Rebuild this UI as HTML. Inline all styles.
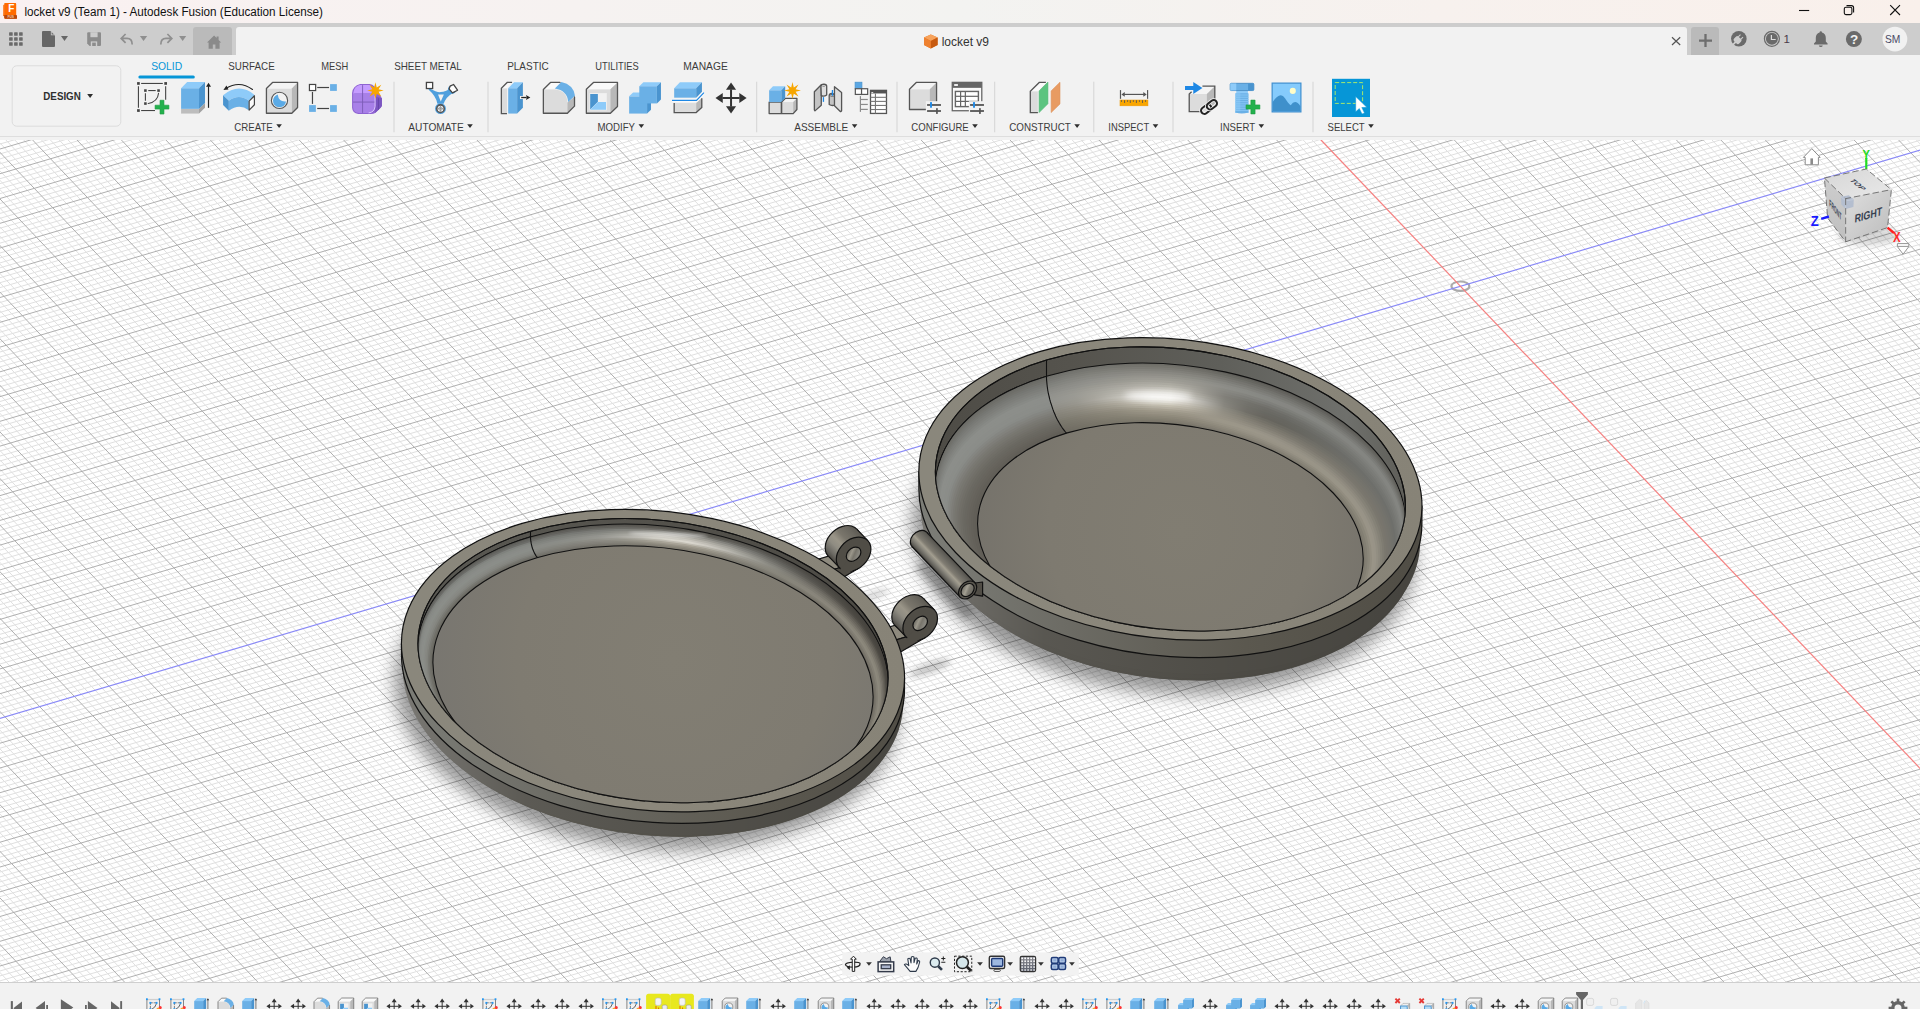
<!DOCTYPE html>
<html lang="en"><head><meta charset="utf-8"><title>locket v9 (Team 1) - Autodesk Fusion (Education License)</title>
<style>html,body{margin:0;padding:0;width:1920px;height:1009px;overflow:hidden;background:#fff}svg{position:absolute;left:0;top:0;display:block}text{font-family:"Liberation Sans",sans-serif}</style></head><body>
<svg width="1920" height="1009" viewBox="0 0 1920 1009">
<defs><linearGradient id="titlegrad" x1="0" x2="1" y1="0" y2="0"><stop offset="0" stop-color="#faf1f1"/><stop offset="0.3" stop-color="#f6f2f1"/><stop offset="0.5" stop-color="#f3f3f1"/><stop offset="0.75" stop-color="#f7f1ee"/><stop offset="1" stop-color="#f9f0eb"/></linearGradient><linearGradient id="navgrid" x1="0" x2="0" y1="0" y2="1"><stop offset="0" stop-color="#8a8a90"/><stop offset="1" stop-color="#5a5f6c"/></linearGradient><linearGradient id="vc-top" x1="0" x2="1" y1="0" y2="1"><stop offset="0" stop-color="#d6d6d6"/><stop offset="1" stop-color="#e9e9e9"/></linearGradient><linearGradient id="vc-left" x1="0" x2="0" y1="0" y2="1"><stop offset="0" stop-color="#cdcdcd"/><stop offset="1" stop-color="#bfbfbf"/></linearGradient><linearGradient id="vc-right" x1="0" x2="1" y1="0" y2="1"><stop offset="0" stop-color="#dedede"/><stop offset="1" stop-color="#bcbcbc"/></linearGradient><filter id="blur4" x="-30%" y="-60%" width="160%" height="220%"><feGaussianBlur stdDeviation="3.5"/></filter></defs>
<g id="viewport"><defs><linearGradient id="L-band" gradientUnits="userSpaceOnUse" x1="401.5" x2="904.5" y1="0" y2="0"><stop offset="0" stop-color="#7b7c76"/><stop offset="0.35" stop-color="#6b6a63"/><stop offset="0.7" stop-color="#5c5950"/><stop offset="1" stop-color="#514e46"/></linearGradient>
<linearGradient id="L-dome" gradientUnits="userSpaceOnUse" x1="401.5" x2="904.5" y1="0" y2="0"><stop offset="0" stop-color="#6f6e68"/><stop offset="0.3" stop-color="#55534c"/><stop offset="0.7" stop-color="#4b4841"/><stop offset="1" stop-color="#45423c"/></linearGradient>
<linearGradient id="L-wall" gradientUnits="userSpaceOnUse" x1="401.5" x2="904.5" y1="0" y2="0"><stop offset="0" stop-color="#5a5953"/><stop offset="0.5" stop-color="#54524c"/><stop offset="1" stop-color="#4b4943"/></linearGradient>
<linearGradient id="L-rim" gradientUnits="userSpaceOnUse" x1="401.5" x2="904.5" y1="0" y2="0"><stop offset="0" stop-color="#8a877c"/><stop offset="0.5" stop-color="#8b877b"/><stop offset="1" stop-color="#878377"/></linearGradient>
<radialGradient id="L-floor" gradientUnits="userSpaceOnUse" cx="673" cy="659.5" r="260"><stop offset="0" stop-color="#827e73"/><stop offset="0.6" stop-color="#7f7b71"/><stop offset="1" stop-color="#777570"/></radialGradient>
<clipPath id="L-domeclip"><path d="M396.5 655.1L909.5 689.2L909.5 1089.2L396.5 1055.1Z"/></clipPath>
<linearGradient id="L-domeov" gradientUnits="userSpaceOnUse" x1="401.5" x2="904.5" y1="0" y2="0"><stop offset="0" stop-color="#fff" stop-opacity="0.22"/><stop offset="0.25" stop-color="#fff" stop-opacity="0.04"/><stop offset="0.6" stop-color="#000" stop-opacity="0.04"/><stop offset="1" stop-color="#000" stop-opacity="0.16"/></linearGradient>
<clipPath id="L-in"><path d="M853.2 601.4A236 140.5 -173.5 0 1 776.1 789.8A236 140.5 -173.5 0 1 452.8 719.9A236 140.5 -173.5 0 1 529.9 531.5A236 140.5 -173.5 0 1 853.2 601.4Z"/></clipPath>
<linearGradient id="L-f0" gradientUnits="userSpaceOnUse" x1="417.9" x2="888.1" y1="0" y2="0"><stop offset="0.00" stop-color="#5b5b56"/><stop offset="0.04" stop-color="#5b5b56"/><stop offset="0.08" stop-color="#5b5b56"/><stop offset="0.12" stop-color="#5a5a55"/><stop offset="0.17" stop-color="#5a5954"/><stop offset="0.21" stop-color="#595853"/><stop offset="0.25" stop-color="#595752"/><stop offset="0.29" stop-color="#585651"/><stop offset="0.33" stop-color="#575651"/><stop offset="0.38" stop-color="#575550"/><stop offset="0.42" stop-color="#56544f"/><stop offset="0.46" stop-color="#56544e"/><stop offset="0.50" stop-color="#55534e"/><stop offset="0.54" stop-color="#55534d"/><stop offset="0.58" stop-color="#55534d"/><stop offset="0.62" stop-color="#55534d"/><stop offset="0.67" stop-color="#55534d"/><stop offset="0.71" stop-color="#53514c"/><stop offset="0.75" stop-color="#504e49"/><stop offset="0.79" stop-color="#4d4a45"/><stop offset="0.83" stop-color="#4a4742"/><stop offset="0.88" stop-color="#47443f"/><stop offset="0.92" stop-color="#45423d"/><stop offset="0.96" stop-color="#44413c"/><stop offset="1.00" stop-color="#44413c"/></linearGradient>
<linearGradient id="L-f1" gradientUnits="userSpaceOnUse" x1="418" x2="888" y1="0" y2="0"><stop offset="0.00" stop-color="#646460"/><stop offset="0.04" stop-color="#646460"/><stop offset="0.08" stop-color="#63645f"/><stop offset="0.12" stop-color="#63635f"/><stop offset="0.17" stop-color="#63635e"/><stop offset="0.21" stop-color="#63625e"/><stop offset="0.25" stop-color="#62625d"/><stop offset="0.29" stop-color="#62615d"/><stop offset="0.33" stop-color="#61605c"/><stop offset="0.38" stop-color="#605f5a"/><stop offset="0.42" stop-color="#5f5e59"/><stop offset="0.46" stop-color="#5e5c57"/><stop offset="0.50" stop-color="#5c5a54"/><stop offset="0.54" stop-color="#5b5953"/><stop offset="0.58" stop-color="#5b5953"/><stop offset="0.62" stop-color="#5c5a54"/><stop offset="0.67" stop-color="#5c5a55"/><stop offset="0.71" stop-color="#5a5954"/><stop offset="0.75" stop-color="#575550"/><stop offset="0.79" stop-color="#52504b"/><stop offset="0.83" stop-color="#4e4c46"/><stop offset="0.88" stop-color="#4a4742"/><stop offset="0.92" stop-color="#47443f"/><stop offset="0.96" stop-color="#46433e"/><stop offset="1.00" stop-color="#46433d"/></linearGradient>
<linearGradient id="L-f2" gradientUnits="userSpaceOnUse" x1="418.3" x2="887.7" y1="0" y2="0"><stop offset="0.00" stop-color="#6c6d69"/><stop offset="0.04" stop-color="#6c6d69"/><stop offset="0.08" stop-color="#6c6d69"/><stop offset="0.12" stop-color="#6c6d69"/><stop offset="0.17" stop-color="#6c6d69"/><stop offset="0.21" stop-color="#6c6d68"/><stop offset="0.25" stop-color="#6c6c68"/><stop offset="0.29" stop-color="#6c6c68"/><stop offset="0.33" stop-color="#6c6c68"/><stop offset="0.38" stop-color="#6c6c67"/><stop offset="0.42" stop-color="#6c6c67"/><stop offset="0.46" stop-color="#6c6b66"/><stop offset="0.50" stop-color="#6d6b66"/><stop offset="0.54" stop-color="#6d6b65"/><stop offset="0.58" stop-color="#6d6b65"/><stop offset="0.62" stop-color="#6c6b65"/><stop offset="0.67" stop-color="#6a6964"/><stop offset="0.71" stop-color="#666560"/><stop offset="0.75" stop-color="#5f5e59"/><stop offset="0.79" stop-color="#595752"/><stop offset="0.83" stop-color="#52504b"/><stop offset="0.88" stop-color="#4d4b45"/><stop offset="0.92" stop-color="#494741"/><stop offset="0.96" stop-color="#47453f"/><stop offset="1.00" stop-color="#47443f"/></linearGradient>
<linearGradient id="L-f3" gradientUnits="userSpaceOnUse" x1="418.8" x2="887.2" y1="0" y2="0"><stop offset="0.00" stop-color="#7f817d"/><stop offset="0.04" stop-color="#7f817d"/><stop offset="0.08" stop-color="#7f817d"/><stop offset="0.12" stop-color="#7e7f7b"/><stop offset="0.17" stop-color="#7c7e7a"/><stop offset="0.21" stop-color="#7b7c78"/><stop offset="0.25" stop-color="#7a7b77"/><stop offset="0.29" stop-color="#787a75"/><stop offset="0.33" stop-color="#787975"/><stop offset="0.38" stop-color="#7a7a76"/><stop offset="0.42" stop-color="#7d7e79"/><stop offset="0.46" stop-color="#83837d"/><stop offset="0.50" stop-color="#898882"/><stop offset="0.54" stop-color="#8c8b85"/><stop offset="0.58" stop-color="#8c8b85"/><stop offset="0.62" stop-color="#888781"/><stop offset="0.67" stop-color="#807f7a"/><stop offset="0.71" stop-color="#757570"/><stop offset="0.75" stop-color="#6a6964"/><stop offset="0.79" stop-color="#5f5e59"/><stop offset="0.83" stop-color="#575550"/><stop offset="0.88" stop-color="#504e48"/><stop offset="0.92" stop-color="#4c4943"/><stop offset="0.96" stop-color="#494640"/><stop offset="1.00" stop-color="#494640"/></linearGradient>
<linearGradient id="L-f4" gradientUnits="userSpaceOnUse" x1="419.4" x2="886.6" y1="0" y2="0"><stop offset="0.00" stop-color="#868984"/><stop offset="0.04" stop-color="#868984"/><stop offset="0.08" stop-color="#868884"/><stop offset="0.12" stop-color="#858783"/><stop offset="0.17" stop-color="#838581"/><stop offset="0.21" stop-color="#82837f"/><stop offset="0.25" stop-color="#80827d"/><stop offset="0.29" stop-color="#7f817c"/><stop offset="0.33" stop-color="#80817c"/><stop offset="0.38" stop-color="#83847f"/><stop offset="0.42" stop-color="#8a8a84"/><stop offset="0.46" stop-color="#94938d"/><stop offset="0.50" stop-color="#9e9d95"/><stop offset="0.54" stop-color="#a5a29b"/><stop offset="0.58" stop-color="#a4a29a"/><stop offset="0.62" stop-color="#9d9b94"/><stop offset="0.67" stop-color="#908f89"/><stop offset="0.71" stop-color="#81807b"/><stop offset="0.75" stop-color="#73726c"/><stop offset="0.79" stop-color="#66655f"/><stop offset="0.83" stop-color="#5d5b55"/><stop offset="0.88" stop-color="#56534d"/><stop offset="0.92" stop-color="#514e48"/><stop offset="0.96" stop-color="#4e4b45"/><stop offset="1.00" stop-color="#4e4b45"/></linearGradient>
<linearGradient id="L-f5" gradientUnits="userSpaceOnUse" x1="420.2" x2="885.8" y1="0" y2="0"><stop offset="0.00" stop-color="#898b87"/><stop offset="0.04" stop-color="#898b87"/><stop offset="0.08" stop-color="#888b86"/><stop offset="0.12" stop-color="#888a85"/><stop offset="0.17" stop-color="#878984"/><stop offset="0.21" stop-color="#868883"/><stop offset="0.25" stop-color="#858782"/><stop offset="0.29" stop-color="#858682"/><stop offset="0.33" stop-color="#878883"/><stop offset="0.38" stop-color="#8c8d87"/><stop offset="0.42" stop-color="#969690"/><stop offset="0.46" stop-color="#a4a39b"/><stop offset="0.50" stop-color="#b2b0a7"/><stop offset="0.54" stop-color="#bbb8af"/><stop offset="0.58" stop-color="#bab7ae"/><stop offset="0.62" stop-color="#b0aea6"/><stop offset="0.67" stop-color="#a09e97"/><stop offset="0.71" stop-color="#8e8d86"/><stop offset="0.75" stop-color="#7d7c76"/><stop offset="0.79" stop-color="#716f69"/><stop offset="0.83" stop-color="#67655e"/><stop offset="0.88" stop-color="#615e57"/><stop offset="0.92" stop-color="#5c5952"/><stop offset="0.96" stop-color="#5a574f"/><stop offset="1.00" stop-color="#5a574f"/></linearGradient>
<linearGradient id="L-f6" gradientUnits="userSpaceOnUse" x1="421.2" x2="884.8" y1="0" y2="0"><stop offset="0.00" stop-color="#8b8d89"/><stop offset="0.04" stop-color="#8b8d89"/><stop offset="0.08" stop-color="#8a8d88"/><stop offset="0.12" stop-color="#8a8d88"/><stop offset="0.17" stop-color="#8a8c87"/><stop offset="0.21" stop-color="#8a8c87"/><stop offset="0.25" stop-color="#8a8b86"/><stop offset="0.29" stop-color="#8a8c87"/><stop offset="0.33" stop-color="#8d8e89"/><stop offset="0.38" stop-color="#94948f"/><stop offset="0.42" stop-color="#a0a099"/><stop offset="0.46" stop-color="#b0afa8"/><stop offset="0.50" stop-color="#c1beb6"/><stop offset="0.54" stop-color="#cbc8bf"/><stop offset="0.58" stop-color="#cac7bf"/><stop offset="0.62" stop-color="#bfbcb4"/><stop offset="0.67" stop-color="#acaba3"/><stop offset="0.71" stop-color="#989790"/><stop offset="0.75" stop-color="#87867f"/><stop offset="0.79" stop-color="#7a7972"/><stop offset="0.83" stop-color="#726f68"/><stop offset="0.88" stop-color="#6c6961"/><stop offset="0.92" stop-color="#68645c"/><stop offset="0.96" stop-color="#66625a"/><stop offset="1.00" stop-color="#666259"/></linearGradient>
<linearGradient id="L-f7" gradientUnits="userSpaceOnUse" x1="422.3" x2="883.7" y1="0" y2="0"><stop offset="0.00" stop-color="#8b8e89"/><stop offset="0.04" stop-color="#8b8e89"/><stop offset="0.08" stop-color="#8b8e89"/><stop offset="0.12" stop-color="#8b8d88"/><stop offset="0.17" stop-color="#8a8c87"/><stop offset="0.21" stop-color="#8a8c87"/><stop offset="0.25" stop-color="#8a8b86"/><stop offset="0.29" stop-color="#8b8c86"/><stop offset="0.33" stop-color="#8e8f89"/><stop offset="0.38" stop-color="#969690"/><stop offset="0.42" stop-color="#a5a49e"/><stop offset="0.46" stop-color="#b9b7b0"/><stop offset="0.50" stop-color="#cdcbc2"/><stop offset="0.54" stop-color="#dad7ce"/><stop offset="0.58" stop-color="#d9d6cd"/><stop offset="0.62" stop-color="#cbc8c0"/><stop offset="0.67" stop-color="#b5b3ac"/><stop offset="0.71" stop-color="#9f9e96"/><stop offset="0.75" stop-color="#8d8c84"/><stop offset="0.79" stop-color="#817f77"/><stop offset="0.83" stop-color="#7a776f"/><stop offset="0.88" stop-color="#757269"/><stop offset="0.92" stop-color="#736f66"/><stop offset="0.96" stop-color="#716d64"/><stop offset="1.00" stop-color="#716d64"/></linearGradient>
<linearGradient id="L-f8" gradientUnits="userSpaceOnUse" x1="423.5" x2="882.5" y1="0" y2="0"><stop offset="0.00" stop-color="#898b86"/><stop offset="0.04" stop-color="#898b86"/><stop offset="0.08" stop-color="#898b86"/><stop offset="0.12" stop-color="#888a85"/><stop offset="0.17" stop-color="#888984"/><stop offset="0.21" stop-color="#878883"/><stop offset="0.25" stop-color="#878882"/><stop offset="0.29" stop-color="#878882"/><stop offset="0.33" stop-color="#8a8a83"/><stop offset="0.38" stop-color="#908f88"/><stop offset="0.42" stop-color="#9a9991"/><stop offset="0.46" stop-color="#a9a79e"/><stop offset="0.50" stop-color="#b8b5ab"/><stop offset="0.54" stop-color="#c1bdb3"/><stop offset="0.58" stop-color="#c1bdb2"/><stop offset="0.62" stop-color="#b6b3a9"/><stop offset="0.67" stop-color="#a7a49b"/><stop offset="0.71" stop-color="#97958d"/><stop offset="0.75" stop-color="#8c8a81"/><stop offset="0.79" stop-color="#848279"/><stop offset="0.83" stop-color="#807d74"/><stop offset="0.88" stop-color="#7e7b71"/><stop offset="0.92" stop-color="#7d796f"/><stop offset="0.96" stop-color="#7d796e"/><stop offset="1.00" stop-color="#7c786e"/></linearGradient>
<linearGradient id="L-f9" gradientUnits="userSpaceOnUse" x1="424.9" x2="881.1" y1="0" y2="0"><stop offset="0.00" stop-color="#878883"/><stop offset="0.04" stop-color="#878883"/><stop offset="0.08" stop-color="#868882"/><stop offset="0.12" stop-color="#868782"/><stop offset="0.17" stop-color="#858681"/><stop offset="0.21" stop-color="#84857f"/><stop offset="0.25" stop-color="#84847e"/><stop offset="0.29" stop-color="#84847d"/><stop offset="0.33" stop-color="#85847e"/><stop offset="0.38" stop-color="#898780"/><stop offset="0.42" stop-color="#908e85"/><stop offset="0.46" stop-color="#99968c"/><stop offset="0.50" stop-color="#a39f93"/><stop offset="0.54" stop-color="#a9a498"/><stop offset="0.58" stop-color="#a9a497"/><stop offset="0.62" stop-color="#a29e92"/><stop offset="0.67" stop-color="#98958b"/><stop offset="0.71" stop-color="#908d84"/><stop offset="0.75" stop-color="#8a887e"/><stop offset="0.79" stop-color="#87857b"/><stop offset="0.83" stop-color="#87847a"/><stop offset="0.88" stop-color="#878379"/><stop offset="0.92" stop-color="#878478"/><stop offset="0.96" stop-color="#888478"/><stop offset="1.00" stop-color="#888478"/></linearGradient>
<linearGradient id="L-f10" gradientUnits="userSpaceOnUse" x1="426.4" x2="879.6" y1="0" y2="0"><stop offset="0.00" stop-color="#82837d"/><stop offset="0.04" stop-color="#82837d"/><stop offset="0.08" stop-color="#82827d"/><stop offset="0.12" stop-color="#81827c"/><stop offset="0.17" stop-color="#81817b"/><stop offset="0.21" stop-color="#80807a"/><stop offset="0.25" stop-color="#807f79"/><stop offset="0.29" stop-color="#807f78"/><stop offset="0.33" stop-color="#817f78"/><stop offset="0.38" stop-color="#83817a"/><stop offset="0.42" stop-color="#88867d"/><stop offset="0.46" stop-color="#8f8c81"/><stop offset="0.50" stop-color="#969286"/><stop offset="0.54" stop-color="#9a9589"/><stop offset="0.58" stop-color="#9a9589"/><stop offset="0.62" stop-color="#959185"/><stop offset="0.67" stop-color="#8f8b81"/><stop offset="0.71" stop-color="#8a877d"/><stop offset="0.75" stop-color="#87857b"/><stop offset="0.79" stop-color="#87847a"/><stop offset="0.83" stop-color="#88857b"/><stop offset="0.88" stop-color="#8a867b"/><stop offset="0.92" stop-color="#8b877c"/><stop offset="0.96" stop-color="#8c887c"/><stop offset="1.00" stop-color="#8c887c"/></linearGradient>
<linearGradient id="L-f11" gradientUnits="userSpaceOnUse" x1="427.9" x2="878.1" y1="0" y2="0"><stop offset="0.00" stop-color="#797973"/><stop offset="0.04" stop-color="#797973"/><stop offset="0.08" stop-color="#797973"/><stop offset="0.12" stop-color="#797972"/><stop offset="0.17" stop-color="#797972"/><stop offset="0.21" stop-color="#797872"/><stop offset="0.25" stop-color="#797872"/><stop offset="0.29" stop-color="#7a7972"/><stop offset="0.33" stop-color="#7b7972"/><stop offset="0.38" stop-color="#7d7b73"/><stop offset="0.42" stop-color="#817e76"/><stop offset="0.46" stop-color="#868379"/><stop offset="0.50" stop-color="#8b877c"/><stop offset="0.54" stop-color="#8e8a7e"/><stop offset="0.58" stop-color="#8e8a7e"/><stop offset="0.62" stop-color="#8b877c"/><stop offset="0.67" stop-color="#868379"/><stop offset="0.71" stop-color="#827f76"/><stop offset="0.75" stop-color="#807d74"/><stop offset="0.79" stop-color="#7f7d73"/><stop offset="0.83" stop-color="#807d73"/><stop offset="0.88" stop-color="#817e73"/><stop offset="0.92" stop-color="#827e74"/><stop offset="0.96" stop-color="#837f74"/><stop offset="1.00" stop-color="#837f74"/></linearGradient>
<linearGradient id="L-f12" gradientUnits="userSpaceOnUse" x1="429.5" x2="876.5" y1="0" y2="0"><stop offset="0.00" stop-color="#717069"/><stop offset="0.04" stop-color="#717069"/><stop offset="0.08" stop-color="#717069"/><stop offset="0.12" stop-color="#727069"/><stop offset="0.17" stop-color="#72716a"/><stop offset="0.21" stop-color="#72716a"/><stop offset="0.25" stop-color="#73726a"/><stop offset="0.29" stop-color="#74726b"/><stop offset="0.33" stop-color="#75736c"/><stop offset="0.38" stop-color="#77756d"/><stop offset="0.42" stop-color="#7a786f"/><stop offset="0.46" stop-color="#7e7b71"/><stop offset="0.50" stop-color="#827e74"/><stop offset="0.54" stop-color="#858175"/><stop offset="0.58" stop-color="#848075"/><stop offset="0.62" stop-color="#827e74"/><stop offset="0.67" stop-color="#7e7b71"/><stop offset="0.71" stop-color="#7a786f"/><stop offset="0.75" stop-color="#78766d"/><stop offset="0.79" stop-color="#78756c"/><stop offset="0.83" stop-color="#78756c"/><stop offset="0.88" stop-color="#79756b"/><stop offset="0.92" stop-color="#79756b"/><stop offset="0.96" stop-color="#79756b"/><stop offset="1.00" stop-color="#79756b"/></linearGradient>
<linearGradient id="L-f13" gradientUnits="userSpaceOnUse" x1="431.2" x2="874.8" y1="0" y2="0"><stop offset="0.00" stop-color="#696861"/><stop offset="0.04" stop-color="#696861"/><stop offset="0.08" stop-color="#6a6861"/><stop offset="0.12" stop-color="#6a6962"/><stop offset="0.17" stop-color="#6b6962"/><stop offset="0.21" stop-color="#6c6a63"/><stop offset="0.25" stop-color="#6d6b64"/><stop offset="0.29" stop-color="#6e6c65"/><stop offset="0.33" stop-color="#6f6d66"/><stop offset="0.38" stop-color="#716f67"/><stop offset="0.42" stop-color="#747169"/><stop offset="0.46" stop-color="#77746b"/><stop offset="0.50" stop-color="#7a766d"/><stop offset="0.54" stop-color="#7c786e"/><stop offset="0.58" stop-color="#7c786e"/><stop offset="0.62" stop-color="#7a766c"/><stop offset="0.67" stop-color="#76736a"/><stop offset="0.71" stop-color="#737168"/><stop offset="0.75" stop-color="#716f66"/><stop offset="0.79" stop-color="#706d65"/><stop offset="0.83" stop-color="#706d64"/><stop offset="0.88" stop-color="#706c63"/><stop offset="0.92" stop-color="#706c63"/><stop offset="0.96" stop-color="#706c63"/><stop offset="1.00" stop-color="#706c63"/></linearGradient>
<linearGradient id="L-f14" gradientUnits="userSpaceOnUse" x1="432.8" x2="873.2" y1="0" y2="0"><stop offset="0.00" stop-color="#63615a"/><stop offset="0.04" stop-color="#63615a"/><stop offset="0.08" stop-color="#63615a"/><stop offset="0.12" stop-color="#64625b"/><stop offset="0.17" stop-color="#65635c"/><stop offset="0.21" stop-color="#66645d"/><stop offset="0.25" stop-color="#67655e"/><stop offset="0.29" stop-color="#68665f"/><stop offset="0.33" stop-color="#6a6861"/><stop offset="0.38" stop-color="#6b6962"/><stop offset="0.42" stop-color="#6d6b64"/><stop offset="0.46" stop-color="#706d66"/><stop offset="0.50" stop-color="#726f68"/><stop offset="0.54" stop-color="#74716a"/><stop offset="0.58" stop-color="#74716a"/><stop offset="0.62" stop-color="#726f68"/><stop offset="0.67" stop-color="#706d66"/><stop offset="0.71" stop-color="#6e6b64"/><stop offset="0.75" stop-color="#6c6962"/><stop offset="0.79" stop-color="#6c6961"/><stop offset="0.83" stop-color="#6c6860"/><stop offset="0.88" stop-color="#6c685f"/><stop offset="0.92" stop-color="#6c685f"/><stop offset="0.96" stop-color="#6c685f"/><stop offset="1.00" stop-color="#6c685f"/></linearGradient>
<clipPath id="L-lf"><path d="M530.5 531.3L530.5 536.8L530.5 538.4L530.7 540L530.9 541.7L531.2 543.4L531.6 545.1L532 546.8L532.5 548.5L533.1 550.1L533.8 551.6L534.4 553.1L535.2 554.4L535.9 555.6L536.7 556.7L537.5 557.6L577.5 677.6L597.5 920.6L333 920.6L333 471.3L530.5 471.3Z"/></clipPath><linearGradient id="R-band" gradientUnits="userSpaceOnUse" x1="918.9" x2="1421.9" y1="0" y2="0"><stop offset="0" stop-color="#7c7d77"/><stop offset="0.3" stop-color="#6c6b64"/><stop offset="0.65" stop-color="#5b584f"/><stop offset="1" stop-color="#504d45"/></linearGradient>
<linearGradient id="R-dome" gradientUnits="userSpaceOnUse" x1="918.9" x2="1421.9" y1="0" y2="0"><stop offset="0" stop-color="#6a6963"/><stop offset="0.25" stop-color="#54524b"/><stop offset="0.7" stop-color="#4a4740"/><stop offset="1" stop-color="#45423c"/></linearGradient>
<linearGradient id="R-wall" gradientUnits="userSpaceOnUse" x1="918.9" x2="1421.9" y1="0" y2="0"><stop offset="0" stop-color="#4d4b45"/><stop offset="0.3" stop-color="#55534d"/><stop offset="0.6" stop-color="#5f5f5a"/><stop offset="0.85" stop-color="#6f706c"/><stop offset="1" stop-color="#5a5953"/></linearGradient>
<linearGradient id="R-rim" gradientUnits="userSpaceOnUse" x1="918.9" x2="1421.9" y1="0" y2="0"><stop offset="0" stop-color="#8a877c"/><stop offset="0.5" stop-color="#8b877b"/><stop offset="1" stop-color="#878377"/></linearGradient>
<radialGradient id="R-floor" gradientUnits="userSpaceOnUse" cx="1180.4" cy="531.2" r="220"><stop offset="0" stop-color="#817d72"/><stop offset="0.6" stop-color="#7e7a70"/><stop offset="1" stop-color="#74716a"/></radialGradient>
<clipPath id="R-domeclip"><path d="M913.9 489.3L1426.9 523.5L1426.9 923.5L913.9 889.3Z"/></clipPath>
<linearGradient id="R-domeov" gradientUnits="userSpaceOnUse" x1="918.9" x2="1421.9" y1="0" y2="0"><stop offset="0" stop-color="#fff" stop-opacity="0.22"/><stop offset="0.25" stop-color="#fff" stop-opacity="0.04"/><stop offset="0.6" stop-color="#000" stop-opacity="0.04"/><stop offset="1" stop-color="#000" stop-opacity="0.16"/></linearGradient>
<clipPath id="R-in"><path d="M1370.6 429.6A236 140.5 -173.5 0 1 1293.5 618A236 140.5 -173.5 0 1 970.2 548.2A236 140.5 -173.5 0 1 1047.3 359.8A236 140.5 -173.5 0 1 1370.6 429.6Z"/></clipPath>
<linearGradient id="R-f0" gradientUnits="userSpaceOnUse" x1="935.3" x2="1405.5" y1="0" y2="0"><stop offset="0.00" stop-color="#6a6a65"/><stop offset="0.04" stop-color="#6a6a65"/><stop offset="0.08" stop-color="#6b6b66"/><stop offset="0.12" stop-color="#6c6c67"/><stop offset="0.17" stop-color="#6d6d68"/><stop offset="0.21" stop-color="#6e6e69"/><stop offset="0.25" stop-color="#70706b"/><stop offset="0.29" stop-color="#71716c"/><stop offset="0.33" stop-color="#71716c"/><stop offset="0.38" stop-color="#71706b"/><stop offset="0.42" stop-color="#6f6e68"/><stop offset="0.46" stop-color="#6e6d67"/><stop offset="0.50" stop-color="#6e6d67"/><stop offset="0.54" stop-color="#6c6b65"/><stop offset="0.58" stop-color="#676660"/><stop offset="0.62" stop-color="#62615c"/><stop offset="0.67" stop-color="#5f5e59"/><stop offset="0.71" stop-color="#5e5d58"/><stop offset="0.75" stop-color="#5d5c57"/><stop offset="0.79" stop-color="#5d5c57"/><stop offset="0.83" stop-color="#5c5b56"/><stop offset="0.88" stop-color="#5c5b56"/><stop offset="0.92" stop-color="#5c5b56"/><stop offset="0.96" stop-color="#5c5b56"/><stop offset="1.00" stop-color="#5c5b56"/></linearGradient>
<linearGradient id="R-f1" gradientUnits="userSpaceOnUse" x1="935.4" x2="1405.4" y1="0" y2="0"><stop offset="0.00" stop-color="#6e6e69"/><stop offset="0.04" stop-color="#6e6e69"/><stop offset="0.08" stop-color="#6e6f6a"/><stop offset="0.12" stop-color="#6f706b"/><stop offset="0.17" stop-color="#71716c"/><stop offset="0.21" stop-color="#72726e"/><stop offset="0.25" stop-color="#74746f"/><stop offset="0.29" stop-color="#757570"/><stop offset="0.33" stop-color="#767671"/><stop offset="0.38" stop-color="#767670"/><stop offset="0.42" stop-color="#75746e"/><stop offset="0.46" stop-color="#75746d"/><stop offset="0.50" stop-color="#75746d"/><stop offset="0.54" stop-color="#72716b"/><stop offset="0.58" stop-color="#6e6d67"/><stop offset="0.62" stop-color="#696963"/><stop offset="0.67" stop-color="#666660"/><stop offset="0.71" stop-color="#65645f"/><stop offset="0.75" stop-color="#64635e"/><stop offset="0.79" stop-color="#63635e"/><stop offset="0.83" stop-color="#63625e"/><stop offset="0.88" stop-color="#63625d"/><stop offset="0.92" stop-color="#63625d"/><stop offset="0.96" stop-color="#63625d"/><stop offset="1.00" stop-color="#63625d"/></linearGradient>
<linearGradient id="R-f2" gradientUnits="userSpaceOnUse" x1="935.6" x2="1405.2" y1="0" y2="0"><stop offset="0.00" stop-color="#72726d"/><stop offset="0.04" stop-color="#72726d"/><stop offset="0.08" stop-color="#72736e"/><stop offset="0.12" stop-color="#73746f"/><stop offset="0.17" stop-color="#757570"/><stop offset="0.21" stop-color="#767772"/><stop offset="0.25" stop-color="#787873"/><stop offset="0.29" stop-color="#7a7a75"/><stop offset="0.33" stop-color="#7b7b75"/><stop offset="0.38" stop-color="#7c7b75"/><stop offset="0.42" stop-color="#7b7a74"/><stop offset="0.46" stop-color="#7b7a74"/><stop offset="0.50" stop-color="#7b7a74"/><stop offset="0.54" stop-color="#797872"/><stop offset="0.58" stop-color="#75746e"/><stop offset="0.62" stop-color="#70706a"/><stop offset="0.67" stop-color="#6d6d68"/><stop offset="0.71" stop-color="#6c6b66"/><stop offset="0.75" stop-color="#6b6a66"/><stop offset="0.79" stop-color="#6a6a65"/><stop offset="0.83" stop-color="#6a6a65"/><stop offset="0.88" stop-color="#6a6965"/><stop offset="0.92" stop-color="#696964"/><stop offset="0.96" stop-color="#696964"/><stop offset="1.00" stop-color="#696964"/></linearGradient>
<linearGradient id="R-f3" gradientUnits="userSpaceOnUse" x1="935.9" x2="1404.9" y1="0" y2="0"><stop offset="0.00" stop-color="#757672"/><stop offset="0.04" stop-color="#757672"/><stop offset="0.08" stop-color="#767772"/><stop offset="0.12" stop-color="#777873"/><stop offset="0.17" stop-color="#797975"/><stop offset="0.21" stop-color="#7a7b76"/><stop offset="0.25" stop-color="#7c7c78"/><stop offset="0.29" stop-color="#7e7e79"/><stop offset="0.33" stop-color="#80807a"/><stop offset="0.38" stop-color="#81817b"/><stop offset="0.42" stop-color="#82817b"/><stop offset="0.46" stop-color="#82817b"/><stop offset="0.50" stop-color="#82817b"/><stop offset="0.54" stop-color="#807f79"/><stop offset="0.58" stop-color="#7c7b75"/><stop offset="0.62" stop-color="#787772"/><stop offset="0.67" stop-color="#75746f"/><stop offset="0.71" stop-color="#73736e"/><stop offset="0.75" stop-color="#72726d"/><stop offset="0.79" stop-color="#71716c"/><stop offset="0.83" stop-color="#71716c"/><stop offset="0.88" stop-color="#70706c"/><stop offset="0.92" stop-color="#70706c"/><stop offset="0.96" stop-color="#70706b"/><stop offset="1.00" stop-color="#70706b"/></linearGradient>
<linearGradient id="R-f4" gradientUnits="userSpaceOnUse" x1="936.3" x2="1404.5" y1="0" y2="0"><stop offset="0.00" stop-color="#797a76"/><stop offset="0.04" stop-color="#797a76"/><stop offset="0.08" stop-color="#7a7b76"/><stop offset="0.12" stop-color="#7b7c77"/><stop offset="0.17" stop-color="#7c7d79"/><stop offset="0.21" stop-color="#7e7f7a"/><stop offset="0.25" stop-color="#80817c"/><stop offset="0.29" stop-color="#83837e"/><stop offset="0.33" stop-color="#85857f"/><stop offset="0.38" stop-color="#878681"/><stop offset="0.42" stop-color="#888781"/><stop offset="0.46" stop-color="#898882"/><stop offset="0.50" stop-color="#898882"/><stop offset="0.54" stop-color="#878680"/><stop offset="0.58" stop-color="#83827c"/><stop offset="0.62" stop-color="#7e7e79"/><stop offset="0.67" stop-color="#7b7b76"/><stop offset="0.71" stop-color="#7a7a75"/><stop offset="0.75" stop-color="#797974"/><stop offset="0.79" stop-color="#787874"/><stop offset="0.83" stop-color="#787873"/><stop offset="0.88" stop-color="#777773"/><stop offset="0.92" stop-color="#777773"/><stop offset="0.96" stop-color="#777773"/><stop offset="1.00" stop-color="#777773"/></linearGradient>
<linearGradient id="R-f5" gradientUnits="userSpaceOnUse" x1="936.8" x2="1404" y1="0" y2="0"><stop offset="0.00" stop-color="#7d7e7a"/><stop offset="0.04" stop-color="#7d7e7a"/><stop offset="0.08" stop-color="#7e7f7b"/><stop offset="0.12" stop-color="#7f807c"/><stop offset="0.17" stop-color="#80817d"/><stop offset="0.21" stop-color="#82837e"/><stop offset="0.25" stop-color="#848580"/><stop offset="0.29" stop-color="#878782"/><stop offset="0.33" stop-color="#898984"/><stop offset="0.38" stop-color="#8c8b86"/><stop offset="0.42" stop-color="#8e8d87"/><stop offset="0.46" stop-color="#908e88"/><stop offset="0.50" stop-color="#908f88"/><stop offset="0.54" stop-color="#8d8d86"/><stop offset="0.58" stop-color="#898983"/><stop offset="0.62" stop-color="#858580"/><stop offset="0.67" stop-color="#82827d"/><stop offset="0.71" stop-color="#80807c"/><stop offset="0.75" stop-color="#7f807b"/><stop offset="0.79" stop-color="#7f7f7b"/><stop offset="0.83" stop-color="#7e7f7a"/><stop offset="0.88" stop-color="#7e7e7a"/><stop offset="0.92" stop-color="#7d7e7a"/><stop offset="0.96" stop-color="#7d7e7a"/><stop offset="1.00" stop-color="#7d7e7a"/></linearGradient>
<linearGradient id="R-f6" gradientUnits="userSpaceOnUse" x1="937.4" x2="1403.4" y1="0" y2="0"><stop offset="0.00" stop-color="#81827e"/><stop offset="0.04" stop-color="#81827e"/><stop offset="0.08" stop-color="#81837f"/><stop offset="0.12" stop-color="#838480"/><stop offset="0.17" stop-color="#848581"/><stop offset="0.21" stop-color="#868783"/><stop offset="0.25" stop-color="#898984"/><stop offset="0.29" stop-color="#8b8b86"/><stop offset="0.33" stop-color="#8e8e89"/><stop offset="0.38" stop-color="#91918b"/><stop offset="0.42" stop-color="#94938c"/><stop offset="0.46" stop-color="#96948e"/><stop offset="0.50" stop-color="#96958e"/><stop offset="0.54" stop-color="#94938c"/><stop offset="0.58" stop-color="#8f8f89"/><stop offset="0.62" stop-color="#8b8b86"/><stop offset="0.67" stop-color="#888984"/><stop offset="0.71" stop-color="#868783"/><stop offset="0.75" stop-color="#868682"/><stop offset="0.79" stop-color="#858682"/><stop offset="0.83" stop-color="#858681"/><stop offset="0.88" stop-color="#848581"/><stop offset="0.92" stop-color="#848581"/><stop offset="0.96" stop-color="#848581"/><stop offset="1.00" stop-color="#848581"/></linearGradient>
<linearGradient id="R-f7" gradientUnits="userSpaceOnUse" x1="938.2" x2="1402.6" y1="0" y2="0"><stop offset="0.00" stop-color="#848682"/><stop offset="0.04" stop-color="#858682"/><stop offset="0.08" stop-color="#858782"/><stop offset="0.12" stop-color="#868783"/><stop offset="0.17" stop-color="#888984"/><stop offset="0.21" stop-color="#898a86"/><stop offset="0.25" stop-color="#8c8c87"/><stop offset="0.29" stop-color="#8e8e89"/><stop offset="0.33" stop-color="#92918c"/><stop offset="0.38" stop-color="#96958e"/><stop offset="0.42" stop-color="#999891"/><stop offset="0.46" stop-color="#9c9a93"/><stop offset="0.50" stop-color="#9c9b93"/><stop offset="0.54" stop-color="#999891"/><stop offset="0.58" stop-color="#93928c"/><stop offset="0.62" stop-color="#8d8d88"/><stop offset="0.67" stop-color="#898a85"/><stop offset="0.71" stop-color="#878883"/><stop offset="0.75" stop-color="#868682"/><stop offset="0.79" stop-color="#858682"/><stop offset="0.83" stop-color="#848581"/><stop offset="0.88" stop-color="#848581"/><stop offset="0.92" stop-color="#848581"/><stop offset="0.96" stop-color="#848581"/><stop offset="1.00" stop-color="#848581"/></linearGradient>
<linearGradient id="R-f8" gradientUnits="userSpaceOnUse" x1="939" x2="1401.8" y1="0" y2="0"><stop offset="0.00" stop-color="#888a86"/><stop offset="0.04" stop-color="#888a86"/><stop offset="0.08" stop-color="#898a86"/><stop offset="0.12" stop-color="#8a8b87"/><stop offset="0.17" stop-color="#8b8c88"/><stop offset="0.21" stop-color="#8d8d89"/><stop offset="0.25" stop-color="#8f8f8a"/><stop offset="0.29" stop-color="#91918c"/><stop offset="0.33" stop-color="#95958f"/><stop offset="0.38" stop-color="#9a9992"/><stop offset="0.42" stop-color="#9e9d95"/><stop offset="0.46" stop-color="#a2a098"/><stop offset="0.50" stop-color="#a3a199"/><stop offset="0.54" stop-color="#9d9b94"/><stop offset="0.58" stop-color="#93928b"/><stop offset="0.62" stop-color="#898983"/><stop offset="0.67" stop-color="#83837e"/><stop offset="0.71" stop-color="#80807c"/><stop offset="0.75" stop-color="#7f807b"/><stop offset="0.79" stop-color="#7f807b"/><stop offset="0.83" stop-color="#7f807c"/><stop offset="0.88" stop-color="#80807c"/><stop offset="0.92" stop-color="#80817d"/><stop offset="0.96" stop-color="#80817d"/><stop offset="1.00" stop-color="#80817d"/></linearGradient>
<linearGradient id="R-f9" gradientUnits="userSpaceOnUse" x1="940" x2="1400.8" y1="0" y2="0"><stop offset="0.00" stop-color="#8c8e8a"/><stop offset="0.04" stop-color="#8c8e8a"/><stop offset="0.08" stop-color="#8c8e8a"/><stop offset="0.12" stop-color="#8d8f8b"/><stop offset="0.17" stop-color="#8e908b"/><stop offset="0.21" stop-color="#90918c"/><stop offset="0.25" stop-color="#92928d"/><stop offset="0.29" stop-color="#95958f"/><stop offset="0.33" stop-color="#9a9992"/><stop offset="0.38" stop-color="#a09e97"/><stop offset="0.42" stop-color="#a6a49c"/><stop offset="0.46" stop-color="#aba9a1"/><stop offset="0.50" stop-color="#acaaa1"/><stop offset="0.54" stop-color="#a4a29a"/><stop offset="0.58" stop-color="#94938c"/><stop offset="0.62" stop-color="#868580"/><stop offset="0.67" stop-color="#7d7d78"/><stop offset="0.71" stop-color="#797975"/><stop offset="0.75" stop-color="#787974"/><stop offset="0.79" stop-color="#797a75"/><stop offset="0.83" stop-color="#7a7b77"/><stop offset="0.88" stop-color="#7b7c78"/><stop offset="0.92" stop-color="#7c7d79"/><stop offset="0.96" stop-color="#7c7d79"/><stop offset="1.00" stop-color="#7c7d79"/></linearGradient>
<linearGradient id="R-f10" gradientUnits="userSpaceOnUse" x1="941" x2="1399.8" y1="0" y2="0"><stop offset="0.00" stop-color="#8c8e8a"/><stop offset="0.04" stop-color="#8c8e8a"/><stop offset="0.08" stop-color="#8c8e8a"/><stop offset="0.12" stop-color="#8d8f8b"/><stop offset="0.17" stop-color="#8f908b"/><stop offset="0.21" stop-color="#91928d"/><stop offset="0.25" stop-color="#94948e"/><stop offset="0.29" stop-color="#989791"/><stop offset="0.33" stop-color="#9e9d96"/><stop offset="0.38" stop-color="#a6a49d"/><stop offset="0.42" stop-color="#adaba3"/><stop offset="0.46" stop-color="#b4b2a9"/><stop offset="0.50" stop-color="#b5b3aa"/><stop offset="0.54" stop-color="#aaa8a0"/><stop offset="0.58" stop-color="#96948d"/><stop offset="0.62" stop-color="#83827c"/><stop offset="0.67" stop-color="#777771"/><stop offset="0.71" stop-color="#73726d"/><stop offset="0.75" stop-color="#72726d"/><stop offset="0.79" stop-color="#73736f"/><stop offset="0.83" stop-color="#757671"/><stop offset="0.88" stop-color="#777873"/><stop offset="0.92" stop-color="#787975"/><stop offset="0.96" stop-color="#797a76"/><stop offset="1.00" stop-color="#797a76"/></linearGradient>
<linearGradient id="R-f11" gradientUnits="userSpaceOnUse" x1="942.2" x2="1398.6" y1="0" y2="0"><stop offset="0.00" stop-color="#8c8e8a"/><stop offset="0.04" stop-color="#8c8e8a"/><stop offset="0.08" stop-color="#8c8e8a"/><stop offset="0.12" stop-color="#8e8f8b"/><stop offset="0.17" stop-color="#90918c"/><stop offset="0.21" stop-color="#92938d"/><stop offset="0.25" stop-color="#959590"/><stop offset="0.29" stop-color="#9a9a93"/><stop offset="0.33" stop-color="#a2a099"/><stop offset="0.38" stop-color="#abaaa2"/><stop offset="0.42" stop-color="#b5b2aa"/><stop offset="0.46" stop-color="#bdbab2"/><stop offset="0.50" stop-color="#bfbcb3"/><stop offset="0.54" stop-color="#b1afa6"/><stop offset="0.58" stop-color="#98968f"/><stop offset="0.62" stop-color="#817f79"/><stop offset="0.67" stop-color="#73726c"/><stop offset="0.71" stop-color="#6d6c67"/><stop offset="0.75" stop-color="#6c6c67"/><stop offset="0.79" stop-color="#6e6e69"/><stop offset="0.83" stop-color="#70716c"/><stop offset="0.88" stop-color="#73736f"/><stop offset="0.92" stop-color="#747571"/><stop offset="0.96" stop-color="#757672"/><stop offset="1.00" stop-color="#757672"/></linearGradient>
<linearGradient id="R-f12" gradientUnits="userSpaceOnUse" x1="943.4" x2="1397.4" y1="0" y2="0"><stop offset="0.00" stop-color="#8b8d89"/><stop offset="0.04" stop-color="#8b8d89"/><stop offset="0.08" stop-color="#8c8e8a"/><stop offset="0.12" stop-color="#8d8f8a"/><stop offset="0.17" stop-color="#8f908b"/><stop offset="0.21" stop-color="#92928d"/><stop offset="0.25" stop-color="#95958f"/><stop offset="0.29" stop-color="#9b9a94"/><stop offset="0.33" stop-color="#a4a39b"/><stop offset="0.38" stop-color="#b1afa7"/><stop offset="0.42" stop-color="#bdbab2"/><stop offset="0.46" stop-color="#c8c5bc"/><stop offset="0.50" stop-color="#c9c7be"/><stop offset="0.54" stop-color="#bab7af"/><stop offset="0.58" stop-color="#9d9b93"/><stop offset="0.62" stop-color="#82817a"/><stop offset="0.67" stop-color="#72716b"/><stop offset="0.71" stop-color="#6b6a64"/><stop offset="0.75" stop-color="#696964"/><stop offset="0.79" stop-color="#6b6b66"/><stop offset="0.83" stop-color="#6d6d69"/><stop offset="0.88" stop-color="#6f706c"/><stop offset="0.92" stop-color="#71726e"/><stop offset="0.96" stop-color="#72736f"/><stop offset="1.00" stop-color="#72736f"/></linearGradient>
<linearGradient id="R-f13" gradientUnits="userSpaceOnUse" x1="944.8" x2="1396" y1="0" y2="0"><stop offset="0.00" stop-color="#8b8d89"/><stop offset="0.04" stop-color="#8b8d89"/><stop offset="0.08" stop-color="#8c8e89"/><stop offset="0.12" stop-color="#8d8e8a"/><stop offset="0.17" stop-color="#8f8f8a"/><stop offset="0.21" stop-color="#91918b"/><stop offset="0.25" stop-color="#95948e"/><stop offset="0.29" stop-color="#9b9a93"/><stop offset="0.33" stop-color="#a6a49c"/><stop offset="0.38" stop-color="#b5b3ab"/><stop offset="0.42" stop-color="#c6c3bb"/><stop offset="0.46" stop-color="#d3d1c9"/><stop offset="0.50" stop-color="#d5d3cb"/><stop offset="0.54" stop-color="#c3c1b9"/><stop offset="0.58" stop-color="#a3a199"/><stop offset="0.62" stop-color="#84837c"/><stop offset="0.67" stop-color="#717069"/><stop offset="0.71" stop-color="#686862"/><stop offset="0.75" stop-color="#676660"/><stop offset="0.79" stop-color="#686862"/><stop offset="0.83" stop-color="#6a6a65"/><stop offset="0.88" stop-color="#6c6c68"/><stop offset="0.92" stop-color="#6d6e6a"/><stop offset="0.96" stop-color="#6e6f6b"/><stop offset="1.00" stop-color="#6e6f6b"/></linearGradient>
<linearGradient id="R-f14" gradientUnits="userSpaceOnUse" x1="946.2" x2="1394.6" y1="0" y2="0"><stop offset="0.00" stop-color="#898b87"/><stop offset="0.04" stop-color="#898b87"/><stop offset="0.08" stop-color="#8a8b87"/><stop offset="0.12" stop-color="#8b8c87"/><stop offset="0.17" stop-color="#8d8d87"/><stop offset="0.21" stop-color="#8f8f88"/><stop offset="0.25" stop-color="#93928b"/><stop offset="0.29" stop-color="#9a9991"/><stop offset="0.33" stop-color="#a7a59d"/><stop offset="0.38" stop-color="#bab8b0"/><stop offset="0.42" stop-color="#ceccc4"/><stop offset="0.46" stop-color="#dfdcd5"/><stop offset="0.50" stop-color="#e1dfd8"/><stop offset="0.54" stop-color="#cdcbc4"/><stop offset="0.58" stop-color="#a8a69f"/><stop offset="0.62" stop-color="#87857e"/><stop offset="0.67" stop-color="#716f69"/><stop offset="0.71" stop-color="#686660"/><stop offset="0.75" stop-color="#66655f"/><stop offset="0.79" stop-color="#676761"/><stop offset="0.83" stop-color="#6a6a64"/><stop offset="0.88" stop-color="#6d6d68"/><stop offset="0.92" stop-color="#6f6f6a"/><stop offset="0.96" stop-color="#70706b"/><stop offset="1.00" stop-color="#70706b"/></linearGradient>
<linearGradient id="R-f15" gradientUnits="userSpaceOnUse" x1="947.7" x2="1393.1" y1="0" y2="0"><stop offset="0.00" stop-color="#858682"/><stop offset="0.04" stop-color="#858682"/><stop offset="0.08" stop-color="#868782"/><stop offset="0.12" stop-color="#878882"/><stop offset="0.17" stop-color="#898983"/><stop offset="0.21" stop-color="#8c8b84"/><stop offset="0.25" stop-color="#918f88"/><stop offset="0.29" stop-color="#99978f"/><stop offset="0.33" stop-color="#a9a69e"/><stop offset="0.38" stop-color="#bfbdb5"/><stop offset="0.42" stop-color="#d7d4cd"/><stop offset="0.46" stop-color="#eae8e2"/><stop offset="0.50" stop-color="#edebe5"/><stop offset="0.54" stop-color="#d7d4ce"/><stop offset="0.58" stop-color="#aeaca5"/><stop offset="0.62" stop-color="#89877f"/><stop offset="0.67" stop-color="#716f68"/><stop offset="0.71" stop-color="#67655e"/><stop offset="0.75" stop-color="#65645d"/><stop offset="0.79" stop-color="#676660"/><stop offset="0.83" stop-color="#6b6a64"/><stop offset="0.88" stop-color="#6e6d67"/><stop offset="0.92" stop-color="#70706a"/><stop offset="0.96" stop-color="#72716c"/><stop offset="1.00" stop-color="#72726c"/></linearGradient>
<linearGradient id="R-f16" gradientUnits="userSpaceOnUse" x1="949.3" x2="1391.5" y1="0" y2="0"><stop offset="0.00" stop-color="#82827d"/><stop offset="0.04" stop-color="#82827d"/><stop offset="0.08" stop-color="#82827d"/><stop offset="0.12" stop-color="#84847e"/><stop offset="0.17" stop-color="#86857e"/><stop offset="0.21" stop-color="#898880"/><stop offset="0.25" stop-color="#8e8c83"/><stop offset="0.29" stop-color="#96948b"/><stop offset="0.33" stop-color="#a5a299"/><stop offset="0.38" stop-color="#bbb8af"/><stop offset="0.42" stop-color="#d2cfc7"/><stop offset="0.46" stop-color="#e4e2da"/><stop offset="0.50" stop-color="#e7e5dd"/><stop offset="0.54" stop-color="#d3d0c8"/><stop offset="0.58" stop-color="#afaca4"/><stop offset="0.62" stop-color="#8d8b82"/><stop offset="0.67" stop-color="#78766d"/><stop offset="0.71" stop-color="#6e6c64"/><stop offset="0.75" stop-color="#6c6a62"/><stop offset="0.79" stop-color="#6d6b64"/><stop offset="0.83" stop-color="#6f6e67"/><stop offset="0.88" stop-color="#717069"/><stop offset="0.92" stop-color="#73726b"/><stop offset="0.96" stop-color="#74736c"/><stop offset="1.00" stop-color="#74736c"/></linearGradient>
<linearGradient id="R-f17" gradientUnits="userSpaceOnUse" x1="951" x2="1389.8" y1="0" y2="0"><stop offset="0.00" stop-color="#7e7d78"/><stop offset="0.04" stop-color="#7e7e78"/><stop offset="0.08" stop-color="#7f7e78"/><stop offset="0.12" stop-color="#807f79"/><stop offset="0.17" stop-color="#83817a"/><stop offset="0.21" stop-color="#86847c"/><stop offset="0.25" stop-color="#8b887f"/><stop offset="0.29" stop-color="#939086"/><stop offset="0.33" stop-color="#a09d93"/><stop offset="0.38" stop-color="#b4b0a5"/><stop offset="0.42" stop-color="#c8c5ba"/><stop offset="0.46" stop-color="#d8d5cb"/><stop offset="0.50" stop-color="#dbd7cd"/><stop offset="0.54" stop-color="#cac6bc"/><stop offset="0.58" stop-color="#aca99f"/><stop offset="0.62" stop-color="#908d83"/><stop offset="0.67" stop-color="#7e7b71"/><stop offset="0.71" stop-color="#757269"/><stop offset="0.75" stop-color="#727067"/><stop offset="0.79" stop-color="#727068"/><stop offset="0.83" stop-color="#737169"/><stop offset="0.88" stop-color="#74736b"/><stop offset="0.92" stop-color="#75746c"/><stop offset="0.96" stop-color="#76746d"/><stop offset="1.00" stop-color="#76746d"/></linearGradient>
<linearGradient id="R-f18" gradientUnits="userSpaceOnUse" x1="952.8" x2="1388" y1="0" y2="0"><stop offset="0.00" stop-color="#7a7973"/><stop offset="0.04" stop-color="#7a7973"/><stop offset="0.08" stop-color="#7b7a74"/><stop offset="0.12" stop-color="#7d7b75"/><stop offset="0.17" stop-color="#7f7e76"/><stop offset="0.21" stop-color="#838078"/><stop offset="0.25" stop-color="#88857b"/><stop offset="0.29" stop-color="#8f8c82"/><stop offset="0.33" stop-color="#9c988c"/><stop offset="0.38" stop-color="#ada89c"/><stop offset="0.42" stop-color="#bfbaae"/><stop offset="0.46" stop-color="#ccc8bb"/><stop offset="0.50" stop-color="#cecabd"/><stop offset="0.54" stop-color="#c1bcb0"/><stop offset="0.58" stop-color="#a9a599"/><stop offset="0.62" stop-color="#938f84"/><stop offset="0.67" stop-color="#848075"/><stop offset="0.71" stop-color="#7c786e"/><stop offset="0.75" stop-color="#79766c"/><stop offset="0.79" stop-color="#78756c"/><stop offset="0.83" stop-color="#78756c"/><stop offset="0.88" stop-color="#78756d"/><stop offset="0.92" stop-color="#78756d"/><stop offset="0.96" stop-color="#78756d"/><stop offset="1.00" stop-color="#78756d"/></linearGradient>
<linearGradient id="R-f19" gradientUnits="userSpaceOnUse" x1="954.6" x2="1386.2" y1="0" y2="0"><stop offset="0.00" stop-color="#77766f"/><stop offset="0.04" stop-color="#77766f"/><stop offset="0.08" stop-color="#787770"/><stop offset="0.12" stop-color="#7a7871"/><stop offset="0.17" stop-color="#7d7b73"/><stop offset="0.21" stop-color="#807e75"/><stop offset="0.25" stop-color="#858278"/><stop offset="0.29" stop-color="#8c887d"/><stop offset="0.33" stop-color="#979387"/><stop offset="0.38" stop-color="#a5a194"/><stop offset="0.42" stop-color="#b5b0a2"/><stop offset="0.46" stop-color="#c0bbad"/><stop offset="0.50" stop-color="#c2bdae"/><stop offset="0.54" stop-color="#b7b2a5"/><stop offset="0.58" stop-color="#a6a194"/><stop offset="0.62" stop-color="#959185"/><stop offset="0.67" stop-color="#89857a"/><stop offset="0.71" stop-color="#827e74"/><stop offset="0.75" stop-color="#7f7b71"/><stop offset="0.79" stop-color="#7d7a70"/><stop offset="0.83" stop-color="#7c786f"/><stop offset="0.88" stop-color="#7b786e"/><stop offset="0.92" stop-color="#7a776e"/><stop offset="0.96" stop-color="#7a776e"/><stop offset="1.00" stop-color="#7a776e"/></linearGradient>
<linearGradient id="R-f20" gradientUnits="userSpaceOnUse" x1="956.5" x2="1384.3" y1="0" y2="0"><stop offset="0.00" stop-color="#74726c"/><stop offset="0.04" stop-color="#74726c"/><stop offset="0.08" stop-color="#75736d"/><stop offset="0.12" stop-color="#77756e"/><stop offset="0.17" stop-color="#7a786f"/><stop offset="0.21" stop-color="#7d7b72"/><stop offset="0.25" stop-color="#827f75"/><stop offset="0.29" stop-color="#88857a"/><stop offset="0.33" stop-color="#928d81"/><stop offset="0.38" stop-color="#9e998c"/><stop offset="0.42" stop-color="#aaa597"/><stop offset="0.46" stop-color="#b3aea0"/><stop offset="0.50" stop-color="#b5afa1"/><stop offset="0.54" stop-color="#aea89a"/><stop offset="0.58" stop-color="#a29d90"/><stop offset="0.62" stop-color="#979286"/><stop offset="0.67" stop-color="#8f8a7e"/><stop offset="0.71" stop-color="#89857a"/><stop offset="0.75" stop-color="#868277"/><stop offset="0.79" stop-color="#848076"/><stop offset="0.83" stop-color="#827e74"/><stop offset="0.88" stop-color="#817d73"/><stop offset="0.92" stop-color="#807c73"/><stop offset="0.96" stop-color="#7f7c72"/><stop offset="1.00" stop-color="#7f7c72"/></linearGradient>
<linearGradient id="R-f21" gradientUnits="userSpaceOnUse" x1="958.4" x2="1382.4" y1="0" y2="0"><stop offset="0.00" stop-color="#716f68"/><stop offset="0.04" stop-color="#716f68"/><stop offset="0.08" stop-color="#727069"/><stop offset="0.12" stop-color="#74726a"/><stop offset="0.17" stop-color="#77756c"/><stop offset="0.21" stop-color="#7a786e"/><stop offset="0.25" stop-color="#7f7c71"/><stop offset="0.29" stop-color="#858176"/><stop offset="0.33" stop-color="#8d887c"/><stop offset="0.38" stop-color="#969184"/><stop offset="0.42" stop-color="#a09b8c"/><stop offset="0.46" stop-color="#a7a192"/><stop offset="0.50" stop-color="#a8a293"/><stop offset="0.54" stop-color="#a49e90"/><stop offset="0.58" stop-color="#9e998c"/><stop offset="0.62" stop-color="#999487"/><stop offset="0.67" stop-color="#948f83"/><stop offset="0.71" stop-color="#908c80"/><stop offset="0.75" stop-color="#8e897e"/><stop offset="0.79" stop-color="#8b877c"/><stop offset="0.83" stop-color="#89857a"/><stop offset="0.88" stop-color="#878479"/><stop offset="0.92" stop-color="#868278"/><stop offset="0.96" stop-color="#858277"/><stop offset="1.00" stop-color="#858277"/></linearGradient>
<linearGradient id="R-f22" gradientUnits="userSpaceOnUse" x1="960.4" x2="1380.4" y1="0" y2="0"><stop offset="0.00" stop-color="#6e6c65"/><stop offset="0.04" stop-color="#6e6c65"/><stop offset="0.08" stop-color="#6f6d66"/><stop offset="0.12" stop-color="#716f67"/><stop offset="0.17" stop-color="#747269"/><stop offset="0.21" stop-color="#78756b"/><stop offset="0.25" stop-color="#7c796e"/><stop offset="0.29" stop-color="#827e72"/><stop offset="0.33" stop-color="#888477"/><stop offset="0.38" stop-color="#908b7d"/><stop offset="0.42" stop-color="#989384"/><stop offset="0.46" stop-color="#9d9788"/><stop offset="0.50" stop-color="#9d9789"/><stop offset="0.54" stop-color="#9c9788"/><stop offset="0.58" stop-color="#9c9789"/><stop offset="0.62" stop-color="#9c9789"/><stop offset="0.67" stop-color="#9a9588"/><stop offset="0.71" stop-color="#989387"/><stop offset="0.75" stop-color="#959185"/><stop offset="0.79" stop-color="#938e82"/><stop offset="0.83" stop-color="#908c80"/><stop offset="0.88" stop-color="#8e8a7f"/><stop offset="0.92" stop-color="#8d887d"/><stop offset="0.96" stop-color="#8c887d"/><stop offset="1.00" stop-color="#8c887d"/></linearGradient>
<linearGradient id="R-f23" gradientUnits="userSpaceOnUse" x1="962.5" x2="1378.3" y1="0" y2="0"><stop offset="0.00" stop-color="#6b6962"/><stop offset="0.04" stop-color="#6b6962"/><stop offset="0.08" stop-color="#6c6a63"/><stop offset="0.12" stop-color="#6f6c64"/><stop offset="0.17" stop-color="#726f66"/><stop offset="0.21" stop-color="#767369"/><stop offset="0.25" stop-color="#7a776c"/><stop offset="0.29" stop-color="#7f7b70"/><stop offset="0.33" stop-color="#858174"/><stop offset="0.38" stop-color="#8c877a"/><stop offset="0.42" stop-color="#938e80"/><stop offset="0.46" stop-color="#979183"/><stop offset="0.50" stop-color="#979283"/><stop offset="0.54" stop-color="#989284"/><stop offset="0.58" stop-color="#9a9487"/><stop offset="0.62" stop-color="#9b9689"/><stop offset="0.67" stop-color="#9c9789"/><stop offset="0.71" stop-color="#9b9689"/><stop offset="0.75" stop-color="#999488"/><stop offset="0.79" stop-color="#979286"/><stop offset="0.83" stop-color="#959185"/><stop offset="0.88" stop-color="#948f83"/><stop offset="0.92" stop-color="#938e82"/><stop offset="0.96" stop-color="#928e82"/><stop offset="1.00" stop-color="#928e82"/></linearGradient>
<linearGradient id="R-f24" gradientUnits="userSpaceOnUse" x1="964.6" x2="1376.2" y1="0" y2="0"><stop offset="0.00" stop-color="#696760"/><stop offset="0.04" stop-color="#696760"/><stop offset="0.08" stop-color="#6b6861"/><stop offset="0.12" stop-color="#6d6a63"/><stop offset="0.17" stop-color="#706d65"/><stop offset="0.21" stop-color="#747167"/><stop offset="0.25" stop-color="#78756a"/><stop offset="0.29" stop-color="#7d796e"/><stop offset="0.33" stop-color="#837e72"/><stop offset="0.38" stop-color="#888476"/><stop offset="0.42" stop-color="#8e897b"/><stop offset="0.46" stop-color="#918b7d"/><stop offset="0.50" stop-color="#918c7d"/><stop offset="0.54" stop-color="#928c7e"/><stop offset="0.58" stop-color="#948f82"/><stop offset="0.62" stop-color="#979284"/><stop offset="0.67" stop-color="#989386"/><stop offset="0.71" stop-color="#999487"/><stop offset="0.75" stop-color="#999487"/><stop offset="0.79" stop-color="#999487"/><stop offset="0.83" stop-color="#999487"/><stop offset="0.88" stop-color="#989487"/><stop offset="0.92" stop-color="#989487"/><stop offset="0.96" stop-color="#989387"/><stop offset="1.00" stop-color="#989387"/></linearGradient>
<linearGradient id="R-f25" gradientUnits="userSpaceOnUse" x1="966.7" x2="1374.1" y1="0" y2="0"><stop offset="0.00" stop-color="#68655e"/><stop offset="0.04" stop-color="#68655e"/><stop offset="0.08" stop-color="#69665f"/><stop offset="0.12" stop-color="#6b6961"/><stop offset="0.17" stop-color="#6e6b63"/><stop offset="0.21" stop-color="#726f65"/><stop offset="0.25" stop-color="#767368"/><stop offset="0.29" stop-color="#7b776c"/><stop offset="0.33" stop-color="#807c6f"/><stop offset="0.38" stop-color="#848073"/><stop offset="0.42" stop-color="#898476"/><stop offset="0.46" stop-color="#8b8678"/><stop offset="0.50" stop-color="#8b8678"/><stop offset="0.54" stop-color="#8c8779"/><stop offset="0.58" stop-color="#8f8a7c"/><stop offset="0.62" stop-color="#928d80"/><stop offset="0.67" stop-color="#948f82"/><stop offset="0.71" stop-color="#969184"/><stop offset="0.75" stop-color="#979285"/><stop offset="0.79" stop-color="#979285"/><stop offset="0.83" stop-color="#989386"/><stop offset="0.88" stop-color="#989487"/><stop offset="0.92" stop-color="#999487"/><stop offset="0.96" stop-color="#999487"/><stop offset="1.00" stop-color="#999487"/></linearGradient>
<linearGradient id="R-f26" gradientUnits="userSpaceOnUse" x1="968.8" x2="1372" y1="0" y2="0"><stop offset="0.00" stop-color="#66635c"/><stop offset="0.04" stop-color="#66635c"/><stop offset="0.08" stop-color="#67645d"/><stop offset="0.12" stop-color="#6a675f"/><stop offset="0.17" stop-color="#6d6a61"/><stop offset="0.21" stop-color="#716d64"/><stop offset="0.25" stop-color="#757167"/><stop offset="0.29" stop-color="#79756a"/><stop offset="0.33" stop-color="#7d796d"/><stop offset="0.38" stop-color="#817d70"/><stop offset="0.42" stop-color="#848072"/><stop offset="0.46" stop-color="#858173"/><stop offset="0.50" stop-color="#868173"/><stop offset="0.54" stop-color="#878275"/><stop offset="0.58" stop-color="#8a8578"/><stop offset="0.62" stop-color="#8d887b"/><stop offset="0.67" stop-color="#8f8a7d"/><stop offset="0.71" stop-color="#908b7f"/><stop offset="0.75" stop-color="#918c7f"/><stop offset="0.79" stop-color="#918c80"/><stop offset="0.83" stop-color="#918d80"/><stop offset="0.88" stop-color="#928d80"/><stop offset="0.92" stop-color="#928d80"/><stop offset="0.96" stop-color="#928d80"/><stop offset="1.00" stop-color="#928d80"/></linearGradient>
<linearGradient id="R-f27" gradientUnits="userSpaceOnUse" x1="971" x2="1369.8" y1="0" y2="0"><stop offset="0.00" stop-color="#64615a"/><stop offset="0.04" stop-color="#64615a"/><stop offset="0.08" stop-color="#65625b"/><stop offset="0.12" stop-color="#68655d"/><stop offset="0.17" stop-color="#6b685f"/><stop offset="0.21" stop-color="#6f6b62"/><stop offset="0.25" stop-color="#736f65"/><stop offset="0.29" stop-color="#777368"/><stop offset="0.33" stop-color="#7b776b"/><stop offset="0.38" stop-color="#7e7a6d"/><stop offset="0.42" stop-color="#807c6f"/><stop offset="0.46" stop-color="#807c6f"/><stop offset="0.50" stop-color="#817c6f"/><stop offset="0.54" stop-color="#827d71"/><stop offset="0.58" stop-color="#858074"/><stop offset="0.62" stop-color="#888377"/><stop offset="0.67" stop-color="#898578"/><stop offset="0.71" stop-color="#8a8679"/><stop offset="0.75" stop-color="#8b867a"/><stop offset="0.79" stop-color="#8b867a"/><stop offset="0.83" stop-color="#8a867a"/><stop offset="0.88" stop-color="#8a8679"/><stop offset="0.92" stop-color="#8a8679"/><stop offset="0.96" stop-color="#8a8679"/><stop offset="1.00" stop-color="#8a8679"/></linearGradient>
<linearGradient id="R-f28" gradientUnits="userSpaceOnUse" x1="973.2" x2="1367.6" y1="0" y2="0"><stop offset="0.00" stop-color="#625f58"/><stop offset="0.04" stop-color="#625f58"/><stop offset="0.08" stop-color="#646159"/><stop offset="0.12" stop-color="#66635b"/><stop offset="0.17" stop-color="#69665e"/><stop offset="0.21" stop-color="#6d6a60"/><stop offset="0.25" stop-color="#716e64"/><stop offset="0.29" stop-color="#757267"/><stop offset="0.33" stop-color="#797569"/><stop offset="0.38" stop-color="#7b776b"/><stop offset="0.42" stop-color="#7c786b"/><stop offset="0.46" stop-color="#7c776b"/><stop offset="0.50" stop-color="#7b776b"/><stop offset="0.54" stop-color="#7d796d"/><stop offset="0.58" stop-color="#7f7b6f"/><stop offset="0.62" stop-color="#817d72"/><stop offset="0.67" stop-color="#837e73"/><stop offset="0.71" stop-color="#847f74"/><stop offset="0.75" stop-color="#847f74"/><stop offset="0.79" stop-color="#837f73"/><stop offset="0.83" stop-color="#837f73"/><stop offset="0.88" stop-color="#837f73"/><stop offset="0.92" stop-color="#837f73"/><stop offset="0.96" stop-color="#837f73"/><stop offset="1.00" stop-color="#837f73"/></linearGradient>
<linearGradient id="R-f29" gradientUnits="userSpaceOnUse" x1="975.4" x2="1365.4" y1="0" y2="0"><stop offset="0.00" stop-color="#615e57"/><stop offset="0.04" stop-color="#615e57"/><stop offset="0.08" stop-color="#625f58"/><stop offset="0.12" stop-color="#65615a"/><stop offset="0.17" stop-color="#68655c"/><stop offset="0.21" stop-color="#6c685f"/><stop offset="0.25" stop-color="#706c62"/><stop offset="0.29" stop-color="#737065"/><stop offset="0.33" stop-color="#767267"/><stop offset="0.38" stop-color="#777368"/><stop offset="0.42" stop-color="#777368"/><stop offset="0.46" stop-color="#767267"/><stop offset="0.50" stop-color="#767267"/><stop offset="0.54" stop-color="#777368"/><stop offset="0.58" stop-color="#79756b"/><stop offset="0.62" stop-color="#7b776d"/><stop offset="0.67" stop-color="#7c786e"/><stop offset="0.71" stop-color="#7d796e"/><stop offset="0.75" stop-color="#7d796e"/><stop offset="0.79" stop-color="#7d796e"/><stop offset="0.83" stop-color="#7c786d"/><stop offset="0.88" stop-color="#7c786d"/><stop offset="0.92" stop-color="#7c786d"/><stop offset="0.96" stop-color="#7c786d"/><stop offset="1.00" stop-color="#7c786c"/></linearGradient>
<linearGradient id="R-f30" gradientUnits="userSpaceOnUse" x1="977.6" x2="1363.2" y1="0" y2="0"><stop offset="0.00" stop-color="#5f5c55"/><stop offset="0.04" stop-color="#5f5c55"/><stop offset="0.08" stop-color="#605d56"/><stop offset="0.12" stop-color="#636058"/><stop offset="0.17" stop-color="#66635a"/><stop offset="0.21" stop-color="#6a675d"/><stop offset="0.25" stop-color="#6e6a60"/><stop offset="0.29" stop-color="#716e63"/><stop offset="0.33" stop-color="#747065"/><stop offset="0.38" stop-color="#747065"/><stop offset="0.42" stop-color="#736f64"/><stop offset="0.46" stop-color="#716d63"/><stop offset="0.50" stop-color="#716d63"/><stop offset="0.54" stop-color="#726e64"/><stop offset="0.58" stop-color="#747066"/><stop offset="0.62" stop-color="#757168"/><stop offset="0.67" stop-color="#767269"/><stop offset="0.71" stop-color="#77736a"/><stop offset="0.75" stop-color="#77736a"/><stop offset="0.79" stop-color="#77736a"/><stop offset="0.83" stop-color="#77736a"/><stop offset="0.88" stop-color="#77736a"/><stop offset="0.92" stop-color="#77736a"/><stop offset="0.96" stop-color="#77736a"/><stop offset="1.00" stop-color="#77736a"/></linearGradient>
<clipPath id="R-lf"><path d="M1046.5 360L1046.5 376.2L1046.5 378.1L1046.6 380.1L1046.8 382.1L1047 384.2L1047.2 386.3L1047.5 388.4L1047.8 390.5L1048.2 392.7L1048.7 394.9L1049.2 397L1049.7 399.2L1050.3 401.4L1051 403.6L1051.7 405.7L1052.4 407.8L1053.1 409.9L1053.9 412L1054.8 414L1055.6 416L1056.5 417.9L1057.4 419.7L1058.4 421.5L1059.4 423.3L1060.4 424.9L1061.4 426.5L1062.4 428L1063.4 429.4L1064.4 430.7L1065.5 432L1066.5 433.1L1106.5 553.1L1126.5 748.9L850.4 748.9L850.4 300L1046.5 300Z"/></clipPath><linearGradient id="k1" gradientUnits="userSpaceOnUse" x1="839.4" y1="567.7" x2="867.8" y2="540.7"><stop offset="0" stop-color="#4a4741"/><stop offset="0.12" stop-color="#6b6963"/><stop offset="0.3" stop-color="#8f8c82"/><stop offset="0.45" stop-color="#9a9588"/><stop offset="0.62" stop-color="#7a766c"/><stop offset="0.85" stop-color="#6a675f"/><stop offset="1" stop-color="#5c5952"/></linearGradient>
<linearGradient id="k1h" gradientUnits="userSpaceOnUse" x1="846.6" y1="551.2" x2="860.6" y2="557.2"><stop offset="0" stop-color="#5f5c55"/><stop offset="0.35" stop-color="#9b978b"/><stop offset="0.55" stop-color="#77746b"/><stop offset="0.8" stop-color="#8a8880"/><stop offset="1" stop-color="#6f6d66"/></linearGradient><linearGradient id="k2" gradientUnits="userSpaceOnUse" x1="906" y1="636.9" x2="934.4" y2="609.9"><stop offset="0" stop-color="#4a4741"/><stop offset="0.12" stop-color="#6b6963"/><stop offset="0.3" stop-color="#8f8c82"/><stop offset="0.45" stop-color="#9a9588"/><stop offset="0.62" stop-color="#7a766c"/><stop offset="0.85" stop-color="#6a675f"/><stop offset="1" stop-color="#5c5952"/></linearGradient>
<linearGradient id="k2h" gradientUnits="userSpaceOnUse" x1="913.2" y1="620.4" x2="927.2" y2="626.4"><stop offset="0" stop-color="#5f5c55"/><stop offset="0.35" stop-color="#9b978b"/><stop offset="0.55" stop-color="#77746b"/><stop offset="0.8" stop-color="#8a8880"/><stop offset="1" stop-color="#6f6d66"/></linearGradient><linearGradient id="pn" gradientUnits="userSpaceOnUse" x1="960.1" y1="597.1" x2="975.1" y2="582.9"><stop offset="0" stop-color="#45423c"/><stop offset="0.12" stop-color="#66645e"/><stop offset="0.3" stop-color="#8c897f"/><stop offset="0.42" stop-color="#a39e90"/><stop offset="0.55" stop-color="#807c72"/><stop offset="0.75" stop-color="#6c6a63"/><stop offset="0.9" stop-color="#5d5b55"/><stop offset="1" stop-color="#4c4a44"/></linearGradient>
<linearGradient id="pnh" gradientUnits="userSpaceOnUse" x1="961.6" y1="587.5" x2="973.6" y2="592.5"><stop offset="0" stop-color="#6a675f"/><stop offset="0.4" stop-color="#a39f92"/><stop offset="0.6" stop-color="#7d7a70"/><stop offset="1" stop-color="#67655e"/></linearGradient><filter id="blur10" x="-20%" y="-20%" width="140%" height="140%"><feGaussianBlur stdDeviation="11"/></filter><filter id="blur9" x="-20%" y="-20%" width="140%" height="140%"><feGaussianBlur stdDeviation="9"/></filter><filter id="blur2" x="-50%" y="-200%" width="200%" height="500%"><feGaussianBlur stdDeviation="1.8"/></filter><filter id="blur3" x="-50%" y="-50%" width="200%" height="200%"><feGaussianBlur stdDeviation="3"/></filter></defs><path d="M-4 140.3L10.5 136M-4 145.2L27.2 136M-4 155.1L60.7 136M-4 160.1L77.4 136M-4 165L94.1 136M-4 170L110.8 136M-4 179.9L144.3 136M-4 184.8L161 136M-4 189.8L177.8 136M-4 194.8L194.5 136M-4 204.7L228 136M-4 209.6L244.7 136M-4 214.6L261.4 136M-4 219.5L278.1 136M-4 229.4L311.6 136M-4 234.4L328.3 136M-4 239.3L345.1 136M-4 244.3L361.8 136M-4 254.2L395.3 136M-4 259.1L412 136M-4 264.1L428.7 136M-4 269L445.4 136M-4 278.9L478.9 136M-4 283.9L495.6 136M-4 288.8L512.4 136M-4 293.8L529.1 136M-4 303.7L562.5 136M-4 308.6L579.3 136M-4 313.6L596 136M-4 318.5L612.7 136M-4 328.5L646.2 136M-4 333.4L662.9 136M-4 338.4L679.7 136M-4 343.3L696.4 136M-4 353.2L729.8 136M-4 358.2L746.6 136M-4 363.1L763.3 136M-4 368.1L780 136M-4 378L813.5 136M-4 382.9L830.2 136M-4 387.9L847 136M-4 392.8L863.7 136M-4 402.7L897.1 136M-4 407.7L913.9 136M-4 412.6L930.6 136M-4 417.6L947.3 136M-4 427.5L980.8 136M-4 432.4L997.5 136M-4 437.4L1014.3 136M-4 442.3L1031 136M-4 452.2L1064.4 136M-4 457.2L1081.2 136M-4 462.2L1097.9 136M-4 467.1L1114.6 136M-4 477L1148.1 136M-4 482L1164.8 136M-4 486.9L1181.6 136M-4 491.9L1198.3 136M-4 501.8L1231.7 136M-4 506.7L1248.5 136M-4 511.7L1265.2 136M-4 516.6L1281.9 136M-4 526.5L1315.4 136M-4 531.5L1332.1 136M-4 536.4L1348.8 136M-4 541.4L1365.6 136M-4 551.3L1399 136M-4 556.2L1415.8 136M-4 561.2L1432.5 136M-4 566.1L1449.2 136M-4 576L1482.7 136M-4 581L1499.4 136M-4 585.9L1516.1 136M-4 590.9L1532.9 136M-4 600.8L1566.3 136M-4 605.8L1583.1 136M-4 610.7L1599.8 136M-4 615.7L1616.5 136M-4 625.6L1650 136M-4 630.5L1666.7 136M-4 635.5L1683.4 136M-4 640.4L1700.2 136M-4 650.3L1733.6 136M-4 655.3L1750.4 136M-4 660.2L1767.1 136M-4 665.2L1783.8 136M-4 675.1L1817.3 136M-4 680L1834 136M-4 685L1850.7 136M-4 689.9L1867.5 136M-4 699.8L1900.9 136M-4 704.8L1917.7 136M-4 709.7L1924 139.1M-4 714.7L1924 144M-4 724.6L1924 153.9M-4 729.5L1924 158.9M-4 734.5L1924 163.8M-4 739.5L1924 168.8M-4 749.4L1924 178.7M-4 754.3L1924 183.6M-4 759.3L1924 188.6M-4 764.2L1924 193.5M-4 774.1L1924 203.4M-4 779.1L1924 208.4M-4 784L1924 213.4M-4 789L1924 218.3M-4 798.9L1924 228.2M-4 803.8L1924 233.2M-4 808.8L1924 238.1M-4 813.7L1924 243.1M-4 823.6L1924 253M-4 828.6L1924 257.9M-4 833.5L1924 262.9M-4 838.5L1924 267.8M-4 848.4L1924 277.7M-4 853.3L1924 282.7M-4 858.3L1924 287.6M-4 863.2L1924 292.6M-4 873.2L1924 302.5M-4 878.1L1924 307.4M-4 883.1L1924 312.4M-4 888L1924 317.3M-4 897.9L1924 327.2M-4 902.9L1924 332.2M-4 907.8L1924 337.1M-4 912.8L1924 342.1M-4 922.7L1924 352M-4 927.6L1924 357M-4 932.6L1924 361.9M-4 937.5L1924 366.9M-4 947.4L1924 376.8M-4 952.4L1924 381.7M-4 957.3L1924 386.7M-4 962.3L1924 391.6M-4 972.2L1924 401.5M-4 977.1L1924 406.5M-4 982.1L1924 411.4M-0.5 986L1924 416.4M33 986L1924 426.3M49.7 986L1924 431.2M66.4 986L1924 436.2M83.2 986L1924 441.1M116.6 986L1924 451M133.4 986L1924 456M150.1 986L1924 460.9M166.8 986L1924 465.9M200.3 986L1924 475.8M217 986L1924 480.8M233.7 986L1924 485.7M250.5 986L1924 490.7M283.9 986L1924 500.6M300.7 986L1924 505.5M317.4 986L1924 510.5M334.1 986L1924 515.4M367.6 986L1924 525.3M384.3 986L1924 530.3M401 986L1924 535.2M417.8 986L1924 540.2M451.2 986L1924 550.1M468 986L1924 555M484.7 986L1924 560M501.4 986L1924 564.9M534.9 986L1924 574.8M551.6 986L1924 579.8M568.3 986L1924 584.7M585.1 986L1924 589.7M618.5 986L1924 599.6M635.3 986L1924 604.5M652 986L1924 609.5M668.7 986L1924 614.5M702.2 986L1924 624.4M718.9 986L1924 629.3M735.6 986L1924 634.3M752.4 986L1924 639.2M785.8 986L1924 649.1M802.6 986L1924 654.1M819.3 986L1924 659M836 986L1924 664M869.5 986L1924 673.9M886.2 986L1924 678.8M902.9 986L1924 683.8M919.7 986L1924 688.7M953.1 986L1924 698.6M969.9 986L1924 703.6M986.6 986L1924 708.5M1003.3 986L1924 713.5M1036.8 986L1924 723.4M1053.5 986L1924 728.3M1070.2 986L1924 733.3M1087 986L1924 738.2M1120.4 986L1924 748.2M1137.2 986L1924 753.1M1153.9 986L1924 758.1M1170.6 986L1924 763M1204.1 986L1924 772.9M1220.8 986L1924 777.9M1237.5 986L1924 782.8M1254.3 986L1924 787.8M1287.7 986L1924 797.7M1304.5 986L1924 802.6M1321.2 986L1924 807.6M1337.9 986L1924 812.5M1371.4 986L1924 822.4M1388.1 986L1924 827.4M1404.8 986L1924 832.3M1421.6 986L1924 837.3M1455 986L1924 847.2M1471.8 986L1924 852.1M1488.5 986L1924 857.1M1505.2 986L1924 862M1538.7 986L1924 871.9M1555.4 986L1924 876.9M1572.1 986L1924 881.9M1588.9 986L1924 886.8M1622.3 986L1924 896.7M1639 986L1924 901.7M1655.8 986L1924 906.6M1672.5 986L1924 911.6M1706 986L1924 921.5M1722.7 986L1924 926.4M1739.4 986L1924 931.4M1756.2 986L1924 936.3M1789.6 986L1924 946.2M1806.3 986L1924 951.2M1823.1 986L1924 956.1M1839.8 986L1924 961.1M1873.3 986L1924 971M1890 986L1924 975.9M1906.7 986L1924 980.9M1923.5 986L1924 985.8M-4 977.7L3.9 986M-4 968.4L12.8 986M-4 959L21.7 986M-4 949.7L30.6 986M-4 931.1L48.4 986M-4 921.8L57.2 986M-4 912.4L66.1 986M-4 903.1L75 986M-4 884.5L92.8 986M-4 875.2L101.7 986M-4 865.8L110.6 986M-4 856.5L119.4 986M-4 837.9L137.2 986M-4 828.6L146.1 986M-4 819.2L155 986M-4 809.9L163.9 986M-4 791.3L181.6 986M-4 782L190.5 986M-4 772.6L199.4 986M-4 763.3L208.3 986M-4 744.7L226.1 986M-4 735.4L235 986M-4 726L243.8 986M-4 716.7L252.7 986M-4 698.1L270.5 986M-4 688.8L279.4 986M-4 679.4L288.3 986M-4 670.1L297.2 986M-4 651.5L314.9 986M-4 642.2L323.8 986M-4 632.8L332.7 986M-4 623.5L341.6 986M-4 604.9L359.3 986M-4 595.6L368.2 986M-4 586.2L377.1 986M-4 576.9L386 986M-4 558.3L403.8 986M-4 549L412.7 986M-4 539.6L421.5 986M-4 530.3L430.4 986M-4 511.7L448.2 986M-4 502.4L457.1 986M-4 493L466 986M-4 483.7L474.9 986M-4 465.1L492.6 986M-4 455.8L501.5 986M-4 446.4L510.4 986M-4 437.1L519.3 986M-4 418.5L537.1 986M-4 409.2L545.9 986M-4 399.8L554.8 986M-4 390.5L563.7 986M-4 371.9L581.5 986M-4 362.6L590.4 986M-4 353.2L599.3 986M-4 343.9L608.1 986M-4 325.3L625.9 986M-4 316L634.8 986M-4 306.6L643.7 986M-4 297.3L652.6 986M-4 278.7L670.3 986M-4 269.4L679.2 986M-4 260L688.1 986M-4 250.7L697 986M-4 232.1L714.8 986M-4 222.8L723.7 986M-4 213.4L732.5 986M-4 204.1L741.4 986M-4 185.5L759.2 986M-4 176.2L768.1 986M-4 166.8L777 986M-4 157.5L785.9 986M-4 138.9L803.6 986M2.1 136L812.5 986M11 136L821.4 986M19.9 136L830.3 986M37.7 136L848.1 986M46.6 136L856.9 986M55.4 136L865.8 986M64.3 136L874.7 986M82.1 136L892.5 986M91 136L901.4 986M99.9 136L910.3 986M108.8 136L919.1 986M126.5 136L936.9 986M135.4 136L945.8 986M144.3 136L954.7 986M153.2 136L963.6 986M171 136L981.3 986M179.8 136L990.2 986M188.7 136L999.1 986M197.6 136L1008 986M215.4 136L1025.8 986M224.3 136L1034.7 986M233.2 136L1043.5 986M242 136L1052.4 986M259.8 136L1070.2 986M268.7 136L1079.1 986M277.6 136L1088 986M286.5 136L1096.9 986M304.2 136L1114.6 986M313.1 136L1123.5 986M322 136L1132.4 986M330.9 136L1141.3 986M348.7 136L1159.1 986M357.6 136L1167.9 986M366.4 136L1176.8 986M375.3 136L1185.7 986M393.1 136L1203.5 986M402 136L1212.4 986M410.9 136L1221.3 986M419.8 136L1230.1 986M437.5 136L1247.9 986M446.4 136L1256.8 986M455.3 136L1265.7 986M464.2 136L1274.6 986M482 136L1292.3 986M490.8 136L1301.2 986M499.7 136L1310.1 986M508.6 136L1319 986M526.4 136L1336.8 986M535.3 136L1345.7 986M544.2 136L1354.5 986M553 136L1363.4 986M570.8 136L1381.2 986M579.7 136L1390.1 986M588.6 136L1399 986M597.5 136L1407.9 986M615.2 136L1425.6 986M624.1 136L1434.5 986M633 136L1443.4 986M641.9 136L1452.3 986M659.7 136L1470 986M668.6 136L1478.9 986M677.4 136L1487.8 986M686.3 136L1496.7 986M704.1 136L1514.5 986M713 136L1523.4 986M721.9 136L1532.2 986M730.8 136L1541.1 986M748.5 136L1558.9 986M757.4 136L1567.8 986M766.3 136L1576.7 986M775.2 136L1585.6 986M793 136L1603.3 986M801.8 136L1612.2 986M810.7 136L1621.1 986M819.6 136L1630 986M837.4 136L1647.8 986M846.3 136L1656.6 986M855.1 136L1665.5 986M864 136L1674.4 986M881.8 136L1692.2 986M890.7 136L1701.1 986M899.6 136L1710 986M908.5 136L1718.8 986M926.2 136L1736.6 986M935.1 136L1745.5 986M944 136L1754.4 986M952.9 136L1763.3 986M970.7 136L1781 986M979.5 136L1789.9 986M988.4 136L1798.8 986M997.3 136L1807.7 986M1015.1 136L1825.5 986M1024 136L1834.4 986M1032.9 136L1843.2 986M1041.7 136L1852.1 986M1059.5 136L1869.9 986M1068.4 136L1878.8 986M1077.3 136L1887.7 986M1086.2 136L1896.6 986M1103.9 136L1914.3 986M1112.8 136L1923.2 986M1121.7 136L1924 977.5M1130.6 136L1924 968.2M1148.4 136L1924 949.5M1157.3 136L1924 940.2M1166.1 136L1924 930.9M1175 136L1924 921.6M1192.8 136L1924 902.9M1201.7 136L1924 893.6M1210.6 136L1924 884.3M1219.5 136L1924 875M1237.2 136L1924 856.3M1246.1 136L1924 847M1255 136L1924 837.7M1263.9 136L1924 828.4M1281.7 136L1924 809.7M1290.5 136L1924 800.4M1299.4 136L1924 791.1M1308.3 136L1924 781.8M1326.1 136L1924 763.1M1335 136L1924 753.8M1343.9 136L1924 744.5M1352.7 136L1924 735.2M1370.5 136L1924 716.5M1379.4 136L1924 707.2M1388.3 136L1924 697.9M1397.2 136L1924 688.6M1414.9 136L1924 669.9M1423.8 136L1924 660.6M1432.7 136L1924 651.3M1441.6 136L1924 642M1459.4 136L1924 623.3M1468.3 136L1924 614M1477.1 136L1924 604.7M1486 136L1924 595.4M1503.8 136L1924 576.7M1512.7 136L1924 567.4M1521.6 136L1924 558.1M1530.5 136L1924 548.8M1548.2 136L1924 530.1M1557.1 136L1924 520.8M1566 136L1924 511.5M1574.9 136L1924 502.2M1592.7 136L1924 483.5M1601.5 136L1924 474.2M1610.4 136L1924 464.9M1619.3 136L1924 455.6M1637.1 136L1924 436.9M1646 136L1924 427.6M1654.9 136L1924 418.3M1663.7 136L1924 409M1681.5 136L1924 390.3M1690.4 136L1924 381M1699.3 136L1924 371.7M1708.2 136L1924 362.4M1725.9 136L1924 343.7M1734.8 136L1924 334.4M1743.7 136L1924 325.1M1752.6 136L1924 315.8M1770.4 136L1924 297.1M1779.3 136L1924 287.8M1788.1 136L1924 278.5M1797 136L1924 269.2M1814.8 136L1924 250.5M1823.7 136L1924 241.2M1832.6 136L1924 231.9M1841.5 136L1924 222.6M1859.2 136L1924 203.9M1868.1 136L1924 194.6M1877 136L1924 185.3M1885.9 136L1924 176M1903.6 136L1924 157.3M1912.5 136L1924 148M1921.4 136L1924 138.7" stroke="#e0e0e0" stroke-width="1" fill="none"/>
<path d="M-4 150.2L43.9 136M-4 174.9L127.6 136M-4 199.7L211.2 136M-4 224.5L294.9 136M-4 249.2L378.5 136M-4 274L462.2 136M-4 298.7L545.8 136M-4 323.5L629.5 136M-4 348.3L713.1 136M-4 373L796.8 136M-4 397.8L880.4 136M-4 422.5L964.1 136M-4 447.3L1047.7 136M-4 472.1L1131.4 136M-4 496.8L1215 136M-4 521.6L1298.7 136M-4 546.3L1382.3 136M-4 571.1L1466 136M-4 595.8L1549.6 136M-4 620.6L1633.3 136M-4 645.4L1716.9 136M-4 670.1L1800.6 136M-4 694.9L1884.2 136M-4 744.4L1924 173.7M-4 769.2L1924 198.5M-4 793.9L1924 223.3M-4 818.7L1924 248M-4 843.4L1924 272.8M-4 868.2L1924 297.5M-4 893L1924 322.3M-4 917.7L1924 347.1M-4 942.5L1924 371.8M-4 967.2L1924 396.6M16.3 986L1924 421.3M99.9 986L1924 446.1M183.6 986L1924 470.8M267.2 986L1924 495.6M350.9 986L1924 520.4M434.5 986L1924 545.1M518.2 986L1924 569.9M601.8 986L1924 594.6M685.5 986L1924 619.4M769.1 986L1924 644.2M852.7 986L1924 668.9M936.4 986L1924 693.7M1020 986L1924 718.4M1103.7 986L1924 743.2M1187.3 986L1924 768M1271 986L1924 792.7M1354.6 986L1924 817.5M1438.3 986L1924 842.2M1521.9 986L1924 867M1605.6 986L1924 891.8M1689.2 986L1924 916.5M1772.9 986L1924 941.3M1856.5 986L1924 966M-4 940.4L39.5 986M-4 893.8L83.9 986M-4 847.2L128.3 986M-4 800.6L172.8 986M-4 754L217.2 986M-4 707.4L261.6 986M-4 660.8L306 986M-4 614.2L350.5 986M-4 567.6L394.9 986M-4 521L439.3 986M-4 474.4L483.7 986M-4 427.8L528.2 986M-4 381.2L572.6 986M-4 334.6L617 986M-4 288L661.5 986M-4 241.4L705.9 986M-4 194.8L750.3 986M-4 148.2L794.7 986M28.8 136L839.2 986M73.2 136L883.6 986M117.6 136L928 986M162.1 136L972.5 986M206.5 136L1016.9 986M250.9 136L1061.3 986M295.4 136L1105.7 986M339.8 136L1150.2 986M384.2 136L1194.6 986M428.6 136L1239 986M473.1 136L1283.5 986M517.5 136L1327.9 986M561.9 136L1372.3 986M606.4 136L1416.7 986M650.8 136L1461.2 986M695.2 136L1505.6 986M739.6 136L1550 986M784.1 136L1594.4 986M828.5 136L1638.9 986M872.9 136L1683.3 986M917.3 136L1727.7 986M961.8 136L1772.2 986M1006.2 136L1816.6 986M1050.6 136L1861 986M1095.1 136L1905.4 986M1139.5 136L1924 958.9M1183.9 136L1924 912.3M1228.3 136L1924 865.7M1272.8 136L1924 819.1M1361.6 136L1924 725.9M1406.1 136L1924 679.3M1450.5 136L1924 632.7M1494.9 136L1924 586.1M1539.3 136L1924 539.5M1583.8 136L1924 492.9M1628.2 136L1924 446.3M1672.6 136L1924 399.7M1717.1 136L1924 353.1M1761.5 136L1924 306.5M1805.9 136L1924 259.9M1850.3 136L1924 213.3M1894.8 136L1924 166.7" stroke="#afafaf" stroke-width="1" fill="none"/>
<ellipse cx="1460.4" cy="286.2" rx="9" ry="4.7" fill="none" stroke="#ababab" stroke-width="2.2"/>
<path d="M-4 719.6L1924 149" stroke="#8a8af6" stroke-width="1.2" fill="none"/>
<path d="M1317.2 136L1924 772.5" stroke="#f58080" stroke-width="1.2" fill="none"/><path d="M860.8 635.1A252.4 149.7 -174 0 1 776.8 835.9A252.4 149.7 -174 0 1 431.2 762.2A252.4 149.7 -174 0 1 515.2 561.4A252.4 149.7 -174 0 1 860.8 635.1Z" fill="#000" opacity="0.4" filter="url(#blur9)"/><path d="M1378.2 479.3A252.4 149.7 -174 0 1 1294.2 680.1A252.4 149.7 -174 0 1 948.6 606.5A252.4 149.7 -174 0 1 1032.6 405.7A252.4 149.7 -174 0 1 1378.2 479.3Z" fill="#000" opacity="0.4" filter="url(#blur9)"/><ellipse cx="930" cy="668" rx="22" ry="5" transform="rotate(-20 930 668)" fill="#000" opacity="0.22" filter="url(#blur3)"/><ellipse cx="872" cy="596" rx="18" ry="4" transform="rotate(-20 872 596)" fill="#000" opacity="0.15" filter="url(#blur3)"/><path d="M925 560L975 612L965 620L915 568Z" fill="#000" opacity="0.2" filter="url(#blur3)"/><path d="M975.8 585.9L988.5 582.2L943 534.5L930.3 538.2Z" fill="#77756d" stroke="#111" stroke-width="1.1" stroke-linejoin="round"/>
<path d="M979.8 584.8L934.4 537.1" stroke="#111" stroke-width="1" fill="none"/><g clip-path="url(#R-domeclip)"><path d="M1217.5 543.4A55.3 32.8 -174 0 1 1199.1 587.4A55.3 32.8 -174 0 1 1123.3 571.3A55.3 32.8 -174 0 1 1141.7 527.3A55.3 32.8 -174 0 1 1217.5 543.4Z" fill="#484640"/><path d="M1240.5 536.4A82.3 48.8 -174 0 1 1213.1 601.9A82.3 48.8 -174 0 1 1100.3 577.8A82.3 48.8 -174 0 1 1127.7 512.3A82.3 48.8 -174 0 1 1240.5 536.4Z" fill="#484641"/><path d="M1258.8 530.6A103.9 61.6 -174 0 1 1224.3 613.2A103.9 61.6 -174 0 1 1082 582.9A103.9 61.6 -174 0 1 1116.5 500.2A103.9 61.6 -174 0 1 1258.8 530.6Z" fill="#494741"/><path d="M1274.6 525.3A122.5 72.7 -174 0 1 1233.9 622.8A122.5 72.7 -174 0 1 1066.2 587.1A122.5 72.7 -174 0 1 1106.9 489.6A122.5 72.7 -174 0 1 1274.6 525.3Z" fill="#494742"/><path d="M1288.7 520.5A139.1 82.5 -174 0 1 1242.5 631.1A139.1 82.5 -174 0 1 1052.1 590.5A139.1 82.5 -174 0 1 1098.3 479.9A139.1 82.5 -174 0 1 1288.7 520.5Z" fill="#4a4842"/><path d="M1301.5 515.8A154.1 91.4 -174 0 1 1250.3 638.4A154.1 91.4 -174 0 1 1039.3 593.4A154.1 91.4 -174 0 1 1090.5 470.9A154.1 91.4 -174 0 1 1301.5 515.8Z" fill="#4a4843"/><path d="M1313.2 511.3A167.8 99.6 -174 0 1 1257.4 644.8A167.8 99.6 -174 0 1 1027.6 595.8A167.8 99.6 -174 0 1 1083.4 462.3A167.8 99.6 -174 0 1 1313.2 511.3Z" fill="#4b4943"/><path d="M1323.9 506.8A180.4 107 -174 0 1 1263.9 650.4A180.4 107 -174 0 1 1016.9 597.7A180.4 107 -174 0 1 1076.9 454.2A180.4 107 -174 0 1 1323.9 506.8Z" fill="#4b4944"/><path d="M1333.8 502.4A192.1 113.9 -174 0 1 1270 655.2A192.1 113.9 -174 0 1 1007 599.2A192.1 113.9 -174 0 1 1070.8 446.4A192.1 113.9 -174 0 1 1333.8 502.4Z" fill="#4c4a44"/><path d="M1342.9 498A202.7 120.3 -174 0 1 1275.5 659.3A202.7 120.3 -174 0 1 997.9 600.1A202.7 120.3 -174 0 1 1065.3 438.8A202.7 120.3 -174 0 1 1342.9 498Z" fill="#4d4b45"/><path d="M1351.2 493.5A212.5 126.1 -174 0 1 1280.5 662.6A212.5 126.1 -174 0 1 989.6 600.6A212.5 126.1 -174 0 1 1060.3 431.5A212.5 126.1 -174 0 1 1351.2 493.5Z" fill="#4d4b45"/><path d="M1358.8 489A221.3 131.3 -174 0 1 1285.1 665.1A221.3 131.3 -174 0 1 982 600.5A221.3 131.3 -174 0 1 1055.7 424.4A221.3 131.3 -174 0 1 1358.8 489Z" fill="#4e4c46"/><path d="M1365.5 484.3A229.3 136 -174 0 1 1289.3 666.7A229.3 136 -174 0 1 975.3 599.8A229.3 136 -174 0 1 1051.5 417.4A229.3 136 -174 0 1 1365.5 484.3Z" fill="#4f4d47"/><path d="M1371.5 479.4A236.3 140.2 -174 0 1 1292.9 667.4A236.3 140.2 -174 0 1 969.3 598.4A236.3 140.2 -174 0 1 1047.9 410.4A236.3 140.2 -174 0 1 1371.5 479.4Z" fill="#4f4d47"/><path d="M1376.6 474.1A242.2 143.7 -174 0 1 1296 666.8A242.2 143.7 -174 0 1 964.2 596.1A242.2 143.7 -174 0 1 1044.8 403.4A242.2 143.7 -174 0 1 1376.6 474.1Z" fill="#504e48"/><path d="M1380.7 468.2A247.1 146.6 -174 0 1 1298.5 664.8A247.1 146.6 -174 0 1 960.1 592.7A247.1 146.6 -174 0 1 1042.3 396.1A247.1 146.6 -174 0 1 1380.7 468.2Z" fill="#514f49"/><path d="M1383.7 460.8A250.7 148.7 -174 0 1 1300.3 660.3A250.7 148.7 -174 0 1 957.1 587.1A250.7 148.7 -174 0 1 1040.5 387.7A250.7 148.7 -174 0 1 1383.7 460.8Z" fill="#52504a"/><path d="M1385.2 442.8A252.4 149.7 -174 0 1 1301.2 643.6A252.4 149.7 -174 0 1 955.6 570A252.4 149.7 -174 0 1 1039.6 369.2A252.4 149.7 -174 0 1 1385.2 442.8Z" fill="#54524b"/><path d="M1385.2 442.8A252.4 149.7 -174 0 1 1301.2 643.6A252.4 149.7 -174 0 1 955.6 570A252.4 149.7 -174 0 1 1039.6 369.2A252.4 149.7 -174 0 1 1385.2 442.8ZM1383.7 460.8A250.7 148.7 -174 0 1 1300.3 660.3A250.7 148.7 -174 0 1 957.1 587.1A250.7 148.7 -174 0 1 1040.5 387.7A250.7 148.7 -174 0 1 1383.7 460.8ZM1380.7 468.2A247.1 146.6 -174 0 1 1298.5 664.8A247.1 146.6 -174 0 1 960.1 592.7A247.1 146.6 -174 0 1 1042.3 396.1A247.1 146.6 -174 0 1 1380.7 468.2ZM1376.6 474.1A242.2 143.7 -174 0 1 1296 666.8A242.2 143.7 -174 0 1 964.2 596.1A242.2 143.7 -174 0 1 1044.8 403.4A242.2 143.7 -174 0 1 1376.6 474.1ZM1371.5 479.4A236.3 140.2 -174 0 1 1292.9 667.4A236.3 140.2 -174 0 1 969.3 598.4A236.3 140.2 -174 0 1 1047.9 410.4A236.3 140.2 -174 0 1 1371.5 479.4ZM1365.5 484.3A229.3 136 -174 0 1 1289.3 666.7A229.3 136 -174 0 1 975.3 599.8A229.3 136 -174 0 1 1051.5 417.4A229.3 136 -174 0 1 1365.5 484.3ZM1358.8 489A221.3 131.3 -174 0 1 1285.1 665.1A221.3 131.3 -174 0 1 982 600.5A221.3 131.3 -174 0 1 1055.7 424.4A221.3 131.3 -174 0 1 1358.8 489ZM1351.2 493.5A212.5 126.1 -174 0 1 1280.5 662.6A212.5 126.1 -174 0 1 989.6 600.6A212.5 126.1 -174 0 1 1060.3 431.5A212.5 126.1 -174 0 1 1351.2 493.5ZM1342.9 498A202.7 120.3 -174 0 1 1275.5 659.3A202.7 120.3 -174 0 1 997.9 600.1A202.7 120.3 -174 0 1 1065.3 438.8A202.7 120.3 -174 0 1 1342.9 498ZM1333.8 502.4A192.1 113.9 -174 0 1 1270 655.2A192.1 113.9 -174 0 1 1007 599.2A192.1 113.9 -174 0 1 1070.8 446.4A192.1 113.9 -174 0 1 1333.8 502.4ZM1323.9 506.8A180.4 107 -174 0 1 1263.9 650.4A180.4 107 -174 0 1 1016.9 597.7A180.4 107 -174 0 1 1076.9 454.2A180.4 107 -174 0 1 1323.9 506.8ZM1313.2 511.3A167.8 99.6 -174 0 1 1257.4 644.8A167.8 99.6 -174 0 1 1027.6 595.8A167.8 99.6 -174 0 1 1083.4 462.3A167.8 99.6 -174 0 1 1313.2 511.3ZM1301.5 515.8A154.1 91.4 -174 0 1 1250.3 638.4A154.1 91.4 -174 0 1 1039.3 593.4A154.1 91.4 -174 0 1 1090.5 470.9A154.1 91.4 -174 0 1 1301.5 515.8ZM1288.7 520.5A139.1 82.5 -174 0 1 1242.5 631.1A139.1 82.5 -174 0 1 1052.1 590.5A139.1 82.5 -174 0 1 1098.3 479.9A139.1 82.5 -174 0 1 1288.7 520.5ZM1274.6 525.3A122.5 72.7 -174 0 1 1233.9 622.8A122.5 72.7 -174 0 1 1066.2 587.1A122.5 72.7 -174 0 1 1106.9 489.6A122.5 72.7 -174 0 1 1274.6 525.3ZM1258.8 530.6A103.9 61.6 -174 0 1 1224.3 613.2A103.9 61.6 -174 0 1 1082 582.9A103.9 61.6 -174 0 1 1116.5 500.2A103.9 61.6 -174 0 1 1258.8 530.6ZM1240.5 536.4A82.3 48.8 -174 0 1 1213.1 601.9A82.3 48.8 -174 0 1 1100.3 577.8A82.3 48.8 -174 0 1 1127.7 512.3A82.3 48.8 -174 0 1 1240.5 536.4ZM1217.5 543.4A55.3 32.8 -174 0 1 1199.1 587.4A55.3 32.8 -174 0 1 1123.3 571.3A55.3 32.8 -174 0 1 1141.7 527.3A55.3 32.8 -174 0 1 1217.5 543.4Z" fill="url(#R-domeov)"/></g>
<path d="M918.9 471.8L918.9 489.3A252.4 149.7 -174 0 0 1170.4 656.7A252.4 149.7 -174 0 0 1421.9 523.5L1421.9 506Z" fill="url(#R-band)" stroke="#111" stroke-width="1.2" stroke-linejoin="round"/>

<path d="M1385.2 425.3A252.4 149.7 -174 0 1 1301.2 626.1A252.4 149.7 -174 0 1 955.6 552.5A252.4 149.7 -174 0 1 1039.6 351.7A252.4 149.7 -174 0 1 1385.2 425.3Z" fill="url(#R-rim)" stroke="#111" stroke-width="1.2"/>
<path d="M1370.6 429.6A236 140.5 -173.5 0 1 1293.5 618A236 140.5 -173.5 0 1 970.2 548.2A236 140.5 -173.5 0 1 1047.3 359.8A236 140.5 -173.5 0 1 1370.6 429.6Z" fill="url(#R-wall)" stroke="#111" stroke-width="1.1"/>
<g clip-path="url(#R-in)">
<path d="M1370.6 445.8A236 140.5 -173.5 0 1 1293.5 634.2A236 140.5 -173.5 0 1 970.2 564.4A236 140.5 -173.5 0 1 1047.3 376A236 140.5 -173.5 0 1 1370.6 445.8Z" fill="url(#R-f0)" stroke="#111" stroke-width="1.1"/>
<path d="M1370.6 447.7A236 140.4 -173.5 0 1 1293.5 636.1A236 140.4 -173.5 0 1 970.2 566.2A236 140.4 -173.5 0 1 1047.3 377.9A236 140.4 -173.5 0 1 1370.6 447.7Z" fill="url(#R-f1)"/>
<path d="M1370.4 449.7A235.8 140.3 -173.5 0 1 1293.4 637.9A235.8 140.3 -173.5 0 1 970.4 568.1A235.8 140.3 -173.5 0 1 1047.4 379.9A235.8 140.3 -173.5 0 1 1370.4 449.7Z" fill="url(#R-f2)"/>
<path d="M1370.2 451.6A235.5 140.2 -173.5 0 1 1293.3 639.6A235.5 140.2 -173.5 0 1 970.6 569.9A235.5 140.2 -173.5 0 1 1047.5 381.9A235.5 140.2 -173.5 0 1 1370.2 451.6Z" fill="url(#R-f3)"/>
<path d="M1369.8 453.6A235.1 139.9 -173.5 0 1 1293.1 641.3A235.1 139.9 -173.5 0 1 971 571.6A235.1 139.9 -173.5 0 1 1047.7 383.9A235.1 139.9 -173.5 0 1 1369.8 453.6Z" fill="url(#R-f4)"/>
<path d="M1369.4 455.6A234.6 139.6 -173.5 0 1 1292.8 642.9A234.6 139.6 -173.5 0 1 971.4 573.3A234.6 139.6 -173.5 0 1 1048 386A234.6 139.6 -173.5 0 1 1369.4 455.6Z" fill="url(#R-f5)"/>
<path d="M1368.8 457.5A234 139.3 -173.5 0 1 1292.5 644.4A234 139.3 -173.5 0 1 972 575A234 139.3 -173.5 0 1 1048.3 388.2A234 139.3 -173.5 0 1 1368.8 457.5Z" fill="url(#R-f6)"/>
<path d="M1368.2 459.5A233.2 138.9 -173.4 0 1 1292.2 645.8A233.2 138.9 -173.4 0 1 972.6 576.6A233.2 138.9 -173.4 0 1 1048.6 390.3A233.2 138.9 -173.4 0 1 1368.2 459.5Z" fill="url(#R-f7)"/>
<path d="M1367.4 461.5A232.4 138.4 -173.4 0 1 1291.8 647.1A232.4 138.4 -173.4 0 1 973.4 578.1A232.4 138.4 -173.4 0 1 1049 392.5A232.4 138.4 -173.4 0 1 1367.4 461.5Z" fill="url(#R-f8)"/>
<path d="M1366.6 463.4A231.4 137.9 -173.4 0 1 1291.3 648.3A231.4 137.9 -173.4 0 1 974.2 579.6A231.4 137.9 -173.4 0 1 1049.5 394.6A231.4 137.9 -173.4 0 1 1366.6 463.4Z" fill="url(#R-f9)"/>
<path d="M1365.6 465.4A230.4 137.3 -173.4 0 1 1290.8 649.5A230.4 137.3 -173.4 0 1 975.2 580.9A230.4 137.3 -173.4 0 1 1050 396.8A230.4 137.3 -173.4 0 1 1365.6 465.4Z" fill="url(#R-f10)"/>
<path d="M1364.6 467.3A229.2 136.6 -173.3 0 1 1290.3 650.5A229.2 136.6 -173.3 0 1 976.2 582.2A229.2 136.6 -173.3 0 1 1050.5 399A229.2 136.6 -173.3 0 1 1364.6 467.3Z" fill="url(#R-f11)"/>
<path d="M1363.5 469.2A228 135.9 -173.3 0 1 1289.7 651.5A228 135.9 -173.3 0 1 977.3 583.5A228 135.9 -173.3 0 1 1051.1 401.2A228 135.9 -173.3 0 1 1363.5 469.2Z" fill="url(#R-f12)"/>
<path d="M1362.3 471A226.6 135.1 -173.2 0 1 1289.1 652.3A226.6 135.1 -173.2 0 1 978.5 584.6A226.6 135.1 -173.2 0 1 1051.7 403.3A226.6 135.1 -173.2 0 1 1362.3 471Z" fill="url(#R-f13)"/>
<path d="M1361 472.8A225.2 134.3 -173.2 0 1 1288.4 653A225.2 134.3 -173.2 0 1 979.8 585.7A225.2 134.3 -173.2 0 1 1052.4 405.5A225.2 134.3 -173.2 0 1 1361 472.8Z" fill="url(#R-f14)"/>
<path d="M1359.7 474.6A223.7 133.5 -173.1 0 1 1287.7 653.6A223.7 133.5 -173.1 0 1 981.1 586.7A223.7 133.5 -173.1 0 1 1053.1 407.6A223.7 133.5 -173.1 0 1 1359.7 474.6Z" fill="url(#R-f15)"/>
<path d="M1358.3 476.3A222.1 132.6 -173.1 0 1 1286.9 654.2A222.1 132.6 -173.1 0 1 982.5 587.5A222.1 132.6 -173.1 0 1 1053.9 409.7A222.1 132.6 -173.1 0 1 1358.3 476.3Z" fill="url(#R-f16)"/>
<path d="M1356.8 478A220.4 131.6 -173 0 1 1286.1 654.6A220.4 131.6 -173 0 1 984 588.3A220.4 131.6 -173 0 1 1054.7 411.8A220.4 131.6 -173 0 1 1356.8 478Z" fill="url(#R-f17)"/>
<path d="M1355.2 479.6A218.7 130.6 -173 0 1 1285.3 654.8A218.7 130.6 -173 0 1 985.6 589A218.7 130.6 -173 0 1 1055.5 413.8A218.7 130.6 -173 0 1 1355.2 479.6Z" fill="url(#R-f18)"/>
<path d="M1353.6 481.2A216.9 129.6 -172.9 0 1 1284.5 655A216.9 129.6 -172.9 0 1 987.2 589.6A216.9 129.6 -172.9 0 1 1056.3 415.7A216.9 129.6 -172.9 0 1 1353.6 481.2Z" fill="url(#R-f19)"/>
<path d="M1351.9 482.6A215 128.5 -172.8 0 1 1283.6 655.1A215 128.5 -172.8 0 1 988.9 590.1A215 128.5 -172.8 0 1 1057.2 417.7A215 128.5 -172.8 0 1 1351.9 482.6Z" fill="url(#R-f20)"/>
<path d="M1350.2 484A213.1 127.4 -172.8 0 1 1282.7 655A213.1 127.4 -172.8 0 1 990.6 590.5A213.1 127.4 -172.8 0 1 1058.1 419.5A213.1 127.4 -172.8 0 1 1350.2 484Z" fill="url(#R-f21)"/>
<path d="M1348.4 485.4A211.1 126.3 -172.7 0 1 1281.7 654.8A211.1 126.3 -172.7 0 1 992.4 590.8A211.1 126.3 -172.7 0 1 1059.1 421.3A211.1 126.3 -172.7 0 1 1348.4 485.4Z" fill="url(#R-f22)"/>
<path d="M1346.6 486.6A209 125.1 -172.6 0 1 1280.8 654.5A209 125.1 -172.6 0 1 994.2 591A209 125.1 -172.6 0 1 1060 423.1A209 125.1 -172.6 0 1 1346.6 486.6Z" fill="url(#R-f23)"/>
<path d="M1344.8 487.8A207 123.9 -172.5 0 1 1279.8 654.1A207 123.9 -172.5 0 1 996 591A207 123.9 -172.5 0 1 1061 424.7A207 123.9 -172.5 0 1 1344.8 487.8Z" fill="url(#R-f24)"/>
<path d="M1342.9 488.9A204.9 122.7 -172.4 0 1 1278.8 653.6A204.9 122.7 -172.4 0 1 997.9 591A204.9 122.7 -172.4 0 1 1062 426.3A204.9 122.7 -172.4 0 1 1342.9 488.9Z" fill="url(#R-f25)"/>
<path d="M1341 489.9A202.7 121.5 -172.3 0 1 1277.8 653A202.7 121.5 -172.3 0 1 999.8 590.9A202.7 121.5 -172.3 0 1 1063 427.8A202.7 121.5 -172.3 0 1 1341 489.9Z" fill="url(#R-f26)"/>
<path d="M1339.1 490.8A200.6 120.3 -172.3 0 1 1276.7 652.3A200.6 120.3 -172.3 0 1 1001.7 590.7A200.6 120.3 -172.3 0 1 1064.1 429.2A200.6 120.3 -172.3 0 1 1339.1 490.8Z" fill="url(#R-f27)"/>
<path d="M1337.1 491.7A198.4 119 -172.2 0 1 1275.7 651.5A198.4 119 -172.2 0 1 1003.7 590.4A198.4 119 -172.2 0 1 1065.1 430.6A198.4 119 -172.2 0 1 1337.1 491.7Z" fill="url(#R-f28)"/>
<path d="M1335.2 492.4A196.2 117.8 -172.1 0 1 1274.7 650.5A196.2 117.8 -172.1 0 1 1005.6 589.9A196.2 117.8 -172.1 0 1 1066.1 431.8A196.2 117.8 -172.1 0 1 1335.2 492.4Z" fill="url(#R-f29)"/>
<path d="M1333.2 493A194 116.5 -172 0 1 1273.6 649.5A194 116.5 -172 0 1 1007.6 589.4A194 116.5 -172 0 1 1067.2 432.9A194 116.5 -172 0 1 1333.2 493Z" fill="url(#R-f30)"/>
<g clip-path="url(#R-lf)">
<path d="M1370.6 445.8A236 140.5 -173.5 0 1 1293.5 634.2A236 140.5 -173.5 0 1 970.2 564.4A236 140.5 -173.5 0 1 1047.3 376A236 140.5 -173.5 0 1 1370.6 445.8Z" fill="#6a6a65" stroke="#111" stroke-width="1.1"/>
<path d="M1370.6 447.7A236 140.4 -173.5 0 1 1293.5 636.1A236 140.4 -173.5 0 1 970.2 566.2A236 140.4 -173.5 0 1 1047.3 377.9A236 140.4 -173.5 0 1 1370.6 447.7Z" fill="#6e6e69"/>
<path d="M1370.4 449.7A235.8 140.3 -173.5 0 1 1293.4 637.9A235.8 140.3 -173.5 0 1 970.4 568.1A235.8 140.3 -173.5 0 1 1047.4 379.9A235.8 140.3 -173.5 0 1 1370.4 449.7Z" fill="#72726d"/>
<path d="M1370.2 451.6A235.5 140.2 -173.5 0 1 1293.3 639.6A235.5 140.2 -173.5 0 1 970.6 569.9A235.5 140.2 -173.5 0 1 1047.5 381.9A235.5 140.2 -173.5 0 1 1370.2 451.6Z" fill="#757672"/>
<path d="M1369.8 453.6A235.1 139.9 -173.5 0 1 1293.1 641.3A235.1 139.9 -173.5 0 1 971 571.6A235.1 139.9 -173.5 0 1 1047.7 383.9A235.1 139.9 -173.5 0 1 1369.8 453.6Z" fill="#797a76"/>
<path d="M1369.4 455.6A234.6 139.6 -173.5 0 1 1292.8 642.9A234.6 139.6 -173.5 0 1 971.4 573.3A234.6 139.6 -173.5 0 1 1048 386A234.6 139.6 -173.5 0 1 1369.4 455.6Z" fill="#7d7e7a"/>
<path d="M1368.8 457.5A234 139.3 -173.5 0 1 1292.5 644.4A234 139.3 -173.5 0 1 972 575A234 139.3 -173.5 0 1 1048.3 388.2A234 139.3 -173.5 0 1 1368.8 457.5Z" fill="#81827e"/>
<path d="M1368.2 459.5A233.2 138.9 -173.4 0 1 1292.2 645.8A233.2 138.9 -173.4 0 1 972.6 576.6A233.2 138.9 -173.4 0 1 1048.6 390.3A233.2 138.9 -173.4 0 1 1368.2 459.5Z" fill="#848682"/>
<path d="M1367.4 461.5A232.4 138.4 -173.4 0 1 1291.8 647.1A232.4 138.4 -173.4 0 1 973.4 578.1A232.4 138.4 -173.4 0 1 1049 392.5A232.4 138.4 -173.4 0 1 1367.4 461.5Z" fill="#888a86"/>
<path d="M1366.6 463.4A231.4 137.9 -173.4 0 1 1291.3 648.3A231.4 137.9 -173.4 0 1 974.2 579.6A231.4 137.9 -173.4 0 1 1049.5 394.6A231.4 137.9 -173.4 0 1 1366.6 463.4Z" fill="#8c8e8a"/>
<path d="M1365.6 465.4A230.4 137.3 -173.4 0 1 1290.8 649.5A230.4 137.3 -173.4 0 1 975.2 580.9A230.4 137.3 -173.4 0 1 1050 396.8A230.4 137.3 -173.4 0 1 1365.6 465.4Z" fill="#8c8e8a"/>
<path d="M1364.6 467.3A229.2 136.6 -173.3 0 1 1290.3 650.5A229.2 136.6 -173.3 0 1 976.2 582.2A229.2 136.6 -173.3 0 1 1050.5 399A229.2 136.6 -173.3 0 1 1364.6 467.3Z" fill="#8c8e8a"/>
<path d="M1363.5 469.2A228 135.9 -173.3 0 1 1289.7 651.5A228 135.9 -173.3 0 1 977.3 583.5A228 135.9 -173.3 0 1 1051.1 401.2A228 135.9 -173.3 0 1 1363.5 469.2Z" fill="#8b8d89"/>
<path d="M1362.3 471A226.6 135.1 -173.2 0 1 1289.1 652.3A226.6 135.1 -173.2 0 1 978.5 584.6A226.6 135.1 -173.2 0 1 1051.7 403.3A226.6 135.1 -173.2 0 1 1362.3 471Z" fill="#8b8d89"/>
<path d="M1361 472.8A225.2 134.3 -173.2 0 1 1288.4 653A225.2 134.3 -173.2 0 1 979.8 585.7A225.2 134.3 -173.2 0 1 1052.4 405.5A225.2 134.3 -173.2 0 1 1361 472.8Z" fill="#898b87"/>
<path d="M1359.7 474.6A223.7 133.5 -173.1 0 1 1287.7 653.6A223.7 133.5 -173.1 0 1 981.1 586.7A223.7 133.5 -173.1 0 1 1053.1 407.6A223.7 133.5 -173.1 0 1 1359.7 474.6Z" fill="#858682"/>
<path d="M1358.3 476.3A222.1 132.6 -173.1 0 1 1286.9 654.2A222.1 132.6 -173.1 0 1 982.5 587.5A222.1 132.6 -173.1 0 1 1053.9 409.7A222.1 132.6 -173.1 0 1 1358.3 476.3Z" fill="#82827d"/>
<path d="M1356.8 478A220.4 131.6 -173 0 1 1286.1 654.6A220.4 131.6 -173 0 1 984 588.3A220.4 131.6 -173 0 1 1054.7 411.8A220.4 131.6 -173 0 1 1356.8 478Z" fill="#7e7d78"/>
<path d="M1355.2 479.6A218.7 130.6 -173 0 1 1285.3 654.8A218.7 130.6 -173 0 1 985.6 589A218.7 130.6 -173 0 1 1055.5 413.8A218.7 130.6 -173 0 1 1355.2 479.6Z" fill="#7a7973"/>
<path d="M1353.6 481.2A216.9 129.6 -172.9 0 1 1284.5 655A216.9 129.6 -172.9 0 1 987.2 589.6A216.9 129.6 -172.9 0 1 1056.3 415.7A216.9 129.6 -172.9 0 1 1353.6 481.2Z" fill="#77766f"/>
<path d="M1351.9 482.6A215 128.5 -172.8 0 1 1283.6 655.1A215 128.5 -172.8 0 1 988.9 590.1A215 128.5 -172.8 0 1 1057.2 417.7A215 128.5 -172.8 0 1 1351.9 482.6Z" fill="#74726c"/>
<path d="M1350.2 484A213.1 127.4 -172.8 0 1 1282.7 655A213.1 127.4 -172.8 0 1 990.6 590.5A213.1 127.4 -172.8 0 1 1058.1 419.5A213.1 127.4 -172.8 0 1 1350.2 484Z" fill="#716f68"/>
<path d="M1348.4 485.4A211.1 126.3 -172.7 0 1 1281.7 654.8A211.1 126.3 -172.7 0 1 992.4 590.8A211.1 126.3 -172.7 0 1 1059.1 421.3A211.1 126.3 -172.7 0 1 1348.4 485.4Z" fill="#6e6c65"/>
<path d="M1346.6 486.6A209 125.1 -172.6 0 1 1280.8 654.5A209 125.1 -172.6 0 1 994.2 591A209 125.1 -172.6 0 1 1060 423.1A209 125.1 -172.6 0 1 1346.6 486.6Z" fill="#6b6962"/>
<path d="M1344.8 487.8A207 123.9 -172.5 0 1 1279.8 654.1A207 123.9 -172.5 0 1 996 591A207 123.9 -172.5 0 1 1061 424.7A207 123.9 -172.5 0 1 1344.8 487.8Z" fill="#696760"/>
<path d="M1342.9 488.9A204.9 122.7 -172.4 0 1 1278.8 653.6A204.9 122.7 -172.4 0 1 997.9 591A204.9 122.7 -172.4 0 1 1062 426.3A204.9 122.7 -172.4 0 1 1342.9 488.9Z" fill="#68655e"/>
<path d="M1341 489.9A202.7 121.5 -172.3 0 1 1277.8 653A202.7 121.5 -172.3 0 1 999.8 590.9A202.7 121.5 -172.3 0 1 1063 427.8A202.7 121.5 -172.3 0 1 1341 489.9Z" fill="#66635c"/>
<path d="M1339.1 490.8A200.6 120.3 -172.3 0 1 1276.7 652.3A200.6 120.3 -172.3 0 1 1001.7 590.7A200.6 120.3 -172.3 0 1 1064.1 429.2A200.6 120.3 -172.3 0 1 1339.1 490.8Z" fill="#64615a"/>
<path d="M1337.1 491.7A198.4 119 -172.2 0 1 1275.7 651.5A198.4 119 -172.2 0 1 1003.7 590.4A198.4 119 -172.2 0 1 1065.1 430.6A198.4 119 -172.2 0 1 1337.1 491.7Z" fill="#625f58"/>
<path d="M1335.2 492.4A196.2 117.8 -172.1 0 1 1274.7 650.5A196.2 117.8 -172.1 0 1 1005.6 589.9A196.2 117.8 -172.1 0 1 1066.1 431.8A196.2 117.8 -172.1 0 1 1335.2 492.4Z" fill="#615e57"/>
<path d="M1333.2 493A194 116.5 -172 0 1 1273.6 649.5A194 116.5 -172 0 1 1007.6 589.4A194 116.5 -172 0 1 1067.2 432.9A194 116.5 -172 0 1 1333.2 493Z" fill="#5f5c55"/>
</g>
<path d="M1333.2 493A194 116.5 -172 0 1 1273.6 649.5A194 116.5 -172 0 1 1007.6 589.4A194 116.5 -172 0 1 1067.2 432.9A194 116.5 -172 0 1 1333.2 493Z" fill="url(#R-floor)" stroke="#111" stroke-width="1.1"/>
<path d="M1046.5 360L1046.5 376.2L1046.5 378.1L1046.6 380.1L1046.8 382.1L1047 384.2L1047.2 386.3L1047.5 388.4L1047.8 390.5L1048.2 392.7L1048.7 394.9L1049.2 397L1049.7 399.2L1050.3 401.4L1051 403.6L1051.7 405.7L1052.4 407.8L1053.1 409.9L1053.9 412L1054.8 414L1055.6 416L1056.5 417.9L1057.4 419.7L1058.4 421.5L1059.4 423.3L1060.4 424.9L1061.4 426.5L1062.4 428L1063.4 429.4L1064.4 430.7L1065.5 432L1066.5 433.1" fill="none" stroke="#111" stroke-width="1.1"/>
<ellipse cx="1158" cy="396" rx="34" ry="4.2" transform="rotate(1 1158 396)" fill="#fff" opacity="0.75" filter="url(#blur3)"/>
</g>
<path d="M1370.6 429.6A236 140.5 -173.5 0 1 1293.5 618A236 140.5 -173.5 0 1 970.2 548.2A236 140.5 -173.5 0 1 1047.3 359.8A236 140.5 -173.5 0 1 1370.6 429.6Z" fill="none" stroke="#111" stroke-width="1.1"/><path d="M975.2 583L982.6 582V596.2L974.6 594.8Z" fill="#504d46" stroke="#111" stroke-width="1.2" stroke-linejoin="round"/>
<path d="M919.4 530.8A10.3 7.6 -43.6 0 1 928.5 536.7A10.3 7.6 -43.6 0 1 919.4 548A10.3 7.6 -43.6 0 1 910.3 542.1A10.3 7.6 -43.6 0 1 919.4 530.8Z" fill="url(#pn)" stroke="#111" stroke-width="1.2"/>
<path d="M960.1 597.1L911.9 546.5L926.8 532.3L975.1 582.9Z" fill="url(#pn)"/>
<path d="M960.1 597.1L911.9 546.5M975.1 582.9L926.8 532.3" stroke="#111" stroke-width="1.2" fill="none"/>
<path d="M967.6 581.4A10.3 7.6 -43.6 0 1 976.7 587.3A10.3 7.6 -43.6 0 1 967.6 598.6A10.3 7.6 -43.6 0 1 958.5 592.7A10.3 7.6 -43.6 0 1 967.6 581.4Z" fill="#5a574f" stroke="#111" stroke-width="1.2"/>
<path d="M967.6 583.8A7.5 5.5 -43.6 0 1 974.2 588.1A7.5 5.5 -43.6 0 1 967.6 596.2A7.5 5.5 -43.6 0 1 961 591.9A7.5 5.5 -43.6 0 1 967.6 583.8Z" fill="url(#pnh)" stroke="#111" stroke-width="1.2"/><path d="M840.1 567.5L819 573.8L807.9 562.2L833.5 554.6Z" fill="#8e8a7e" stroke="#111" stroke-width="1.1" stroke-linejoin="round"/>
<path d="M858.7 568.3L819 591.6L819 573.8L839.4 567.7Z" fill="#504d46" stroke="#111" stroke-width="1.2" stroke-linejoin="round"/>
<path d="M842.6 526.3A19.6 14.4 -43.6 0 1 859.9 537.5A19.6 14.4 -43.6 0 1 842.6 558.9A19.6 14.4 -43.6 0 1 825.2 547.7A19.6 14.4 -43.6 0 1 842.6 526.3Z" fill="url(#k1)" stroke="#111" stroke-width="1.2"/>
<path d="M839.4 567.7L828.4 556.2L856.8 529.1L867.8 540.7Z" fill="url(#k1)"/>
<path d="M839.4 567.7L828.4 556.2M867.8 540.7L856.8 529.1" stroke="#111" stroke-width="1.2" fill="none"/>
<path d="M853.6 537.9A19.6 14.4 -43.6 0 1 870.9 549.1A19.6 14.4 -43.6 0 1 853.6 570.5A19.6 14.4 -43.6 0 1 836.3 559.3A19.6 14.4 -43.6 0 1 853.6 537.9Z" fill="#504d46" stroke="#111" stroke-width="1.2"/>
<path d="M857.7 567.6L841.5 576.8L840.4 568.7L850.1 558.5Z" fill="#504d46"/>
<path d="M853.6 547.4A8.2 6 -43.6 0 1 860.9 552A8.2 6 -43.6 0 1 853.6 561A8.2 6 -43.6 0 1 846.3 556.4A8.2 6 -43.6 0 1 853.6 547.4Z" fill="url(#k1h)" stroke="#111" stroke-width="1.2"/><path d="M906.7 636.7L885.6 643L874.5 631.4L900.1 623.8Z" fill="#8e8a7e" stroke="#111" stroke-width="1.1" stroke-linejoin="round"/>
<path d="M925.3 637.5L885.6 660.8L885.6 643L906 636.9Z" fill="#504d46" stroke="#111" stroke-width="1.2" stroke-linejoin="round"/>
<path d="M909.2 595.5A19.6 14.4 -43.6 0 1 926.5 606.7A19.6 14.4 -43.6 0 1 909.2 628.1A19.6 14.4 -43.6 0 1 891.8 616.9A19.6 14.4 -43.6 0 1 909.2 595.5Z" fill="url(#k2)" stroke="#111" stroke-width="1.2"/>
<path d="M906 636.9L895 625.4L923.4 598.3L934.4 609.9Z" fill="url(#k2)"/>
<path d="M906 636.9L895 625.4M934.4 609.9L923.4 598.3" stroke="#111" stroke-width="1.2" fill="none"/>
<path d="M920.2 607.1A19.6 14.4 -43.6 0 1 937.5 618.3A19.6 14.4 -43.6 0 1 920.2 639.7A19.6 14.4 -43.6 0 1 902.9 628.5A19.6 14.4 -43.6 0 1 920.2 607.1Z" fill="#504d46" stroke="#111" stroke-width="1.2"/>
<path d="M924.3 636.8L908.1 646L907 637.9L916.7 627.7Z" fill="#504d46"/>
<path d="M920.2 616.6A8.2 6 -43.6 0 1 927.5 621.2A8.2 6 -43.6 0 1 920.2 630.2A8.2 6 -43.6 0 1 912.9 625.6A8.2 6 -43.6 0 1 920.2 616.6Z" fill="url(#k2h)" stroke="#111" stroke-width="1.2"/><g clip-path="url(#L-domeclip)"><path d="M727.2 676.7A87.2 51.7 -174 0 1 698.2 746A87.2 51.7 -174 0 1 578.8 720.6A87.2 51.7 -174 0 1 607.8 651.2A87.2 51.7 -174 0 1 727.2 676.7Z" fill="#46443e"/><path d="M751 669.5A115.2 68.4 -174 0 1 712.7 761.2A115.2 68.4 -174 0 1 555 727.6A115.2 68.4 -174 0 1 593.3 635.9A115.2 68.4 -174 0 1 751 669.5Z" fill="#47453e"/><path d="M768.4 664.3A135.6 80.5 -174 0 1 723.3 772.1A135.6 80.5 -174 0 1 537.6 732.6A135.6 80.5 -174 0 1 582.7 624.7A135.6 80.5 -174 0 1 768.4 664.3Z" fill="#47453f"/><path d="M782.5 659.9A152.2 90.3 -174 0 1 731.9 780.9A152.2 90.3 -174 0 1 523.5 736.5A152.2 90.3 -174 0 1 574.1 615.5A152.2 90.3 -174 0 1 782.5 659.9Z" fill="#484640"/><path d="M794.5 656.1A166.3 98.7 -174 0 1 739.2 788.4A166.3 98.7 -174 0 1 511.5 739.8A166.3 98.7 -174 0 1 566.8 607.5A166.3 98.7 -174 0 1 794.5 656.1Z" fill="#494741"/><path d="M805 652.6A178.7 106 -174 0 1 745.6 794.8A178.7 106 -174 0 1 501 742.6A178.7 106 -174 0 1 560.4 600.5A178.7 106 -174 0 1 805 652.6Z" fill="#4a4841"/><path d="M814.4 649.5A189.7 112.5 -174 0 1 751.3 800.4A189.7 112.5 -174 0 1 491.6 745A189.7 112.5 -174 0 1 554.7 594.1A189.7 112.5 -174 0 1 814.4 649.5Z" fill="#4b4942"/><path d="M822.8 646.5A199.6 118.4 -174 0 1 756.4 805.3A199.6 118.4 -174 0 1 483.2 747A199.6 118.4 -174 0 1 549.6 588.3A199.6 118.4 -174 0 1 822.8 646.5Z" fill="#4b4943"/><path d="M830.4 643.7A208.5 123.7 -174 0 1 761.1 809.5A208.5 123.7 -174 0 1 475.6 748.7A208.5 123.7 -174 0 1 544.9 582.9A208.5 123.7 -174 0 1 830.4 643.7Z" fill="#4c4a44"/><path d="M837.2 641A216.5 128.4 -174 0 1 765.2 813.3A216.5 128.4 -174 0 1 468.8 750.1A216.5 128.4 -174 0 1 540.8 577.8A216.5 128.4 -174 0 1 837.2 641Z" fill="#4d4b45"/><path d="M843.4 638.4A223.8 132.7 -174 0 1 769 816.4A223.8 132.7 -174 0 1 462.6 751.1A223.8 132.7 -174 0 1 537 573.1A223.8 132.7 -174 0 1 843.4 638.4Z" fill="#4e4c46"/><path d="M848.9 635.9A230.2 136.6 -174 0 1 772.4 819A230.2 136.6 -174 0 1 457.1 751.8A230.2 136.6 -174 0 1 533.6 568.7A230.2 136.6 -174 0 1 848.9 635.9Z" fill="#4f4d47"/><path d="M853.8 633.3A236 140 -174 0 1 775.3 821.1A236 140 -174 0 1 452.2 752.2A236 140 -174 0 1 530.7 564.5A236 140 -174 0 1 853.8 633.3Z" fill="#504e48"/><path d="M858.1 630.8A241 143 -174 0 1 777.9 822.5A241 143 -174 0 1 447.9 752.2A241 143 -174 0 1 528.1 560.4A241 143 -174 0 1 858.1 630.8Z" fill="#514f49"/><path d="M861.7 628.1A245.3 145.5 -174 0 1 780.1 823.2A245.3 145.5 -174 0 1 444.3 751.7A245.3 145.5 -174 0 1 525.9 556.5A245.3 145.5 -174 0 1 861.7 628.1Z" fill="#53514a"/><path d="M864.6 625.1A248.7 147.5 -174 0 1 781.9 823A248.7 147.5 -174 0 1 441.4 750.4A248.7 147.5 -174 0 1 524.1 552.6A248.7 147.5 -174 0 1 864.6 625.1Z" fill="#54524b"/><path d="M866.8 621.5A251.2 149 -174 0 1 783.2 821.3A251.2 149 -174 0 1 439.2 748A251.2 149 -174 0 1 522.8 548.1A251.2 149 -174 0 1 866.8 621.5Z" fill="#55534d"/><path d="M867.8 608.6A252.4 149.7 -174 0 1 783.8 809.4A252.4 149.7 -174 0 1 438.2 735.7A252.4 149.7 -174 0 1 522.2 534.9A252.4 149.7 -174 0 1 867.8 608.6Z" fill="#58564f"/><path d="M867.8 608.6A252.4 149.7 -174 0 1 783.8 809.4A252.4 149.7 -174 0 1 438.2 735.7A252.4 149.7 -174 0 1 522.2 534.9A252.4 149.7 -174 0 1 867.8 608.6ZM866.8 621.5A251.2 149 -174 0 1 783.2 821.3A251.2 149 -174 0 1 439.2 748A251.2 149 -174 0 1 522.8 548.1A251.2 149 -174 0 1 866.8 621.5ZM864.6 625.1A248.7 147.5 -174 0 1 781.9 823A248.7 147.5 -174 0 1 441.4 750.4A248.7 147.5 -174 0 1 524.1 552.6A248.7 147.5 -174 0 1 864.6 625.1ZM861.7 628.1A245.3 145.5 -174 0 1 780.1 823.2A245.3 145.5 -174 0 1 444.3 751.7A245.3 145.5 -174 0 1 525.9 556.5A245.3 145.5 -174 0 1 861.7 628.1ZM858.1 630.8A241 143 -174 0 1 777.9 822.5A241 143 -174 0 1 447.9 752.2A241 143 -174 0 1 528.1 560.4A241 143 -174 0 1 858.1 630.8ZM853.8 633.3A236 140 -174 0 1 775.3 821.1A236 140 -174 0 1 452.2 752.2A236 140 -174 0 1 530.7 564.5A236 140 -174 0 1 853.8 633.3ZM848.9 635.9A230.2 136.6 -174 0 1 772.4 819A230.2 136.6 -174 0 1 457.1 751.8A230.2 136.6 -174 0 1 533.6 568.7A230.2 136.6 -174 0 1 848.9 635.9ZM843.4 638.4A223.8 132.7 -174 0 1 769 816.4A223.8 132.7 -174 0 1 462.6 751.1A223.8 132.7 -174 0 1 537 573.1A223.8 132.7 -174 0 1 843.4 638.4ZM837.2 641A216.5 128.4 -174 0 1 765.2 813.3A216.5 128.4 -174 0 1 468.8 750.1A216.5 128.4 -174 0 1 540.8 577.8A216.5 128.4 -174 0 1 837.2 641ZM830.4 643.7A208.5 123.7 -174 0 1 761.1 809.5A208.5 123.7 -174 0 1 475.6 748.7A208.5 123.7 -174 0 1 544.9 582.9A208.5 123.7 -174 0 1 830.4 643.7ZM822.8 646.5A199.6 118.4 -174 0 1 756.4 805.3A199.6 118.4 -174 0 1 483.2 747A199.6 118.4 -174 0 1 549.6 588.3A199.6 118.4 -174 0 1 822.8 646.5ZM814.4 649.5A189.7 112.5 -174 0 1 751.3 800.4A189.7 112.5 -174 0 1 491.6 745A189.7 112.5 -174 0 1 554.7 594.1A189.7 112.5 -174 0 1 814.4 649.5ZM805 652.6A178.7 106 -174 0 1 745.6 794.8A178.7 106 -174 0 1 501 742.6A178.7 106 -174 0 1 560.4 600.5A178.7 106 -174 0 1 805 652.6ZM794.5 656.1A166.3 98.7 -174 0 1 739.2 788.4A166.3 98.7 -174 0 1 511.5 739.8A166.3 98.7 -174 0 1 566.8 607.5A166.3 98.7 -174 0 1 794.5 656.1ZM782.5 659.9A152.2 90.3 -174 0 1 731.9 780.9A152.2 90.3 -174 0 1 523.5 736.5A152.2 90.3 -174 0 1 574.1 615.5A152.2 90.3 -174 0 1 782.5 659.9ZM768.4 664.3A135.6 80.5 -174 0 1 723.3 772.1A135.6 80.5 -174 0 1 537.6 732.6A135.6 80.5 -174 0 1 582.7 624.7A135.6 80.5 -174 0 1 768.4 664.3ZM751 669.5A115.2 68.4 -174 0 1 712.7 761.2A115.2 68.4 -174 0 1 555 727.6A115.2 68.4 -174 0 1 593.3 635.9A115.2 68.4 -174 0 1 751 669.5ZM727.2 676.7A87.2 51.7 -174 0 1 698.2 746A87.2 51.7 -174 0 1 578.8 720.6A87.2 51.7 -174 0 1 607.8 651.2A87.2 51.7 -174 0 1 727.2 676.7Z" fill="url(#L-domeov)"/></g>
<path d="M401.5 643.6L401.5 655.1A252.4 149.7 -174 0 0 653 822.4A252.4 149.7 -174 0 0 904.5 689.2L904.5 677.7Z" fill="url(#L-band)" stroke="#111" stroke-width="1.2" stroke-linejoin="round"/>

<path d="M867.8 597.1A252.4 149.7 -174 0 1 783.8 797.9A252.4 149.7 -174 0 1 438.2 724.2A252.4 149.7 -174 0 1 522.2 523.4A252.4 149.7 -174 0 1 867.8 597.1Z" fill="url(#L-rim)" stroke="#111" stroke-width="1.2"/>
<path d="M853.2 601.4A236 140.5 -173.5 0 1 776.1 789.8A236 140.5 -173.5 0 1 452.8 719.9A236 140.5 -173.5 0 1 529.9 531.5A236 140.5 -173.5 0 1 853.2 601.4Z" fill="url(#L-wall)" stroke="#111" stroke-width="1.1"/>
<g clip-path="url(#L-in)">
<path d="M853.2 606.9A236 140.5 -173.5 0 1 776.1 795.3A236 140.5 -173.5 0 1 452.8 725.4A236 140.5 -173.5 0 1 529.9 537A236 140.5 -173.5 0 1 853.2 606.9Z" fill="url(#L-f0)" stroke="#111" stroke-width="1.1"/>
<path d="M853.2 608.4A235.9 140.4 -173.5 0 1 776.1 796.7A235.9 140.4 -173.5 0 1 452.8 726.9A235.9 140.4 -173.5 0 1 529.9 538.6A235.9 140.4 -173.5 0 1 853.2 608.4Z" fill="url(#L-f1)"/>
<path d="M852.9 610A235.7 140.3 -173.5 0 1 775.9 798.1A235.7 140.3 -173.5 0 1 453.1 728.3A235.7 140.3 -173.5 0 1 530.1 540.2A235.7 140.3 -173.5 0 1 852.9 610Z" fill="url(#L-f2)"/>
<path d="M852.5 611.5A235.2 140 -173.5 0 1 775.7 799.3A235.2 140 -173.5 0 1 453.5 729.6A235.2 140 -173.5 0 1 530.3 541.9A235.2 140 -173.5 0 1 852.5 611.5Z" fill="url(#L-f3)"/>
<path d="M851.9 613.1A234.6 139.6 -173.5 0 1 775.4 800.4A234.6 139.6 -173.5 0 1 454.1 730.8A234.6 139.6 -173.5 0 1 530.6 543.6A234.6 139.6 -173.5 0 1 851.9 613.1Z" fill="url(#L-f4)"/>
<path d="M851.2 614.6A233.8 139.2 -173.5 0 1 775 801.3A233.8 139.2 -173.5 0 1 454.8 732A233.8 139.2 -173.5 0 1 531 545.3A233.8 139.2 -173.5 0 1 851.2 614.6Z" fill="url(#L-f5)"/>
<path d="M850.4 616.1A232.8 138.6 -173.4 0 1 774.6 802A232.8 138.6 -173.4 0 1 455.6 732.9A232.8 138.6 -173.4 0 1 531.4 547A232.8 138.6 -173.4 0 1 850.4 616.1Z" fill="url(#L-f6)"/>
<path d="M849.4 617.5A231.7 138 -173.4 0 1 774.1 802.6A231.7 138 -173.4 0 1 456.6 733.8A231.7 138 -173.4 0 1 531.9 548.6A231.7 138 -173.4 0 1 849.4 617.5Z" fill="url(#L-f7)"/>
<path d="M848.3 618.8A230.5 137.3 -173.4 0 1 773.5 803A230.5 137.3 -173.4 0 1 457.7 734.4A230.5 137.3 -173.4 0 1 532.5 550.3A230.5 137.3 -173.4 0 1 848.3 618.8Z" fill="url(#L-f8)"/>
<path d="M847.1 620.1A229.1 136.5 -173.3 0 1 772.8 803.2A229.1 136.5 -173.3 0 1 458.9 734.9A229.1 136.5 -173.3 0 1 533.2 551.8A229.1 136.5 -173.3 0 1 847.1 620.1Z" fill="url(#L-f9)"/>
<path d="M845.8 621.2A227.6 135.7 -173.3 0 1 772.1 803.2A227.6 135.7 -173.3 0 1 460.2 735.3A227.6 135.7 -173.3 0 1 533.9 553.3A227.6 135.7 -173.3 0 1 845.8 621.2Z" fill="url(#L-f10)"/>
<path d="M844.4 622.1A226.1 134.8 -173.2 0 1 771.4 803A226.1 134.8 -173.2 0 1 461.6 735.5A226.1 134.8 -173.2 0 1 534.6 554.6A226.1 134.8 -173.2 0 1 844.4 622.1Z" fill="url(#L-f11)"/>
<path d="M843 623A224.5 133.9 -173.2 0 1 770.7 802.6A224.5 133.9 -173.2 0 1 463 735.5A224.5 133.9 -173.2 0 1 535.3 555.8A224.5 133.9 -173.2 0 1 843 623Z" fill="url(#L-f12)"/>
<path d="M841.5 623.7A222.9 133 -173.1 0 1 769.9 802.1A222.9 133 -173.1 0 1 464.5 735.3A222.9 133 -173.1 0 1 536.1 556.9A222.9 133 -173.1 0 1 841.5 623.7Z" fill="url(#L-f13)"/>
<path d="M840.1 624.2A221.2 132.1 -173.1 0 1 769.1 801.3A221.2 132.1 -173.1 0 1 465.9 734.9A221.2 132.1 -173.1 0 1 536.9 557.8A221.2 132.1 -173.1 0 1 840.1 624.2Z" fill="url(#L-f14)"/>
<g clip-path="url(#L-lf)">
<path d="M853.2 606.9A236 140.5 -173.5 0 1 776.1 795.3A236 140.5 -173.5 0 1 452.8 725.4A236 140.5 -173.5 0 1 529.9 537A236 140.5 -173.5 0 1 853.2 606.9Z" fill="#5b5b56" stroke="#111" stroke-width="1.1"/>
<path d="M853.2 608.4A235.9 140.4 -173.5 0 1 776.1 796.7A235.9 140.4 -173.5 0 1 452.8 726.9A235.9 140.4 -173.5 0 1 529.9 538.6A235.9 140.4 -173.5 0 1 853.2 608.4Z" fill="#646460"/>
<path d="M852.9 610A235.7 140.3 -173.5 0 1 775.9 798.1A235.7 140.3 -173.5 0 1 453.1 728.3A235.7 140.3 -173.5 0 1 530.1 540.2A235.7 140.3 -173.5 0 1 852.9 610Z" fill="#6c6d69"/>
<path d="M852.5 611.5A235.2 140 -173.5 0 1 775.7 799.3A235.2 140 -173.5 0 1 453.5 729.6A235.2 140 -173.5 0 1 530.3 541.9A235.2 140 -173.5 0 1 852.5 611.5Z" fill="#7f817d"/>
<path d="M851.9 613.1A234.6 139.6 -173.5 0 1 775.4 800.4A234.6 139.6 -173.5 0 1 454.1 730.8A234.6 139.6 -173.5 0 1 530.6 543.6A234.6 139.6 -173.5 0 1 851.9 613.1Z" fill="#868984"/>
<path d="M851.2 614.6A233.8 139.2 -173.5 0 1 775 801.3A233.8 139.2 -173.5 0 1 454.8 732A233.8 139.2 -173.5 0 1 531 545.3A233.8 139.2 -173.5 0 1 851.2 614.6Z" fill="#898b87"/>
<path d="M850.4 616.1A232.8 138.6 -173.4 0 1 774.6 802A232.8 138.6 -173.4 0 1 455.6 732.9A232.8 138.6 -173.4 0 1 531.4 547A232.8 138.6 -173.4 0 1 850.4 616.1Z" fill="#8b8d89"/>
<path d="M849.4 617.5A231.7 138 -173.4 0 1 774.1 802.6A231.7 138 -173.4 0 1 456.6 733.8A231.7 138 -173.4 0 1 531.9 548.6A231.7 138 -173.4 0 1 849.4 617.5Z" fill="#8b8e89"/>
<path d="M848.3 618.8A230.5 137.3 -173.4 0 1 773.5 803A230.5 137.3 -173.4 0 1 457.7 734.4A230.5 137.3 -173.4 0 1 532.5 550.3A230.5 137.3 -173.4 0 1 848.3 618.8Z" fill="#898b86"/>
<path d="M847.1 620.1A229.1 136.5 -173.3 0 1 772.8 803.2A229.1 136.5 -173.3 0 1 458.9 734.9A229.1 136.5 -173.3 0 1 533.2 551.8A229.1 136.5 -173.3 0 1 847.1 620.1Z" fill="#878883"/>
<path d="M845.8 621.2A227.6 135.7 -173.3 0 1 772.1 803.2A227.6 135.7 -173.3 0 1 460.2 735.3A227.6 135.7 -173.3 0 1 533.9 553.3A227.6 135.7 -173.3 0 1 845.8 621.2Z" fill="#82837d"/>
<path d="M844.4 622.1A226.1 134.8 -173.2 0 1 771.4 803A226.1 134.8 -173.2 0 1 461.6 735.5A226.1 134.8 -173.2 0 1 534.6 554.6A226.1 134.8 -173.2 0 1 844.4 622.1Z" fill="#797973"/>
<path d="M843 623A224.5 133.9 -173.2 0 1 770.7 802.6A224.5 133.9 -173.2 0 1 463 735.5A224.5 133.9 -173.2 0 1 535.3 555.8A224.5 133.9 -173.2 0 1 843 623Z" fill="#717069"/>
<path d="M841.5 623.7A222.9 133 -173.1 0 1 769.9 802.1A222.9 133 -173.1 0 1 464.5 735.3A222.9 133 -173.1 0 1 536.1 556.9A222.9 133 -173.1 0 1 841.5 623.7Z" fill="#696861"/>
<path d="M840.1 624.2A221.2 132.1 -173.1 0 1 769.1 801.3A221.2 132.1 -173.1 0 1 465.9 734.9A221.2 132.1 -173.1 0 1 536.9 557.8A221.2 132.1 -173.1 0 1 840.1 624.2Z" fill="#63615a"/>
</g>
<path d="M840.1 624.2A221.2 132.1 -173.1 0 1 769.1 801.3A221.2 132.1 -173.1 0 1 465.9 734.9A221.2 132.1 -173.1 0 1 536.9 557.8A221.2 132.1 -173.1 0 1 840.1 624.2Z" fill="url(#L-floor)" stroke="#111" stroke-width="1.1"/>
<path d="M530.5 531.3L530.5 536.8L530.5 538.4L530.7 540L530.9 541.7L531.2 543.4L531.6 545.1L532 546.8L532.5 548.5L533.1 550.1L533.8 551.6L534.4 553.1L535.2 554.4L535.9 555.6L536.7 556.7L537.5 557.6" fill="none" stroke="#111" stroke-width="1.1"/>
<ellipse cx="668" cy="534.5" rx="40" ry="2.2" transform="rotate(2 668 534.5)" fill="#fff" opacity="0.45" filter="url(#blur2)"/>
</g>
<path d="M853.2 601.4A236 140.5 -173.5 0 1 776.1 789.8A236 140.5 -173.5 0 1 452.8 719.9A236 140.5 -173.5 0 1 529.9 531.5A236 140.5 -173.5 0 1 853.2 601.4Z" fill="none" stroke="#111" stroke-width="1.1"/></g>
<g id="viewcube"><ellipse cx="1868" cy="236" rx="30" ry="9" fill="#000" opacity="0.16" filter="url(#blur4)"/>
<path d="M1866.28 168.99L1866.28 158.04" fill="none" stroke="#22dd22" stroke-width="2.2"/>
<path d="M1824.41 178.0L1866.28 168.99L1891.4 189.6L1845.67 198.62Z" fill="url(#vc-top)"/>
<path d="M1824.41 178.0L1845.67 198.62L1845.67 241.77L1827.63 217.94Z" fill="url(#vc-left)"/>
<path d="M1845.67 198.62L1891.4 189.6L1887.54 227.6L1845.67 241.77Z" fill="url(#vc-right)"/>
<path d="M1840.9 196.68L1848.89 195.14L1853.78 199.52L1853.4 206.99L1845.67 208.92L1841.42 204.41Z" fill="#b4becf"/>
<path d="M1840.9 196.68L1845.67 200.81L1853.78 199.52" fill="none" stroke="#c6cedc" stroke-width="0.8"/>
<path d="M1845.67 200.81L1845.67 208.92" fill="none" stroke="#c6cedc" stroke-width="0.8"/>
<path d="M1824.41 178.0L1866.28 168.99L1891.4 189.6L1887.54 227.6L1845.67 241.77L1827.63 217.94L1824.41 178.0" fill="none" stroke="#6a6a6a" stroke-width="0.9" stroke-dasharray="6.5 3"/>
<path d="M1824.41 178.0L1845.67 198.62L1891.4 189.6" fill="none" stroke="#6a6a6a" stroke-width="0.9" stroke-dasharray="6.5 3"/>
<path d="M1845.67 198.62L1845.67 241.77" fill="none" stroke="#6a6a6a" stroke-width="0.9" stroke-dasharray="6.5 3"/>
<text transform="matrix(0.95 -0.27 -0.05 1 1868.21 218.96)" font-size="11.5" font-weight="bold" fill="#364050" text-anchor="middle" textLength="29" lengthAdjust="spacingAndGlyphs">RIGHT</text>
<text transform="matrix(0.62 0.5 -0.75 0.17 1855.38 185.16)" font-size="10" font-weight="bold" fill="#3b4453" text-anchor="middle">TOP</text>
<text transform="matrix(0.4 0.5 0 1 1835.36 213.21)" font-size="10" font-weight="bold" fill="#3b4453" text-anchor="middle" textLength="30" lengthAdjust="spacingAndGlyphs">FRONT</text>
<text x="1862.6" y="158.6" font-size="13" font-weight="bold" fill="#22dd22" textLength="7.4" lengthAdjust="spacingAndGlyphs">Y</text>
<path d="M1821.19 218.84L1828.92 216.52" fill="none" stroke="#1a1aff" stroke-width="2.4"/>
<text x="1810.8" y="225.8" font-size="14" font-weight="bold" fill="#1a1aff" textLength="8" lengthAdjust="spacingAndGlyphs">Z</text>
<path d="M1887.54 227.6L1893.98 233.01" fill="none" stroke="#ff2020" stroke-width="2.4"/>
<text x="1893" y="242" font-size="14" font-weight="bold" fill="#ff2a2a" textLength="7.6" lengthAdjust="spacingAndGlyphs">X</text>
<path d="M1803.4 157.4L1811.8 148.6L1820.2 157.4H1818.4V164.8H1805.2V157.4Z" fill="#fff" stroke="#8a8a8a" stroke-width="1"/><rect x="1810.4" y="158.4" width="2.6" height="6.2" fill="#8a8a8a"/>
<path d="M1897.4 243.6H1908.8V246.6L1903.1 254.2L1897.4 246.6Z" fill="#fff" stroke="#8a8a8a" stroke-width="0.9"/><path d="M1897.4 246.4H1908.8" stroke="#8a8a8a" stroke-width="0.9"/></g>
<g id="navbar"><rect x="842.4" y="952.4" width="236.4" height="23.1" fill="#f2f2f2"/>
<path d="M860.04 963.27Q859.36 961.91 853.47 962.05Q845.48 962.59 845.48 964.62Q846.16 967.33 853.47 967.19Q860.38 966.65 860.04 963.74" fill="none" stroke="#222" stroke-width="1.3" stroke-linejoin="round" stroke-linecap="round"/>
<path d="M846.83 967.8L849.88 965.3L849.88 970.04Z" fill="#222"/>
<path d="M852.25 971.39L852.25 959.2L850.56 959.2L853.47 956.16L856.31 959.2L854.69 959.2L854.69 971.39Z" fill="#fff" stroke="#222" stroke-width="1.0" stroke-linejoin="round"/>
<path d="M866.13 962.25L871.89 962.25L868.97 965.64Z" fill="#333"/>
<path d="M879.33 961.91L883.4 956.7L886.44 958.73L890.17 956.83L890.98 961.91Z" fill="#9aa0aa" stroke="#333a4a" stroke-width="1.0" stroke-linejoin="round"/>
<rect x="878.11" y="961.91" width="15.58" height="9.68" rx="0" fill="#f8f8f8" stroke="#333a4a" stroke-width="1.5"/>
<rect x="881.23" y="964.82" width="9.48" height="3.86" rx="0" fill="#aab4cc" stroke="#333a4a" stroke-width="1.3"/>
<path d="M910.14 971.39Q907.09 967.67 904.39 964.62Q905.74 962.93 908.79 965.64L907.77 958.86Q909.12 957.51 910.14 958.86L911.02 962.93L911.29 957.17Q912.85 955.82 914.0 957.17L914.0 962.59L915.22 958.19Q916.91 957.51 917.25 959.2L916.71 963.94L918.27 960.56Q919.96 960.56 919.62 962.25Q918.27 968.34 915.9 971.39Z" fill="#fcfcfc" stroke="#2e3a4a" stroke-width="1.1" stroke-linejoin="round" stroke-linecap="round"/>
<path d="M938.24 966.31L941.96 969.83" fill="none" stroke="#2e3a4a" stroke-width="2.6"/>
<circle cx="934.85" cy="962.59" r="4.6" fill="#dcecf0" stroke="#2e3a4a" stroke-width="1.4"/>
<path d="M941.29 958.53L945.35 958.53" fill="none" stroke="#222" stroke-width="1.0"/>
<path d="M943.32 956.49L943.32 960.56" fill="none" stroke="#222" stroke-width="1.0"/>
<path d="M941.29 962.25L945.35 962.25" fill="none" stroke="#222" stroke-width="1.0"/>
<rect x="954.51" y="956.16" width="17.27" height="15.57" fill="none" stroke="#222" stroke-width="1" stroke-dasharray="2.2 1.6"/>
<path d="M966.83 966.65L971.03 970.71" fill="none" stroke="#222" stroke-width="2.8"/>
<circle cx="962.43" cy="962.59" r="5.96" fill="#d5e6ea" stroke="#222" stroke-width="1.5"/>
<path d="M977.12 962.25L982.88 962.25L980.04 965.64Z" fill="#333"/>
<rect x="989.31" y="956.29" width="15.3" height="12.26" rx="1.5" fill="#f0f0f0" stroke="#333" stroke-width="1.4"/>
<rect x="991.61" y="958.46" width="11.11" height="7.72" rx="1" fill="#9db8e0" stroke="#1e3a78" stroke-width="1.4"/>
<rect x="993.92" y="969.36" width="6.43" height="2.03" rx="1" fill="#fff" stroke="#333" stroke-width="0.9"/>
<path d="M1007.26 962.25L1013.01 962.25L1010.17 965.64Z" fill="#333"/>
<rect x="1020.26" y="956.43" width="15.36" height="15.16" rx="1.5" fill="url(#navgrid)" stroke="#333" stroke-width="1.2"/>
<rect x="1021.34" y="957.51" width="1.69" height="1.69" rx="0" fill="#fff" opacity="1.0"/>
<rect x="1024.32" y="957.51" width="1.69" height="1.69" rx="0" fill="#fff" opacity="1.0"/>
<rect x="1027.3" y="957.51" width="1.69" height="1.69" rx="0" fill="#fff" opacity="1.0"/>
<rect x="1030.28" y="957.51" width="1.69" height="1.69" rx="0" fill="#fff" opacity="1.0"/>
<rect x="1033.26" y="957.51" width="1.69" height="1.69" rx="0" fill="#fff" opacity="1.0"/>
<rect x="1021.34" y="960.42" width="1.69" height="1.69" rx="0" fill="#fff" opacity="0.92"/>
<rect x="1024.32" y="960.42" width="1.69" height="1.69" rx="0" fill="#fff" opacity="0.92"/>
<rect x="1027.3" y="960.42" width="1.69" height="1.69" rx="0" fill="#fff" opacity="0.92"/>
<rect x="1030.28" y="960.42" width="1.69" height="1.69" rx="0" fill="#fff" opacity="0.92"/>
<rect x="1033.26" y="960.42" width="1.69" height="1.69" rx="0" fill="#fff" opacity="0.92"/>
<rect x="1021.34" y="963.33" width="1.69" height="1.7" rx="0" fill="#fff" opacity="0.84"/>
<rect x="1024.32" y="963.33" width="1.69" height="1.7" rx="0" fill="#fff" opacity="0.84"/>
<rect x="1027.3" y="963.33" width="1.69" height="1.7" rx="0" fill="#fff" opacity="0.84"/>
<rect x="1030.28" y="963.33" width="1.69" height="1.7" rx="0" fill="#fff" opacity="0.84"/>
<rect x="1033.26" y="963.33" width="1.69" height="1.7" rx="0" fill="#fff" opacity="0.84"/>
<rect x="1021.34" y="966.24" width="1.69" height="1.7" rx="0" fill="#fff" opacity="0.76"/>
<rect x="1024.32" y="966.24" width="1.69" height="1.7" rx="0" fill="#fff" opacity="0.76"/>
<rect x="1027.3" y="966.24" width="1.69" height="1.7" rx="0" fill="#fff" opacity="0.76"/>
<rect x="1030.28" y="966.24" width="1.69" height="1.7" rx="0" fill="#fff" opacity="0.76"/>
<rect x="1033.26" y="966.24" width="1.69" height="1.7" rx="0" fill="#fff" opacity="0.76"/>
<rect x="1021.34" y="969.16" width="1.69" height="1.69" rx="0" fill="#fff" opacity="0.6799999999999999"/>
<rect x="1024.32" y="969.16" width="1.69" height="1.69" rx="0" fill="#fff" opacity="0.6799999999999999"/>
<rect x="1027.3" y="969.16" width="1.69" height="1.69" rx="0" fill="#fff" opacity="0.6799999999999999"/>
<rect x="1030.28" y="969.16" width="1.69" height="1.69" rx="0" fill="#fff" opacity="0.6799999999999999"/>
<rect x="1033.26" y="969.16" width="1.69" height="1.69" rx="0" fill="#fff" opacity="0.6799999999999999"/>
<path d="M1038.06 962.25L1043.82 962.25L1040.97 965.64Z" fill="#333"/>
<rect x="1051.33" y="957.38" width="6.77" height="5.75" rx="1.5" fill="#b3c8e6" stroke="#1e3a78" stroke-width="1.5"/>
<rect x="1053.23" y="959.27" width="2.98" height="2.03" rx="0" fill="#8fabd6"/>
<rect x="1058.78" y="957.38" width="6.77" height="5.75" rx="1.5" fill="#b3c8e6" stroke="#1e3a78" stroke-width="1.5"/>
<rect x="1060.68" y="959.27" width="2.98" height="2.03" rx="0" fill="#8fabd6"/>
<rect x="1051.33" y="963.74" width="6.77" height="5.75" rx="1.5" fill="#b3c8e6" stroke="#1e3a78" stroke-width="1.5"/>
<rect x="1053.23" y="965.64" width="2.98" height="2.03" rx="0" fill="#8fabd6"/>
<rect x="1058.78" y="963.74" width="6.77" height="5.75" rx="1.5" fill="#b3c8e6" stroke="#1e3a78" stroke-width="1.5"/>
<rect x="1060.68" y="965.64" width="2.98" height="2.03" rx="0" fill="#8fabd6"/>
<path d="M1069.07 962.25L1074.83 962.25L1071.92 965.64Z" fill="#333"/></g>
<g id="chrome"><rect x="0" y="0" width="1920" height="23" fill="url(#titlegrad)"/>
<g><path d="M3.6 5.2 L5.8 3.2 H15 Q16 3.2 16 4.2 V15 L17 16 V18.8 H5.2 Q4.2 18.8 4.2 17.8 V16.5 L3 15.5 V6 Z" fill="#e85d04"/><path d="M4.4 3 H15.2 Q16.2 3 16.2 4 V15 H4.4 Z" fill="#ff6b00"/><path d="M3 5.5 L4.4 4 V15 L3 15.6Z" fill="#ff8a3a"/><path d="M4.4 15 H16.2 L17 15.8 V17.8 Q17 18.8 16 18.8 H5.4 Q4.4 18.8 4.4 17.8Z" fill="#b8480c"/><text x="7.6" y="17.8" font-size="3.2" fill="#f6c9a8" font-weight="bold">FUS</text><text x="8.2" y="12.2" font-size="10" fill="#fff" font-weight="bold">F</text></g>
<text x="24.4" y="15.9" font-size="12" fill="#111" font-weight="normal" textLength="298.6" lengthAdjust="spacingAndGlyphs">locket v9 (Team 1) - Autodesk Fusion (Education License)</text>
<path d="M1799 10.5H1809.2" stroke="#111" stroke-width="1.1"/>
<rect x="1844.3" y="7.2" width="7.6" height="7.4" rx="1.6" fill="none" stroke="#111" stroke-width="1.1"/><path d="M1846.5 5.6H1851.4Q1853.6 5.6 1853.6 7.8V12.6" fill="none" stroke="#111" stroke-width="1.1"/>
<path d="M1890.2 5.2L1900 15M1900 5.2L1890.2 15" stroke="#111" stroke-width="1.1"/>
<rect x="0" y="23" width="1920" height="32" fill="#cdcdcd"/>
<rect x="9.1" y="32.2" width="3.6" height="3.6" rx="0.6" fill="#6a6a6a"/>
<rect x="14.1" y="32.2" width="3.6" height="3.6" rx="0.6" fill="#6a6a6a"/>
<rect x="19.1" y="32.2" width="3.6" height="3.6" rx="0.6" fill="#6a6a6a"/>
<rect x="9.1" y="37.2" width="3.6" height="3.6" rx="0.6" fill="#6a6a6a"/>
<rect x="14.1" y="37.2" width="3.6" height="3.6" rx="0.6" fill="#6a6a6a"/>
<rect x="19.1" y="37.2" width="3.6" height="3.6" rx="0.6" fill="#6a6a6a"/>
<rect x="9.1" y="42.2" width="3.6" height="3.6" rx="0.6" fill="#6a6a6a"/>
<rect x="14.1" y="42.2" width="3.6" height="3.6" rx="0.6" fill="#6a6a6a"/>
<rect x="19.1" y="42.2" width="3.6" height="3.6" rx="0.6" fill="#6a6a6a"/>
<path d="M43 31H50.5L55 35.5V45.9Q55 46.9 54 46.9H43Q42 46.9 42 45.9V32Q42 31 43 31Z" fill="#666"/><path d="M50.9 31.2V35.2H54.9Z" fill="#cdcdcd"/><path d="M51.6 32.2L53.9 34.5H51.6Z" fill="#666"/>
<path d="M61 36H68L64.5 41Z" fill="#666"/>
<path d="M88.2 32.2H100Q101 32.2 101 33.2V45Q101 46 100 46H89.6L87.2 43.6V33.2Q87.2 32.2 88.2 32.2Z" fill="#8c8c8c"/><rect x="90.4" y="32.2" width="7.2" height="5" fill="#cdcdcd"/><rect x="91.6" y="33" width="4.6" height="3.4" fill="#8c8c8c" opacity="0"/><rect x="90.8" y="41.4" width="6.4" height="4.6" fill="#cdcdcd"/><rect x="92.2" y="42.6" width="3.6" height="3.4" fill="#8c8c8c"/>
<path d="M125.6 34L121.2 38.4L125.6 42.8M121.6 38.4H127Q132.2 38.4 132.2 44.4" fill="none" stroke="#8f8f8f" stroke-width="1.7"/>
<path d="M139.9 36H147.2L143.55 41Z" fill="#8f8f8f"/>
<path d="M167.4 34L171.8 38.4L167.4 42.8M171.4 38.4H166Q160.8 38.4 160.8 44.4" fill="none" stroke="#8f8f8f" stroke-width="1.7"/>
<path d="M179.1 36H186.2L182.64999999999998 41Z" fill="#8f8f8f"/>
<path d="M193 55V30Q193 27 196 27H229Q232 27 232 30V55Z" fill="#bababa"/>
<path d="M207 42.6L214.1 35.6L216.6 38V36.4H218.6V40L221.2 42.6H219.6V48.8H215.4V44.6H212.8V48.8H208.6V42.6Z" fill="#8a8a8a"/>
<path d="M236 55V30Q236 27 239 27H1684Q1687 27 1687 30V55Z" fill="#f2f2f2"/>
<g><path d="M930.8 34.5L937.6 37.6V45L930.8 48.6L924 45V37.6Z" fill="#e2711d"/><path d="M930.8 34.5L937.6 37.6L930.8 41L924 37.6Z" fill="#f7a35c"/><path d="M930.8 41L937.6 37.6V45L930.8 48.6Z" fill="#c75a10"/><path d="M930.8 41L924 37.6V45L930.8 48.6Z" fill="#ee8130"/></g>
<text x="941.7" y="45.6" font-size="12" fill="#333" font-weight="normal" textLength="47.3" lengthAdjust="spacingAndGlyphs">locket v9</text>
<path d="M1672 37.3L1680.2 45M1680.2 37.3L1672 45" stroke="#555" stroke-width="1.2"/>
<path d="M1691 55V30Q1691 27 1694 27H1716Q1719 27 1719 30V55Z" fill="#bababa"/>
<path d="M1699 40.6H1712M1705.5 34.1V47.1" stroke="#6e6e6e" stroke-width="2.3"/>
<g transform="translate(1738.85 38.8)"><circle r="7.8" fill="#6a6a6a"/><g transform="rotate(-45)" fill="#cdcdcd"><rect x="-5" y="-3.6" width="6.3" height="7.2" rx="1.9"/><rect x="0.9" y="-2.3" width="3.2" height="1.1"/><rect x="0.9" y="1.2" width="3.2" height="1.1"/><rect x="-9" y="-0.9" width="5" height="1.8"/></g></g>
<g transform="translate(1771.9 38.8)"><circle r="7.5" fill="none" stroke="#6a6a6a" stroke-width="1.2"/><circle r="6" fill="#6a6a6a"/><path d="M-0.5 -3.7V0.7H3.8" fill="none" stroke="#dcdcdc" stroke-width="1.2"/></g>
<text x="1783.6" y="43.2" font-size="11.5" fill="#4a3a4a">1</text>
<path d="M1820.8 31.2Q1822 31.2 1822 32.4Q1825.8 33.6 1825.8 38V41.4L1827.6 43.6V44.4H1814V43.6L1815.8 41.4V38Q1815.8 33.6 1819.6 32.4Q1819.6 31.2 1820.8 31.2ZM1818.8 45.4H1822.8Q1822.4 47 1820.8 47Q1819.2 47 1818.8 45.4Z" fill="#6a6a6a"/>
<circle cx="1853.9" cy="39.1" r="8" fill="#6a6a6a"/><text x="1850.1" y="44" font-size="13.5" font-weight="bold" fill="#f2f2f2">?</text>
<circle cx="1894.9" cy="39.1" r="12.4" fill="#f1f1f1"/>
<text x="1885" y="43.4" font-size="11.5" fill="#4a4a66" font-weight="normal" textLength="15.4" lengthAdjust="spacingAndGlyphs">SM</text>
<rect x="0" y="55" width="1920" height="85" fill="#f2f2f2"/>
<rect x="0" y="136" width="1920" height="1" fill="#dedede"/>
<rect x="12.2" y="65.8" width="108.6" height="60.4" rx="4.5" fill="#f2f2f2" stroke="#dcdcdc" stroke-width="1"/>
<text x="43.3" y="99.7" font-size="11" fill="#2e2e2e" font-weight="bold" textLength="37.5" lengthAdjust="spacingAndGlyphs">DESIGN</text>
<path d="M87.2 94.1H93L90.1 98Z" fill="#2e2e2e"/>
<text x="151.2" y="70.2" font-size="11" fill="#0696d7" font-weight="normal" textLength="31.0" lengthAdjust="spacingAndGlyphs">SOLID</text>
<rect x="138.4" y="75.6" width="56.4" height="3" rx="1.5" fill="#0696d7"/>
<text x="228.3" y="70.1" font-size="11" fill="#3c3c3c" font-weight="normal" textLength="46.4" lengthAdjust="spacingAndGlyphs">SURFACE</text>
<text x="321.3" y="70.1" font-size="11" fill="#3c3c3c" font-weight="normal" textLength="27.0" lengthAdjust="spacingAndGlyphs">MESH</text>
<text x="394.2" y="70.1" font-size="11" fill="#3c3c3c" font-weight="normal" textLength="67.5" lengthAdjust="spacingAndGlyphs">SHEET METAL</text>
<text x="507.2" y="70.1" font-size="11" fill="#3c3c3c" font-weight="normal" textLength="41.5" lengthAdjust="spacingAndGlyphs">PLASTIC</text>
<text x="595.3" y="70.1" font-size="11" fill="#3c3c3c" font-weight="normal" textLength="43.4" lengthAdjust="spacingAndGlyphs">UTILITIES</text>
<text x="683.3" y="70.1" font-size="11" fill="#3c3c3c" font-weight="normal" textLength="44.5" lengthAdjust="spacingAndGlyphs">MANAGE</text>
<text x="234.2" y="130.8" font-size="10.6" fill="#3c3c3c" font-weight="normal" textLength="38.6" lengthAdjust="spacingAndGlyphs">CREATE</text>
<path d="M276.3 124.3H281.90000000000003L279.1 128.1Z" fill="#2e2e2e"/>
<text x="408.3" y="130.8" font-size="10.6" fill="#3c3c3c" font-weight="normal" textLength="55.4" lengthAdjust="spacingAndGlyphs">AUTOMATE</text>
<path d="M467.2 124.3H472.8L470.0 128.1Z" fill="#2e2e2e"/>
<text x="597.5" y="130.8" font-size="10.6" fill="#3c3c3c" font-weight="normal" textLength="37.5" lengthAdjust="spacingAndGlyphs">MODIFY</text>
<path d="M638.5 124.3H644.1L641.3 128.1Z" fill="#2e2e2e"/>
<text x="794.2" y="130.8" font-size="10.6" fill="#3c3c3c" font-weight="normal" textLength="54.1" lengthAdjust="spacingAndGlyphs">ASSEMBLE</text>
<path d="M851.8 124.3H857.4L854.5999999999999 128.1Z" fill="#2e2e2e"/>
<text x="911.3" y="130.8" font-size="10.6" fill="#3c3c3c" font-weight="normal" textLength="57.4" lengthAdjust="spacingAndGlyphs">CONFIGURE</text>
<path d="M972.2 124.3H977.8000000000001L975.0 128.1Z" fill="#2e2e2e"/>
<text x="1009.2" y="130.8" font-size="10.6" fill="#3c3c3c" font-weight="normal" textLength="61.6" lengthAdjust="spacingAndGlyphs">CONSTRUCT</text>
<path d="M1074.3 124.3H1079.8999999999999L1077.1 128.1Z" fill="#2e2e2e"/>
<text x="1108.3" y="130.8" font-size="10.6" fill="#3c3c3c" font-weight="normal" textLength="40.9" lengthAdjust="spacingAndGlyphs">INSPECT</text>
<path d="M1152.7 124.3H1158.3L1155.5 128.1Z" fill="#2e2e2e"/>
<text x="1220" y="130.8" font-size="10.6" fill="#3c3c3c" font-weight="normal" textLength="35" lengthAdjust="spacingAndGlyphs">INSERT</text>
<path d="M1258.5 124.3H1264.1L1261.3 128.1Z" fill="#2e2e2e"/>
<text x="1327.5" y="130.8" font-size="10.6" fill="#3c3c3c" font-weight="normal" textLength="37.2" lengthAdjust="spacingAndGlyphs">SELECT</text>
<path d="M1368.2 124.3H1373.8L1371.0 128.1Z" fill="#2e2e2e"/>
<rect x="393.5" y="81.7" width="1" height="50.6" fill="#d4d4d4"/>
<rect x="487.5" y="81.7" width="1" height="50.6" fill="#d4d4d4"/>
<rect x="756.2" y="81.7" width="1" height="50.6" fill="#d4d4d4"/>
<rect x="896.5" y="81.7" width="1" height="50.6" fill="#d4d4d4"/>
<rect x="994.2" y="81.7" width="1" height="50.6" fill="#d4d4d4"/>
<rect x="1093.3" y="81.7" width="1" height="50.6" fill="#d4d4d4"/>
<rect x="1172.5" y="81.7" width="1" height="50.6" fill="#d4d4d4"/>
<rect x="1312.5" y="81.7" width="1" height="50.6" fill="#d4d4d4"/></g>
<g id="toolbar-icons"><rect x="137.08" y="82.09" width="2.71" height="2.71" rx="0" fill="#444"/>
<rect x="164.3" y="82.09" width="2.71" height="2.71" rx="0" fill="#444"/>
<rect x="137.08" y="109.18" width="2.71" height="2.71" rx="0" fill="#444"/>
<path d="M141.14 83.45L162.81 83.45" fill="none" stroke="#444" stroke-width="1.1"/>
<path d="M138.43 86.16L138.43 107.82" fill="none" stroke="#444" stroke-width="1.1"/>
<path d="M165.65 86.16L165.65 99.7" fill="none" stroke="#444" stroke-width="1.1"/>
<path d="M141.14 110.53L155.02 110.53" fill="none" stroke="#444" stroke-width="1.1"/>
<rect x="144.12" y="89.27" width="2.57" height="2.57" rx="0" fill="#444"/>
<rect x="157.26" y="89.27" width="2.57" height="2.57" rx="0" fill="#444"/>
<rect x="144.12" y="102.27" width="2.57" height="2.57" rx="0" fill="#444"/>
<path d="M148.25 90.56L155.7 90.56" fill="none" stroke="#444" stroke-width="1.1"/>
<path d="M145.41 93.27L145.41 100.71" fill="none" stroke="#444" stroke-width="1.1"/>
<path d="M158.54 93.27Q157.73 101.73 148.25 103.56" fill="none" stroke="#444" stroke-width="1.1" stroke-linejoin="round" stroke-linecap="round"/>
<path d="M160.03 100.24L163.96 100.24L163.96 105.18L168.9 105.18L168.9 109.11L163.96 109.11L163.96 114.05L160.03 114.05L160.03 109.11L155.09 109.11L155.09 105.18L160.03 105.18Z" fill="#23b14d" stroke="#1c9a40" stroke-width="0.6" stroke-linejoin="round"/>
<g id="ic-ex">
<path d="M181.09 108.84L199.03 108.84L199.03 113.58L181.09 113.58Z" fill="#bdbdbd"/>
<path d="M199.03 108.84L204.99 103.08L204.99 107.82L199.03 113.58Z" fill="#a2a2a2"/>
<path d="M181.09 88.19L199.03 88.19L199.03 108.84L181.09 108.84Z" fill="#6ab0e6"/>
<path d="M181.09 88.19L187.18 82.09L204.99 82.09L199.03 88.19Z" fill="#8ecbf9"/>
<path d="M199.03 88.19L204.99 82.09L204.99 103.08L199.03 108.84Z" fill="#4a94cf"/>
<path d="M208.51 107.82L208.51 86.16" fill="none" stroke="#222" stroke-width="1.2"/>
<path d="M208.51 82.77L211.02 86.83L206.01 86.83Z" fill="#222"/>
</g>
<path d="M223.07 95.3Q238.98 82.09 254.55 94.96L248.8 100.71Q238.98 93.27 228.82 100.71Z" fill="#8ecbf9"/>
<path d="M228.82 100.71Q238.98 93.27 248.8 100.71L248.8 110.19Q238.98 103.08 228.82 110.87Z" fill="#6ab0e6"/>
<path d="M223.07 95.3L228.82 100.71L228.82 110.87L223.07 105.11Z" fill="#4a94cf"/>
<path d="M249.14 101.05L254.42 95.77L254.42 104.78L249.14 110.06Z" fill="#fafafa" stroke="#444" stroke-width="1.2" stroke-linejoin="round"/>
<path d="M252.52 89.54Q239.66 80.06 225.78 88.53" fill="none" stroke="#222" stroke-width="1.1" stroke-linejoin="round" stroke-linecap="round"/>
<path d="M223.41 89.88L226.45 85.48L228.48 89.54Z" fill="#222"/>
<g id="ic-ho">
<path d="M266.43 88.53L291.82 88.53L291.82 113.24L266.43 113.24Z" fill="#dcdcdc"/>
<path d="M266.43 88.53L272.53 82.43L297.58 82.43L291.82 88.53Z" fill="#f4f4f4"/>
<path d="M291.82 88.53L297.58 82.43L297.58 107.48L291.82 113.24Z" fill="#b8b8b8"/>
<path d="M266.43 88.53L272.53 82.43L297.58 82.43L297.58 107.48L291.82 113.24L266.43 113.24Z" fill="none" stroke="#555" stroke-width="1.3" stroke-linejoin="round"/>
<circle cx="279.5" cy="100.38" r="8.12" fill="#f2f2f2" stroke="#555" stroke-width="1.1"/>
<path d="M277.74 94.42Q278.62 102.07 286.07 101.39Q285.05 106.81 279.64 107.28Q272.86 106.81 273.0 100.38Q273.54 95.97 277.74 94.42Z" fill="#5aaae6"/>
</g>
<path d="M317.21 87.51L329.06 87.51" fill="none" stroke="#444" stroke-width="1.2"/>
<path d="M312.47 91.91L312.47 103.9" fill="none" stroke="#444" stroke-width="1.2"/>
<path d="M317.21 108.5L329.06 108.5" fill="none" stroke="#444" stroke-width="1.2"/>
<rect x="309.43" y="84.46" width="6.23" height="6.1" rx="0" fill="#fff" stroke="#444" stroke-width="1.2"/>
<rect x="330.08" y="84.12" width="6.77" height="6.78" rx="0" fill="#6ab0e6"/>
<rect x="309.09" y="105.11" width="6.77" height="6.78" rx="0" fill="#6ab0e6"/>
<rect x="330.08" y="105.11" width="6.77" height="6.78" rx="0" fill="#6ab0e6"/>
<path d="M360.21 84.12L369.69 84.12Q375.1 84.8 379.17 93.6L381.88 98.34L381.88 105.79Q381.2 107.82 375.1 112.9Q373.75 113.92 371.04 113.92L358.18 113.92Q352.42 113.24 352.08 107.82L352.08 92.93Q352.76 86.16 360.21 84.12Z" fill="#8e63d2"/>
<path d="M360.21 84.94L369.01 84.94Q374.43 86.16 375.1 92.93L375.1 106.47Q374.43 112.22 369.01 112.9L358.85 112.9Q353.3 112.22 353.1 107.15L353.1 93.27Q353.78 86.16 360.21 84.94Z" fill="#a880e8"/>
<path d="M360.21 84.94L369.01 84.94Q372.4 85.48 374.43 89.54L371.04 92.93L354.79 92.93Q353.78 92.93 353.3 93.74Q353.78 86.16 360.21 84.94Z" fill="#c59cff"/>
<path d="M375.1 96.31L381.88 98.34L381.88 105.79Q381.2 107.82 375.1 112.9Z" fill="#7b56c0"/>
<path d="M353.1 102.07L375.1 102.07" fill="none" stroke="#7a5bb5" stroke-width="0.9"/>
<path d="M362.58 85.14L362.58 112.9" fill="none" stroke="#7a5bb5" stroke-width="0.9"/>
<path d="M378.49 98.34L378.49 109.85" fill="none" stroke="#6846a8" stroke-width="0.9"/>
<path d="M369.01 112.9Q374.43 112.22 375.1 106.47L375.1 96.31" fill="none" stroke="#dcc6ff" stroke-width="1.0" stroke-linejoin="round" stroke-linecap="round"/>
<path d="M375.44 82.3L376.74 87.43L381.28 84.72L378.57 89.26L383.7 90.56L378.57 91.85L381.28 96.4L376.74 93.69L375.44 98.82L374.15 93.69L369.6 96.4L372.31 91.85L367.18 90.56L372.31 89.26L369.6 84.72L374.15 87.43Z" fill="#f7a600"/>
<path d="M429.79 88.53Q436.9 92.59 440.62 92.11Q446.04 91.91 449.77 88.53L452.47 93.27Q446.04 96.99 443.67 103.76L437.38 103.76Q436.22 96.31 428.44 89.54Z" fill="#4f9fdd"/>
<circle cx="440.49" cy="108.64" r="5.42" fill="#4f9fdd"/>
<circle cx="452.14" cy="89.54" r="4.2" fill="#4f9fdd"/>
<path d="M438.05 94.42L443.88 94.42L440.76 101.39Z" fill="#f2f2f2"/>
<rect x="426.41" y="82.43" width="6.23" height="6.1" rx="0" fill="#fff" stroke="#444" stroke-width="1.3"/>
<path d="M453.49 84.46L457.55 90.22L452.47 92.93L449.09 88.86L450.1 86.16Z" fill="#fff" stroke="#444" stroke-width="1.3" stroke-linejoin="round"/>
<circle cx="440.49" cy="108.64" r="3.72" fill="#fff" stroke="#555" stroke-width="1.6"/>
<circle cx="440.49" cy="108.64" r="1.76" fill="none" stroke="#888" stroke-width="0.8"/>
<path d="M440.49 106.13L440.49 111.21" fill="none" stroke="#888" stroke-width="0.7"/>
<path d="M437.92 108.64L443.06 108.64" fill="none" stroke="#888" stroke-width="0.7"/>
<path d="M501.36 88.19L506.98 88.19L506.98 113.58L501.36 113.58Z" fill="#dcdcdc"/>
<path d="M501.36 88.19L507.18 82.43L512.06 82.43L506.98 88.19Z" fill="#fafafa"/>
<path d="M512.06 82.43L507.18 82.43L501.36 88.19L501.36 113.58L506.98 113.58" fill="none" stroke="#555" stroke-width="1.3"/>
<path d="M508.2 88.19L517.14 88.19L517.14 113.58L508.2 113.58Z" fill="#6ab0e6"/>
<path d="M508.2 88.19L514.09 82.23L522.89 82.23L517.14 88.19Z" fill="#8ecbf9"/>
<path d="M517.14 88.19L522.89 82.23L522.89 107.82L517.14 113.58Z" fill="#4a94cf"/>
<rect x="519.98" y="96.04" width="5.96" height="2.98" rx="0" fill="#f2f2f2"/>
<path d="M521.2 97.53L526.61 97.53" fill="none" stroke="#222" stroke-width="1.3"/>
<path d="M530.34 97.53L525.94 94.96L526.75 97.53L525.94 100.1Z" fill="#222"/>
<g id="ic-fi">
<path d="M543.36 89.54L550.47 82.43L560.62 82.43L555.21 88.53Z" fill="#fafafa"/>
<path d="M543.36 89.54L555.21 89.54Q566.72 90.56 567.4 102.41L567.4 113.24L543.36 113.24Z" fill="#dcdcdc"/>
<path d="M567.4 102.41L574.51 96.65L574.51 106.13L567.4 113.24Z" fill="#b8b8b8"/>
<path d="M554.87 88.53L561.3 82.09Q573.49 84.8 574.98 95.77L568.21 102.07Q567.4 90.56 554.87 88.53Z" fill="#6ab0e6"/>
<path d="M559.95 82.43L550.47 82.43L543.36 89.54L543.36 113.24L567.4 113.24L574.51 106.13L574.51 96.99" fill="none" stroke="#555" stroke-width="1.3" stroke-linejoin="round" stroke-linecap="round"/>
</g>
<g id="ic-sh">
<path d="M586.35 89.2L610.39 89.2L610.39 113.24L586.35 113.24Z" fill="#dcdcdc"/>
<path d="M586.35 89.2L593.46 82.43L617.5 82.43L610.39 89.2Z" fill="#fafafa"/>
<path d="M610.39 89.2L617.5 82.43L617.5 106.47L610.39 113.24Z" fill="#b8b8b8"/>
<path d="M586.35 89.2L593.46 82.43L617.5 82.43L617.5 106.47L610.39 113.24L586.35 113.24Z" fill="none" stroke="#555" stroke-width="1.3" stroke-linejoin="round"/>
<rect x="589.6" y="93.13" width="17.2" height="17.2" rx="0" fill="#f2f2f2"/>
<path d="M590.21 93.94L597.86 93.94L597.86 101.86L590.21 109.52Z" fill="#4a94cf"/>
<path d="M590.21 109.65L597.86 102.07L605.99 102.07L605.99 109.65Z" fill="#8ecbf9"/>
</g>
<g id="ic-cb">
<path d="M629.14 96.31L647.08 96.31L647.08 113.58L629.14 113.58Z" fill="#6ab0e6"/><path d="M629.14 96.31L633.07 92.39L651.01 92.39L647.08 96.31Z" fill="#8ecbf9"/><path d="M647.08 96.31L651.01 92.39L651.01 109.65L647.08 113.58Z" fill="#4a94cf"/>
<path d="M639.3 86.16L656.9 86.16L656.9 103.42L639.3 103.42Z" fill="#6ab0e6"/><path d="M639.3 86.16L643.36 82.23L660.96 82.23L656.9 86.16Z" fill="#8ecbf9"/><path d="M656.9 86.16L660.96 82.23L660.96 99.49L656.9 103.42Z" fill="#4a94cf"/>
</g>
<path d="M674.17 103.08L696.17 103.08L696.17 112.56L674.17 112.56Z" fill="#dcdcdc"/>
<path d="M696.17 103.08L701.79 98.01L701.79 107.48L696.17 112.56Z" fill="#b8b8b8"/>
<path d="M674.17 103.08L674.17 112.56L696.17 112.56L701.79 107.48L701.79 98.34" fill="none" stroke="#555" stroke-width="1.3"/>
<path d="M672.0 100.38L696.51 100.38L703.96 92.59" fill="none" stroke="#fafafa" stroke-width="3.4"/>
<path d="M674.17 88.19L696.17 88.19L696.17 97.67L674.17 97.67Z" fill="#6ab0e6"/><path d="M674.17 88.19L679.92 82.23L701.93 82.23L696.17 88.19Z" fill="#8ecbf9"/><path d="M696.17 88.19L701.93 82.23L701.93 91.71L696.17 97.67Z" fill="#4a94cf"/>
<path d="M672.0 100.38L696.51 100.38L703.96 92.59" fill="none" stroke="#1e88e5" stroke-width="1.2"/>
<g id="ic-mv">
<path d="M722.44 98.01L739.64 98.01" fill="none" stroke="#333" stroke-width="2.0"/><path d="M731.04 89.41L731.04 106.6" fill="none" stroke="#333" stroke-width="2.0"/><path d="M731.04 82.43L736.12 89.74L725.96 89.74Z" fill="#333"/><path d="M731.04 113.58L736.12 106.27L725.96 106.27Z" fill="#333"/><path d="M715.47 98.01L722.78 92.93L722.78 103.08Z" fill="#333"/><path d="M746.61 98.01L739.3 92.93L739.3 103.08Z" fill="#333"/>
</g>
<path d="M769.14 102.07L781.33 102.07L781.33 113.58L769.14 113.58Z" fill="#dcdcdc" stroke="#555" stroke-width="1.3" stroke-linejoin="round"/>
<path d="M781.67 102.07L793.18 102.07L793.18 113.58L781.67 113.58Z" fill="#dcdcdc"/>
<path d="M781.67 102.07L785.39 98.34L796.9 98.34L793.18 102.07Z" fill="#f4f4f4"/>
<path d="M793.18 102.07L796.9 98.34L796.9 109.52L793.18 113.58Z" fill="#b8b8b8"/>
<path d="M781.67 102.07L785.39 98.34L796.9 98.34L796.9 109.52L793.18 113.58L781.67 113.58Z" fill="none" stroke="#555" stroke-width="1.3" stroke-linejoin="round"/>
<path d="M769.14 90.22L781.33 90.22L781.33 102.07L769.14 102.07Z" fill="#6ab0e6"/><path d="M769.14 90.22L773.0 86.16L785.19 86.16L781.33 90.22Z" fill="#8ecbf9"/><path d="M781.33 90.22L785.19 86.16L785.19 98.01L781.33 102.07Z" fill="#4a94cf"/>
<path d="M792.5 82.09L793.8 87.43L798.48 84.57L795.63 89.26L800.96 90.56L795.63 91.85L798.48 96.54L793.8 93.69L792.5 99.02L791.2 93.69L786.52 96.54L789.37 91.85L784.04 90.56L789.37 89.26L786.52 84.57L791.2 87.43Z" fill="#f7a600"/>
<path d="M814.37 91.71L821.28 84.8L821.28 105.25L814.98 110.87L814.37 109.85Z" fill="#c4c4c4" stroke="#555" stroke-width="1.3" stroke-linejoin="round"/>
<path d="M820.94 86.16Q821.28 84.12 823.98 84.26Q826.69 84.46 826.69 86.16L826.69 94.96Q823.98 96.99 821.28 95.64Z" fill="#dedede" stroke="#555" stroke-width="1.3" stroke-linejoin="round" stroke-linecap="round"/>
<ellipse cx="823.65" cy="86.29" rx="1.49" ry="0.61" fill="#999"/>
<path d="M823.44 97.12L823.44 101.86" fill="none" stroke="#1e88e5" stroke-width="1.3"/>
<path d="M829.2 95.64Q829.4 93.27 832.11 93.47L834.82 94.28L834.82 105.11Q831.77 106.13 829.2 104.44Z" fill="#c4c4c4" stroke="#555" stroke-width="1.3" stroke-linejoin="round" stroke-linecap="round"/>
<ellipse cx="832.18" cy="95.3" rx="2.44" ry="0.95" fill="#e6e6e6" stroke="#555" stroke-width="0.9"/>
<path d="M834.48 86.7L841.59 92.39L841.59 110.87L840.57 111.68L834.48 105.79Z" fill="#dedede" stroke="#555" stroke-width="1.3" stroke-linejoin="round"/>
<path d="M832.45 90.02L832.45 95.77" fill="none" stroke="#1e88e5" stroke-width="1.3"/>
<rect x="855.13" y="82.23" width="6.77" height="6.5" rx="0" fill="#5aa7e4" stroke="#4a94cf" stroke-width="0.8"/>
<rect x="855.33" y="88.73" width="6.23" height="5.69" rx="0" fill="#fff" stroke="#555" stroke-width="1.2"/>
<rect x="861.56" y="88.73" width="6.1" height="5.69" rx="0" fill="#fff" stroke="#555" stroke-width="1.2"/>
<path d="M860.41 96.11L860.41 111.89" fill="none" stroke="#8a8a8a" stroke-width="1.2"/>
<path d="M860.41 99.49L867.79 99.49" fill="none" stroke="#8a8a8a" stroke-width="1.2"/>
<path d="M860.41 104.44L867.79 104.44" fill="none" stroke="#8a8a8a" stroke-width="1.2"/>
<path d="M860.41 109.38L867.79 109.38" fill="none" stroke="#8a8a8a" stroke-width="1.2"/>
<rect x="870.5" y="90.35" width="15.98" height="23.09" rx="0" fill="#fff" stroke="#555" stroke-width="1.3"/>
<rect x="870.5" y="90.35" width="15.98" height="3.12" rx="0" fill="#555"/>
<rect x="871.38" y="92.11" width="1.83" height="0.82" rx="0" fill="#fff"/>
<path d="M870.5 97.33L886.48 97.33" fill="none" stroke="#777" stroke-width="1.1"/>
<path d="M870.5 101.39L886.48 101.39" fill="none" stroke="#777" stroke-width="1.1"/>
<path d="M870.5 105.45L886.48 105.45" fill="none" stroke="#777" stroke-width="1.1"/>
<path d="M870.5 109.52L886.48 109.52" fill="none" stroke="#777" stroke-width="1.1"/>
<path d="M875.44 93.47L875.44 113.44" fill="none" stroke="#777" stroke-width="1.1"/>
<path d="M909.48 89.2L929.79 89.2L929.79 109.52L909.48 109.52Z" fill="#dcdcdc"/>
<path d="M909.48 89.2L916.25 82.43L936.56 82.43L929.79 89.2Z" fill="#f4f4f4"/>
<path d="M929.79 89.2L936.56 82.43L936.56 103.08L929.79 109.52Z" fill="#b8b8b8"/>
<path d="M909.48 89.2L916.25 82.43L936.56 82.43L936.56 103.08L929.79 109.52L909.48 109.52Z" fill="none" stroke="#555" stroke-width="1.3" stroke-linejoin="round"/>
<rect x="925.86" y="101.19" width="16.46" height="13.07" rx="0" fill="#f2f2f2"/><path d="M927.08 104.98L940.96 104.98" fill="none" stroke="#555" stroke-width="1.8"/><path d="M927.08 111.01L940.96 111.01" fill="none" stroke="#555" stroke-width="1.8"/><rect x="930.06" y="102.07" width="1.9" height="5.75" rx="0.6" fill="#1e88e5"/><rect x="936.09" y="108.16" width="1.69" height="5.76" rx="0" fill="#555"/>
<rect x="952.27" y="82.36" width="29.52" height="28.37" rx="0" fill="#fafafa" stroke="#666" stroke-width="1.3"/>
<rect x="952.27" y="82.36" width="29.52" height="5.49" rx="0" fill="#666"/>
<rect x="954.17" y="84.12" width="3.72" height="1.77" rx="0" fill="#fff"/>
<rect x="955.39" y="91.44" width="23.02" height="15.16" rx="0" fill="#fff" stroke="#666" stroke-width="1.4"/>
<path d="M960.6 91.44L960.6 106.6" fill="none" stroke="#666" stroke-width="1.2"/>
<path d="M965.34 91.44L965.34 106.6" fill="none" stroke="#666" stroke-width="1.2"/>
<path d="M955.39 96.31L978.41 96.31" fill="none" stroke="#666" stroke-width="1.2"/>
<path d="M955.39 101.39L978.41 101.39" fill="none" stroke="#666" stroke-width="1.2"/>
<rect x="968.86" y="101.19" width="16.45" height="13.07" rx="0" fill="#f2f2f2"/><path d="M970.08 104.98L983.96 104.98" fill="none" stroke="#555" stroke-width="1.8"/><path d="M970.08 111.01L983.96 111.01" fill="none" stroke="#555" stroke-width="1.8"/><rect x="973.06" y="102.07" width="1.89" height="5.75" rx="0.6" fill="#1e88e5"/><rect x="979.08" y="108.16" width="1.7" height="5.76" rx="0" fill="#555"/>
<path d="M1030.52 91.23L1037.76 91.23L1037.76 112.56L1030.52 112.56Z" fill="#dcdcdc"/>
<path d="M1030.52 91.23L1039.25 82.43L1046.22 82.43L1037.76 91.23Z" fill="#fafafa"/>
<path d="M1045.89 82.43L1039.25 82.43L1030.31 91.23L1030.31 112.56L1037.9 112.56" fill="none" stroke="#555" stroke-width="1.3"/>
<path d="M1039.11 90.9L1047.92 82.09L1047.92 103.76L1039.11 112.56Z" fill="#5cc480" stroke="#4fb873" stroke-width="0.6" stroke-linejoin="round"/>
<path d="M1051.17 90.9L1059.97 82.23L1059.97 103.9L1051.17 112.56Z" fill="#e89b62" stroke="#dd8e55" stroke-width="0.6" stroke-linejoin="round"/>
<rect x="1120.02" y="100.04" width="27.9" height="5.75" rx="0" fill="#f9a600" stroke="#ee9a00" stroke-width="0.6"/>
<path d="M1121.51 100.24L1121.51 101.86" fill="none" stroke="#555" stroke-width="0.9"/>
<path d="M1124.56 100.24L1124.56 102.95" fill="none" stroke="#555" stroke-width="0.9"/>
<path d="M1127.6 100.24L1127.6 101.86" fill="none" stroke="#555" stroke-width="0.9"/>
<path d="M1130.31 100.24L1130.31 102.95" fill="none" stroke="#555" stroke-width="0.9"/>
<path d="M1133.36 100.24L1133.36 101.86" fill="none" stroke="#555" stroke-width="0.9"/>
<path d="M1136.41 100.24L1136.41 102.95" fill="none" stroke="#555" stroke-width="0.9"/>
<path d="M1139.45 100.24L1139.45 101.86" fill="none" stroke="#555" stroke-width="0.9"/>
<path d="M1142.5 100.24L1142.5 102.95" fill="none" stroke="#555" stroke-width="0.9"/>
<path d="M1145.55 100.24L1145.55 101.86" fill="none" stroke="#555" stroke-width="0.9"/>
<path d="M1120.49 90.08L1120.49 98.82" fill="none" stroke="#555" stroke-width="1.2"/>
<path d="M1147.58 90.08L1147.58 98.82" fill="none" stroke="#555" stroke-width="1.2"/>
<path d="M1123.54 94.42L1144.53 94.42" fill="none" stroke="#555" stroke-width="1.2"/>
<path d="M1121.38 94.42L1124.76 92.11L1124.76 96.72Z" fill="#555"/>
<path d="M1146.7 94.42L1143.31 92.11L1143.31 96.72Z" fill="#555"/>
<path d="M1189.22 93.94L1206.82 93.94L1206.82 111.55L1189.22 111.55Z" fill="#dcdcdc"/>
<path d="M1189.22 93.94L1197.01 86.16L1214.81 86.16L1206.82 93.94Z" fill="#f4f4f4"/>
<path d="M1206.82 93.94L1214.81 86.16L1214.81 103.76L1206.82 111.55Z" fill="#b8b8b8"/>
<path d="M1202.42 86.16L1214.81 86.16L1214.81 99.7" fill="none" stroke="#555" stroke-width="1.3"/>
<path d="M1191.59 91.71L1189.22 93.94L1189.22 111.55L1200.05 111.55" fill="none" stroke="#555" stroke-width="1.3"/>
<path d="M1185.02 86.02L1193.28 86.02L1193.28 82.09L1202.42 88.05L1193.28 93.94L1193.28 90.08L1185.02 90.08Z" fill="#1e88e5"/>
<g transform="translate(1206.15 109.18) rotate(-38)"><rect x="-5.6" y="-3.3" width="11.2" height="6.6" rx="3.3" fill="none" stroke="#f2f2f2" stroke-width="3.6"/><rect x="-5.6" y="-3.3" width="11.2" height="6.6" rx="3.3" fill="none" stroke="#222" stroke-width="2"/></g>
<g transform="translate(1211.9 104.78) rotate(-38)"><rect x="-5.6" y="-3.3" width="11.2" height="6.6" rx="3.3" fill="none" stroke="#f2f2f2" stroke-width="3.6"/><rect x="-5.6" y="-3.3" width="11.2" height="6.6" rx="3.3" fill="none" stroke="#222" stroke-width="2"/></g>
<rect x="1236.25" y="90.56" width="11.65" height="2.71" rx="0" fill="#8ecbf9"/>
<rect x="1235.44" y="92.93" width="13.0" height="19.97" rx="1" fill="#6ab0e6"/>
<rect x="1235.03" y="93.74" width="13.81" height="0.68" rx="0" fill="#8ecbf9"/>
<rect x="1235.03" y="95.57" width="13.81" height="0.67" rx="0" fill="#8ecbf9"/>
<rect x="1235.03" y="97.4" width="13.81" height="0.67" rx="0" fill="#8ecbf9"/>
<rect x="1235.03" y="99.22" width="13.81" height="0.68" rx="0" fill="#8ecbf9"/>
<rect x="1235.03" y="101.05" width="13.81" height="0.68" rx="0" fill="#8ecbf9"/>
<rect x="1235.03" y="102.88" width="13.81" height="0.68" rx="0" fill="#8ecbf9"/>
<rect x="1235.03" y="104.71" width="13.81" height="0.68" rx="0" fill="#8ecbf9"/>
<rect x="1235.03" y="106.54" width="13.81" height="0.67" rx="0" fill="#8ecbf9"/>
<rect x="1235.03" y="108.36" width="13.81" height="0.68" rx="0" fill="#8ecbf9"/>
<rect x="1235.03" y="110.19" width="13.81" height="0.68" rx="0" fill="#8ecbf9"/>
<rect x="1235.03" y="112.02" width="13.81" height="0.68" rx="0" fill="#8ecbf9"/>
<rect x="1235.03" y="92.93" width="5.28" height="19.97" rx="0" fill="#8ecbf9" opacity="0.45"/>
<path d="M1235.44 112.22Q1241.67 114.59 1248.44 112.22L1248.44 111.21L1235.44 111.21Z" fill="#6ab0e6"/>
<rect x="1230.16" y="83.31" width="23.69" height="7.25" rx="1.2" fill="#6ab0e6" stroke="#3f86c0" stroke-width="0.8"/>
<rect x="1230.29" y="83.45" width="5.96" height="6.97" rx="0" fill="#8ecbf9"/>
<rect x="1248.1" y="83.45" width="5.62" height="6.97" rx="0" fill="#4a94cf"/>
<path d="M1250.88 100.1L1255.07 100.1L1255.07 104.91L1259.88 104.91L1259.88 109.11L1255.07 109.11L1255.07 113.92L1250.88 113.92L1250.88 109.11L1246.07 109.11L1246.07 104.91L1250.88 104.91Z" fill="#23b14d" stroke="#1c9a40" stroke-width="0.6" stroke-linejoin="round"/>
<rect x="1272.14" y="83.11" width="28.77" height="28.78" rx="0" fill="#85cbfc" stroke="#3f8fcf" stroke-width="1.2"/>
<path d="M1272.68 102.07Q1280.26 90.9 1285.0 98.34Q1288.39 103.76 1290.76 105.25Q1295.16 98.34 1300.44 106.13L1300.44 111.34L1272.68 111.34Z" fill="#3f90cb"/>
<circle cx="1292.79" cy="90.9" r="3.05" fill="#fffdc8"/>
<rect x="1332" y="78.8" width="38" height="38.2" fill="#0696d7"/>
<rect x="1335.2" y="82.6" width="27.4" height="20.8" fill="none" stroke="#a5e86e" stroke-width="1" stroke-dasharray="4 2"/>
<path d="M1355.7 96.6V111.8L1359.3 108.5L1362 114.1L1364.5 112.9L1361.8 107.5L1366.8 107.3Z" fill="#fff" stroke="#0696d7" stroke-width="0.5"/></g>
<g id="timeline"><rect x="0" y="982" width="1920" height="27" fill="#f2f2f2"/>
<rect x="0" y="982" width="1920" height="1" fill="#cfcfcf"/>
<rect x="10.8" y="1001.1" width="2.1" height="14" fill="#666"/><path d="M22 1001.4V1015L13.3 1008.2Z" fill="#666"/>
<path d="M45 1001.1V1015L35.6 1008Z" fill="#666"/><rect x="46.2" y="1005" width="1.8" height="8" fill="#666"/>
<path d="M60.9 999.2V1016L73.3 1007.6Z" fill="#666"/>
<rect x="85" y="1005" width="1.8" height="8" fill="#666"/><path d="M87.9 1001.1V1015L97.5 1008Z" fill="#666"/>
<path d="M111 1001.3V1015L119.9 1008.2Z" fill="#666"/><rect x="120.2" y="1001.1" width="1.9" height="14" fill="#666"/>
<rect x="646.1" y="993.8" width="24" height="20" rx="2.5" fill="#e8e81e"/><rect x="670.1" y="993.8" width="23.8" height="20" rx="2.5" fill="#e8e81e"/>
<g transform="translate(146 998)"><rect x="0.6" y="0.9" width="13.2" height="1.3" fill="#cfcfcf"/><path d="M0.9 1.5V14M13.5 1.5V11" stroke="#777" stroke-width="0.9" fill="none"/><rect x="0" y="0.3" width="1.8" height="1.8" fill="#2196f3"/><rect x="12.6" y="0.3" width="1.8" height="1.8" fill="#2196f3"/><path d="M4.4 4.8H10.4M4.4 4.8V11" stroke="#666" stroke-width="0.8" fill="none" stroke-dasharray="2.4 0.8"/><path d="M10.6 5.4Q9.6 9.6 5 11.8" stroke="#555" stroke-width="0.9" fill="none"/><rect x="3.4" y="3.9" width="1.9" height="1.9" fill="#2196f3"/><rect x="9.6" y="3.9" width="1.9" height="1.9" fill="#2196f3"/><rect x="3.4" y="10.2" width="1.9" height="1.9" fill="#2196f3"/><circle cx="14.2" cy="9.6" r="1.6" fill="#f33"/><circle cx="12" cy="11.2" r="1.5" fill="#f9a825"/></g>
<g transform="translate(170 998)"><rect x="0.6" y="0.9" width="13.2" height="1.3" fill="#cfcfcf"/><path d="M0.9 1.5V14M13.5 1.5V11" stroke="#777" stroke-width="0.9" fill="none"/><rect x="0" y="0.3" width="1.8" height="1.8" fill="#2196f3"/><rect x="12.6" y="0.3" width="1.8" height="1.8" fill="#2196f3"/><path d="M4.4 4.8H10.4M4.4 4.8V11" stroke="#666" stroke-width="0.8" fill="none" stroke-dasharray="2.4 0.8"/><path d="M10.6 5.4Q9.6 9.6 5 11.8" stroke="#555" stroke-width="0.9" fill="none"/><rect x="3.4" y="3.9" width="1.9" height="1.9" fill="#2196f3"/><rect x="9.6" y="3.9" width="1.9" height="1.9" fill="#2196f3"/><rect x="3.4" y="10.2" width="1.9" height="1.9" fill="#2196f3"/><circle cx="14.2" cy="9.6" r="1.6" fill="#f33"/><circle cx="12" cy="11.2" r="1.5" fill="#f9a825"/></g>
<use href="#ic-ex" transform="translate(103.65 956.95) scale(0.5)"/>
<use href="#ic-fi" transform="translate(-53.69999999999999 956.95) scale(0.5)"/>
<use href="#ic-ex" transform="translate(151.65 956.95) scale(0.5)"/>
<use href="#ic-mv" transform="translate(-91.35000000000002 957.3) scale(0.5)"/>
<use href="#ic-mv" transform="translate(-67.35000000000002 957.3) scale(0.5)"/>
<use href="#ic-fi" transform="translate(42.30000000000001 956.95) scale(0.5)"/>
<use href="#ic-sh" transform="translate(45.0 956.8) scale(0.5)"/>
<use href="#ic-sh" transform="translate(69.0 956.8) scale(0.5)"/>
<use href="#ic-mv" transform="translate(28.649999999999977 957.3) scale(0.5)"/>
<use href="#ic-mv" transform="translate(52.64999999999998 957.3) scale(0.5)"/>
<use href="#ic-mv" transform="translate(76.64999999999998 957.3) scale(0.5)"/>
<use href="#ic-mv" transform="translate(100.64999999999998 957.3) scale(0.5)"/>
<g transform="translate(482 998)"><rect x="0.6" y="0.9" width="13.2" height="1.3" fill="#cfcfcf"/><path d="M0.9 1.5V14M13.5 1.5V11" stroke="#777" stroke-width="0.9" fill="none"/><rect x="0" y="0.3" width="1.8" height="1.8" fill="#2196f3"/><rect x="12.6" y="0.3" width="1.8" height="1.8" fill="#2196f3"/><path d="M4.4 4.8H10.4M4.4 4.8V11" stroke="#666" stroke-width="0.8" fill="none" stroke-dasharray="2.4 0.8"/><path d="M10.6 5.4Q9.6 9.6 5 11.8" stroke="#555" stroke-width="0.9" fill="none"/><rect x="3.4" y="3.9" width="1.9" height="1.9" fill="#2196f3"/><rect x="9.6" y="3.9" width="1.9" height="1.9" fill="#2196f3"/><rect x="3.4" y="10.2" width="1.9" height="1.9" fill="#2196f3"/><circle cx="14.2" cy="9.6" r="1.6" fill="#f33"/><circle cx="12" cy="11.2" r="1.5" fill="#f9a825"/></g>
<use href="#ic-mv" transform="translate(148.64999999999998 957.3) scale(0.5)"/>
<use href="#ic-mv" transform="translate(172.64999999999998 957.3) scale(0.5)"/>
<use href="#ic-mv" transform="translate(196.64999999999998 957.3) scale(0.5)"/>
<use href="#ic-mv" transform="translate(220.64999999999998 957.3) scale(0.5)"/>
<g transform="translate(602 998)"><rect x="0.6" y="0.9" width="13.2" height="1.3" fill="#cfcfcf"/><path d="M0.9 1.5V14M13.5 1.5V11" stroke="#777" stroke-width="0.9" fill="none"/><rect x="0" y="0.3" width="1.8" height="1.8" fill="#2196f3"/><rect x="12.6" y="0.3" width="1.8" height="1.8" fill="#2196f3"/><path d="M4.4 4.8H10.4M4.4 4.8V11" stroke="#666" stroke-width="0.8" fill="none" stroke-dasharray="2.4 0.8"/><path d="M10.6 5.4Q9.6 9.6 5 11.8" stroke="#555" stroke-width="0.9" fill="none"/><rect x="3.4" y="3.9" width="1.9" height="1.9" fill="#2196f3"/><rect x="9.6" y="3.9" width="1.9" height="1.9" fill="#2196f3"/><rect x="3.4" y="10.2" width="1.9" height="1.9" fill="#2196f3"/><circle cx="14.2" cy="9.6" r="1.6" fill="#f33"/><circle cx="12" cy="11.2" r="1.5" fill="#f9a825"/></g>
<g transform="translate(626 998)"><rect x="0.6" y="0.9" width="13.2" height="1.3" fill="#cfcfcf"/><path d="M0.9 1.5V14M13.5 1.5V11" stroke="#777" stroke-width="0.9" fill="none"/><rect x="0" y="0.3" width="1.8" height="1.8" fill="#2196f3"/><rect x="12.6" y="0.3" width="1.8" height="1.8" fill="#2196f3"/><path d="M4.4 4.8H10.4M4.4 4.8V11" stroke="#666" stroke-width="0.8" fill="none" stroke-dasharray="2.4 0.8"/><path d="M10.6 5.4Q9.6 9.6 5 11.8" stroke="#555" stroke-width="0.9" fill="none"/><rect x="3.4" y="3.9" width="1.9" height="1.9" fill="#2196f3"/><rect x="9.6" y="3.9" width="1.9" height="1.9" fill="#2196f3"/><rect x="3.4" y="10.2" width="1.9" height="1.9" fill="#2196f3"/><circle cx="14.2" cy="9.6" r="1.6" fill="#f33"/><circle cx="12" cy="11.2" r="1.5" fill="#f9a825"/></g>
<g transform="translate(650 998)"><rect x="5.2" y="0" width="6" height="7.4" rx="2" fill="#f4f4f4" stroke="#bbb" stroke-width="0.6"/><rect x="12.2" y="7" width="5" height="6" rx="1.6" fill="#ececec" stroke="#999" stroke-width="0.6"/><path d="M6 8V12M8.6 9.6V12" stroke="#e65100" stroke-width="0.9"/></g>
<g transform="translate(674 998)"><rect x="5.2" y="0" width="6" height="7.4" rx="2" fill="#f4f4f4" stroke="#bbb" stroke-width="0.6"/><rect x="12.2" y="7" width="5" height="6" rx="1.6" fill="#ececec" stroke="#999" stroke-width="0.6"/><path d="M6 8V12M8.6 9.6V12" stroke="#e65100" stroke-width="0.9"/></g>
<use href="#ic-ex" transform="translate(607.65 956.95) scale(0.5)"/>
<use href="#ic-ho" transform="translate(589.0 956.8) scale(0.5)"/>
<use href="#ic-ex" transform="translate(655.65 956.95) scale(0.5)"/>
<use href="#ic-mv" transform="translate(412.65 957.3) scale(0.5)"/>
<use href="#ic-ex" transform="translate(703.65 956.95) scale(0.5)"/>
<use href="#ic-ho" transform="translate(685.0 956.8) scale(0.5)"/>
<use href="#ic-ex" transform="translate(751.65 956.95) scale(0.5)"/>
<use href="#ic-mv" transform="translate(508.65 957.3) scale(0.5)"/>
<use href="#ic-mv" transform="translate(532.65 957.3) scale(0.5)"/>
<use href="#ic-mv" transform="translate(556.65 957.3) scale(0.5)"/>
<use href="#ic-mv" transform="translate(580.65 957.3) scale(0.5)"/>
<use href="#ic-mv" transform="translate(604.65 957.3) scale(0.5)"/>
<g transform="translate(986 998)"><rect x="0.6" y="0.9" width="13.2" height="1.3" fill="#cfcfcf"/><path d="M0.9 1.5V14M13.5 1.5V11" stroke="#777" stroke-width="0.9" fill="none"/><rect x="0" y="0.3" width="1.8" height="1.8" fill="#2196f3"/><rect x="12.6" y="0.3" width="1.8" height="1.8" fill="#2196f3"/><path d="M4.4 4.8H10.4M4.4 4.8V11" stroke="#666" stroke-width="0.8" fill="none" stroke-dasharray="2.4 0.8"/><path d="M10.6 5.4Q9.6 9.6 5 11.8" stroke="#555" stroke-width="0.9" fill="none"/><rect x="3.4" y="3.9" width="1.9" height="1.9" fill="#2196f3"/><rect x="9.6" y="3.9" width="1.9" height="1.9" fill="#2196f3"/><rect x="3.4" y="10.2" width="1.9" height="1.9" fill="#2196f3"/><circle cx="14.2" cy="9.6" r="1.6" fill="#f33"/><circle cx="12" cy="11.2" r="1.5" fill="#f9a825"/></g>
<use href="#ic-ex" transform="translate(919.65 956.95) scale(0.5)"/>
<use href="#ic-mv" transform="translate(676.65 957.3) scale(0.5)"/>
<use href="#ic-mv" transform="translate(700.65 957.3) scale(0.5)"/>
<g transform="translate(1082 998)"><rect x="0.6" y="0.9" width="13.2" height="1.3" fill="#cfcfcf"/><path d="M0.9 1.5V14M13.5 1.5V11" stroke="#777" stroke-width="0.9" fill="none"/><rect x="0" y="0.3" width="1.8" height="1.8" fill="#2196f3"/><rect x="12.6" y="0.3" width="1.8" height="1.8" fill="#2196f3"/><path d="M4.4 4.8H10.4M4.4 4.8V11" stroke="#666" stroke-width="0.8" fill="none" stroke-dasharray="2.4 0.8"/><path d="M10.6 5.4Q9.6 9.6 5 11.8" stroke="#555" stroke-width="0.9" fill="none"/><rect x="3.4" y="3.9" width="1.9" height="1.9" fill="#2196f3"/><rect x="9.6" y="3.9" width="1.9" height="1.9" fill="#2196f3"/><rect x="3.4" y="10.2" width="1.9" height="1.9" fill="#2196f3"/><circle cx="14.2" cy="9.6" r="1.6" fill="#f33"/><circle cx="12" cy="11.2" r="1.5" fill="#f9a825"/></g>
<g transform="translate(1106 998)"><rect x="0.6" y="0.9" width="13.2" height="1.3" fill="#cfcfcf"/><path d="M0.9 1.5V14M13.5 1.5V11" stroke="#777" stroke-width="0.9" fill="none"/><rect x="0" y="0.3" width="1.8" height="1.8" fill="#2196f3"/><rect x="12.6" y="0.3" width="1.8" height="1.8" fill="#2196f3"/><path d="M4.4 4.8H10.4M4.4 4.8V11" stroke="#666" stroke-width="0.8" fill="none" stroke-dasharray="2.4 0.8"/><path d="M10.6 5.4Q9.6 9.6 5 11.8" stroke="#555" stroke-width="0.9" fill="none"/><rect x="3.4" y="3.9" width="1.9" height="1.9" fill="#2196f3"/><rect x="9.6" y="3.9" width="1.9" height="1.9" fill="#2196f3"/><rect x="3.4" y="10.2" width="1.9" height="1.9" fill="#2196f3"/><circle cx="14.2" cy="9.6" r="1.6" fill="#f33"/><circle cx="12" cy="11.2" r="1.5" fill="#f9a825"/></g>
<use href="#ic-ex" transform="translate(1039.65 956.95) scale(0.5)"/>
<use href="#ic-ex" transform="translate(1063.65 956.95) scale(0.5)"/>
<use href="#ic-cb" transform="translate(863.5 956.9) scale(0.5)"/>
<use href="#ic-mv" transform="translate(844.65 957.3) scale(0.5)"/>
<use href="#ic-cb" transform="translate(911.5 956.9) scale(0.5)"/>
<use href="#ic-cb" transform="translate(935.5 956.9) scale(0.5)"/>
<use href="#ic-mv" transform="translate(916.65 957.3) scale(0.5)"/>
<use href="#ic-mv" transform="translate(940.65 957.3) scale(0.5)"/>
<use href="#ic-mv" transform="translate(964.65 957.3) scale(0.5)"/>
<use href="#ic-mv" transform="translate(988.65 957.3) scale(0.5)"/>
<use href="#ic-mv" transform="translate(1012.65 957.3) scale(0.5)"/>
<g transform="translate(1396 998)"><path d="M-0.6 0.6L3.8 5M3.8 0.6L-0.6 5" stroke="#e53935" stroke-width="1.9"/><path d="M4.6 8L7 5.4H13.6V11H4.6Z" fill="#eee" stroke="#999" stroke-width="0.5"/><path d="M4.6 8H11.4L13.6 5.6V12H4.6Z" fill="none"/><rect x="4.6" y="8" width="6.6" height="4" fill="#b5dcf5" stroke="#3f8fcf" stroke-width="0.9"/><path d="M11.2 8L13.6 5.6V11" fill="#bbb" stroke="#999" stroke-width="0.5"/></g>
<g transform="translate(1420 998)"><path d="M-0.6 0.6L3.8 5M3.8 0.6L-0.6 5" stroke="#e53935" stroke-width="1.9"/><path d="M4.6 8L7 5.4H13.6V11H4.6Z" fill="#eee" stroke="#999" stroke-width="0.5"/><path d="M4.6 8H11.4L13.6 5.6V12H4.6Z" fill="none"/><rect x="4.6" y="8" width="6.6" height="4" fill="#b5dcf5" stroke="#3f8fcf" stroke-width="0.9"/><path d="M11.2 8L13.6 5.6V11" fill="#bbb" stroke="#999" stroke-width="0.5"/></g>
<g transform="translate(1442 998)"><rect x="0.6" y="0.9" width="13.2" height="1.3" fill="#cfcfcf"/><path d="M0.9 1.5V14M13.5 1.5V11" stroke="#777" stroke-width="0.9" fill="none"/><rect x="0" y="0.3" width="1.8" height="1.8" fill="#2196f3"/><rect x="12.6" y="0.3" width="1.8" height="1.8" fill="#2196f3"/><path d="M4.4 4.8H10.4M4.4 4.8V11" stroke="#666" stroke-width="0.8" fill="none" stroke-dasharray="2.4 0.8"/><path d="M10.6 5.4Q9.6 9.6 5 11.8" stroke="#555" stroke-width="0.9" fill="none"/><rect x="3.4" y="3.9" width="1.9" height="1.9" fill="#2196f3"/><rect x="9.6" y="3.9" width="1.9" height="1.9" fill="#2196f3"/><rect x="3.4" y="10.2" width="1.9" height="1.9" fill="#2196f3"/><circle cx="14.2" cy="9.6" r="1.6" fill="#f33"/><circle cx="12" cy="11.2" r="1.5" fill="#f9a825"/></g>
<use href="#ic-ho" transform="translate(1333.0 956.8) scale(0.5)"/>
<use href="#ic-mv" transform="translate(1132.65 957.3) scale(0.5)"/>
<use href="#ic-mv" transform="translate(1156.65 957.3) scale(0.5)"/>
<use href="#ic-ho" transform="translate(1405.0 956.8) scale(0.5)"/>
<use href="#ic-ho" transform="translate(1429.0 956.8) scale(0.5)"/>
<path d="M1576.1 992.1H1587.9V994.4L1583 1000V1012H1580.8V1000L1576.1 994.4Z" fill="#666"/>
<rect x="1586.6" y="998.4" width="7" height="7" rx="1.8" fill="#f0f0f0" stroke="#d2d2d2" stroke-width="0.8"/><path d="M1594.6 1008L1596.6 1006H1602.6V1010H1594.6Z" fill="#cfe5f6"/>
<rect x="1610.6" y="998.4" width="7" height="7" rx="1.8" fill="#f0f0f0" stroke="#d2d2d2" stroke-width="0.8"/><path d="M1618.6 1008L1620.6 1006H1626.6V1010H1618.6Z" fill="#cfe5f6"/>
<path d="M1635.6 1003L1639.4 999.4L1642 1000.6V1010H1635.6ZM1644 1004L1646.4 1000.4L1649 1003V1010H1644Z" fill="#e6e6e6" stroke="#dadada" stroke-width="0.6"/><path d="M1645 1000.5L1643.6 1003.4" stroke="#cfe5f6" stroke-width="1"/>
<g transform="translate(1898 1008)"><circle r="5.2" fill="none" stroke="#666" stroke-width="3.4"/><g stroke="#666" stroke-width="2.6"><path d="M0 -6V-9.4" transform="rotate(0)"/><path d="M0 -6V-9.4" transform="rotate(45)"/><path d="M0 -6V-9.4" transform="rotate(90)"/><path d="M0 -6V-9.4" transform="rotate(135)"/><path d="M0 -6V-9.4" transform="rotate(180)"/><path d="M0 -6V-9.4" transform="rotate(225)"/><path d="M0 -6V-9.4" transform="rotate(270)"/><path d="M0 -6V-9.4" transform="rotate(315)"/></g></g></g>
</svg></body></html>
